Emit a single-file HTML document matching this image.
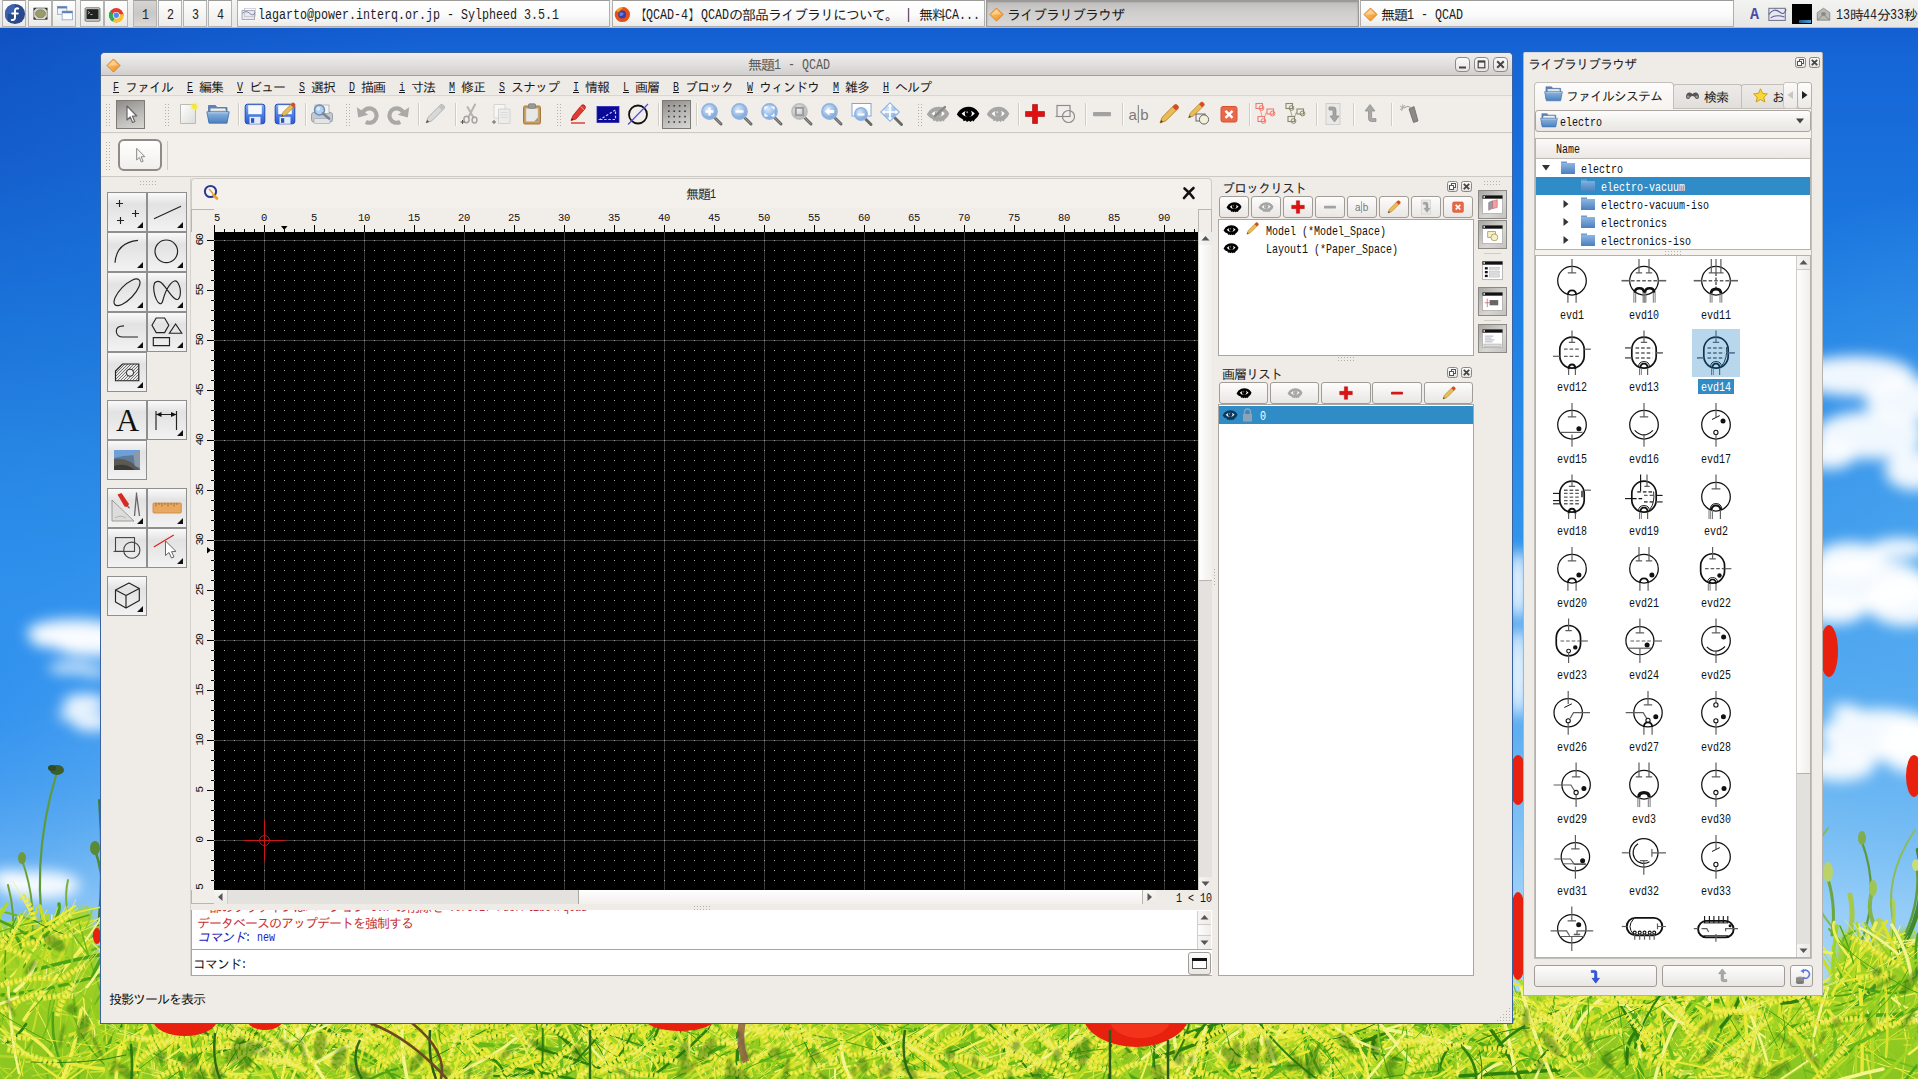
<!DOCTYPE html>
<html lang="ja"><head><meta charset="utf-8"><title>QCAD</title><style>
html,body{margin:0;padding:0}
body{width:1918px;height:1079px;overflow:hidden;position:relative;background:#2a86e4;font-family:"Liberation Mono","IPAGothic","Noto Sans CJK JP",monospace;font-size:12px;color:#1a1a1a}
div{position:absolute;box-sizing:border-box}
svg{position:absolute;overflow:visible}
.t{white-space:pre;overflow:visible}
.L{letter-spacing:0;font-style:normal;position:relative;top:-1px;display:inline-block;transform-origin:0 50%;white-space:pre;font-family:"Liberation Mono",monospace}
u{text-decoration:underline}
.btn{border:1px solid #a09c98;border-radius:3px;background:linear-gradient(#fdfdfc,#e9e6e3)}
.pbtn{border:1px solid #7d7a77;background:linear-gradient(160deg,#8e8c8a,#bcbab7 55%,#d9d7d4)}
.tb{border:1px solid #8f8f8f;background:linear-gradient(#fafafa 0%,#e2e2e2 30%,#f2f2f2 100%)}
</style></head><body>
<svg width="1918" height="1079" viewBox="0 0 1918 1079" style="left:0;top:0"><defs>
<linearGradient id="sky" x1="0" y1="0" x2="0" y2="1">
<stop offset="0" stop-color="#1157cc"/><stop offset=".05" stop-color="#1565d6"/><stop offset=".30" stop-color="#1f80e3"/><stop offset=".50" stop-color="#3294ea"/><stop offset=".62" stop-color="#4aa4ef"/><stop offset=".74" stop-color="#74bbf3"/><stop offset=".84" stop-color="#9fd2f8"/><stop offset="1" stop-color="#b9ddf9"/>
</linearGradient>
<radialGradient id="skl" cx="0" cy="0" r="1" gradientUnits="userSpaceOnUse" gradientTransform="translate(-60 0) scale(500 620)">
<stop offset="0" stop-color="#0a3cae" stop-opacity=".5"/><stop offset=".5" stop-color="#0a3cae" stop-opacity=".18"/><stop offset="1" stop-color="#0a3cae" stop-opacity="0"/>
</radialGradient>
<radialGradient id="skl2" cx="0" cy="0" r="1" gradientUnits="userSpaceOnUse" gradientTransform="translate(-40 700) scale(330 300)">
<stop offset="0" stop-color="#2488ee" stop-opacity=".75"/><stop offset=".55" stop-color="#2488ee" stop-opacity=".4"/><stop offset="1" stop-color="#2488ee" stop-opacity="0"/>
</radialGradient>
<radialGradient id="skr" cx="0" cy="0" r="1" gradientUnits="userSpaceOnUse" gradientTransform="translate(1990 600) scale(380 420)">
<stop offset="0" stop-color="#5aaef2" stop-opacity=".7"/><stop offset=".55" stop-color="#5aaef2" stop-opacity=".35"/><stop offset="1" stop-color="#5aaef2" stop-opacity="0"/>
</radialGradient>
<linearGradient id="fld" x1="0" y1="0" x2="0" y2="1">
<stop offset="0" stop-color="#acd42c"/><stop offset=".5" stop-color="#98cc24"/><stop offset="1" stop-color="#84c21e"/>
</linearGradient>
<filter id="b8" x="-30%" y="-30%" width="160%" height="160%"><feGaussianBlur stdDeviation="7"/></filter>
<filter id="b3" x="-30%" y="-30%" width="160%" height="160%"><feGaussianBlur stdDeviation="3"/></filter>
<filter id="b05" x="-5%" y="-5%" width="110%" height="110%"><feGaussianBlur stdDeviation=".6"/></filter>
<filter id="b1" x="-30%" y="-30%" width="160%" height="160%"><feGaussianBlur stdDeviation="1"/></filter>
</defs><rect width="1918" height="1079" fill="url(#sky)"/><rect width="1918" height="1079" fill="url(#skl)"/><rect width="400" height="1079" fill="url(#skl2)"/><rect x="1500" width="418" height="1079" fill="url(#skr)"/><g filter="url(#b8)" fill="#fff"><ellipse cx="75" cy="632" rx="48" ry="13" opacity=".93"/><ellipse cx="95" cy="645" rx="40" ry="12" opacity=".93"/><ellipse cx="60" cy="640" rx="30" ry="8" opacity=".93"/><ellipse cx="70" cy="668" rx="22" ry="5" opacity=".93"/><ellipse cx="95" cy="672" rx="14" ry="4" opacity=".93"/><ellipse cx="85" cy="703" rx="22" ry="9" opacity=".93"/><ellipse cx="92" cy="722" rx="20" ry="9" opacity=".93"/><ellipse cx="70" cy="715" rx="12" ry="5" opacity=".93"/><ellipse cx="40" cy="885" rx="40" ry="14" opacity=".93"/><ellipse cx="10" cy="880" rx="20" ry="10" opacity=".93"/><ellipse cx="1855" cy="376" rx="60" ry="20" opacity=".93"/><ellipse cx="1905" cy="400" rx="40" ry="22" opacity=".93"/><ellipse cx="1870" cy="435" rx="55" ry="24" opacity=".93"/><ellipse cx="1830" cy="455" rx="25" ry="14" opacity=".93"/><ellipse cx="1915" cy="470" rx="30" ry="20" opacity=".93"/><ellipse cx="1850" cy="560" rx="35" ry="18" opacity=".93"/><ellipse cx="1900" cy="548" rx="30" ry="10" opacity=".93"/><ellipse cx="1860" cy="585" rx="70" ry="28" opacity=".93"/><ellipse cx="1905" cy="600" rx="40" ry="26" opacity=".93"/><ellipse cx="1835" cy="610" rx="30" ry="14" opacity=".93"/><ellipse cx="1880" cy="735" rx="60" ry="26" opacity=".93"/><ellipse cx="1910" cy="745" rx="30" ry="28" opacity=".93"/><ellipse cx="1840" cy="765" rx="35" ry="16" opacity=".93"/><ellipse cx="1845" cy="710" rx="15" ry="6" opacity=".93"/><ellipse cx="1518" cy="585" rx="10" ry="35" opacity=".93"/><ellipse cx="1518" cy="672" rx="10" ry="45" opacity=".93"/></g><path filter="url(#b3)" fill="url(#fld)" d="M-30 925 L11 926 L27 912 L40 927 L55 928 L72 910 L89 908 L111 1023 L123 1025 L134 1014 L153 1023 L169 1025 L184 1020 L202 1012 L213 1028 L223 1024 L237 1008 L255 1010 L265 1026 L273 1017 L293 1008 L314 1016 L329 1027 L348 1020 L367 1021 L381 1026 L396 1012 L418 1019 L427 1009 L437 1023 L448 1016 L466 1021 L486 1028 L507 1017 L521 1024 L542 1020 L559 1019 L575 1026 L589 1026 L600 1018 L618 1008 L639 1016 L656 1029 L675 1013 L694 1018 L710 1026 L727 1011 L746 1028 L757 1028 L778 1026 L790 1017 L799 1010 L814 1028 L829 1010 L842 1010 L856 1012 L864 1017 L878 1021 L899 1011 L907 1027 L924 1009 L938 1030 L955 1018 L971 1016 L987 1015 L995 1017 L1003 1010 L1012 1027 L1028 1009 L1039 1021 L1051 1027 L1063 1012 L1082 1009 L1103 1018 L1116 1019 L1126 1020 L1140 1022 L1161 1024 L1175 1028 L1196 1027 L1214 1025 L1223 1027 L1243 1024 L1255 1021 L1273 1030 L1284 1017 L1298 1016 L1314 1017 L1330 1018 L1338 1021 L1355 1018 L1363 1020 L1380 1026 L1398 1012 L1406 1028 L1424 1018 L1439 1019 L1457 1019 L1474 1030 L1486 1023 L1494 1026 L1502 1001 L1510 991 L1522 1000 L1537 989 L1554 999 L1567 985 L1580 985 L1593 991 L1614 999 L1626 989 L1646 992 L1655 980 L1672 1001 L1691 984 L1703 996 L1714 1000 L1734 988 L1745 990 L1755 1001 L1769 1000 L1788 983 L1797 999 L1810 990 L1828 987 L1843 930 L1852 935 L1871 945 L1882 943 L1897 933 L1908 928 L1916 941 L1927 935 L1950 940 L1950 1110 L-30 1110Z"/><path d="M48 960 Q28 866 57 772" stroke="#5d9a3a" stroke-width="2.2" fill="none" stroke-linecap="round"/><path d="M30 950 Q38 905 22 860" stroke="#6aa23a" stroke-width="2" fill="none" stroke-linecap="round"/><path d="M92 940 Q111 895 95 850" stroke="#4f8c30" stroke-width="2.5" fill="none" stroke-linecap="round"/><path d="M75 935 Q62 907 68 880" stroke="#7cae3c" stroke-width="2" fill="none" stroke-linecap="round"/><path d="M12 945 Q16 915 8 885" stroke="#6da23a" stroke-width="2" fill="none" stroke-linecap="round"/><path d="M98 930 Q104 865 99 800" stroke="#3f7d2a" stroke-width="2" fill="none" stroke-linecap="round"/><path d="M1835 930 Q1789 879 1828 828" stroke="#86b85a" stroke-width="2" fill="none" stroke-linecap="round"/><path d="M1862 940 Q1880 891 1862 842" stroke="#5c9a40" stroke-width="2.2" fill="none" stroke-linecap="round"/><path d="M1880 935 Q1864 912 1873 890" stroke="#83b54a" stroke-width="4" fill="none" stroke-linecap="round"/><path d="M1850 1010 Q1938 930 1918 850" stroke="#3f8a2a" stroke-width="4.5" fill="none" stroke-linecap="round"/><path d="M1895 930 Q1881 880 1915 830" stroke="#8cbc5a" stroke-width="2" fill="none" stroke-linecap="round"/><path d="M1905 935 Q1922 897 1916 860" stroke="#5f9c3a" stroke-width="2.5" fill="none" stroke-linecap="round"/><path d="M1832 935 Q1837 902 1825 870" stroke="#6da63c" stroke-width="3" fill="none" stroke-linecap="round"/><path d="M1845 950 Q1856 922 1850 895" stroke="#a6c94a" stroke-width="5" fill="none" stroke-linecap="round"/><path d="M1875 960 Q1899 930 1893 900" stroke="#b2d04a" stroke-width="3" fill="none" stroke-linecap="round"/><ellipse cx="57" cy="770" rx="7" ry="5" fill="#3d5e2c"/><ellipse cx="52" cy="768" rx="4" ry="3" fill="#2f4a24"/><ellipse cx="22" cy="858" rx="4" ry="6" fill="#6e9a3c"/><ellipse cx="95" cy="848" rx="5" ry="7" fill="#5a8a34"/><ellipse cx="1862" cy="838" rx="4" ry="7" fill="#7fae4a"/><ellipse cx="1828" cy="872" rx="5" ry="10" fill="#b9d36a"/><ellipse cx="1879" cy="935" rx="8" ry="17" fill="#b5d25a"/><ellipse cx="1916" cy="865" rx="4" ry="6" fill="#c9dc7a"/><ellipse cx="1873" cy="888" rx="4" ry="8" fill="#9fc652"/><g fill="none" stroke-linecap="round" filter="url(#b05)"><path d="M864 1063q26 -26 47 -43M902 1089q-53 -12 -97 -36M145 1082q21 -9 34 -22M1159 1057q-7 -26 -15 -38M586 1074q41 -24 72 -44M1460 1093q11 -29 5 -66M1423 1045q-18 -11 -47 -28M1214 1029q-7 -13 -16 -18M1246 1075q8 -21 14 -48M768 1086q-12 -5 -16 -22M92 950q30 -11 65 -32M256 1089q10 -21 23 -38M1710 998q4 -3 5 -16M1789 1029q51 -23 104 -36M1322 1058q15 -29 44 -50M1916 1038q12 -55 40 -109M684 1073q10 -16 22 -46M1160 1086q32 1 73 -5M429 1085q-3 -14 3 -42M809 1053q-14 -25 -30 -46M1469 1089q24 -16 35 -34M-11 1073q10 -47 22 -82M281 1049q45 -20 72 -38M229 1070q-2 -7 3 -26M1833 1034q-10 -40 -25 -97M629 1053q17 -11 21 -34M1526 1069q4 -18 3 -40M400 1039q28 -12 58 -19M928 1037q19 -15 35 -15M1013 1048q-15 -9 -8 -25M371 1054q20 -21 19 -50M1040 1042q8 -21 18 -37M5 936q14 -6 17 -21M1555 1007q-1 -22 9 -31M779 1036q-15 -14 -30 -21M752 1091q20 -6 18 -26M1745 1044q-34 -18 -47 -28M695 1032q-24 -4 -50 -18M1813 1049q-7 -10 -16 -19M1630 1092q0 -19 20 -35M266 1064q-31 -22 -40 -49M1734 1068q13 -18 16 -44M78 1083q2 -52 -7 -101M914 1051q-28 -17 -54 -39M1023 1046q-35 -22 -59 -35M445 1067q29 -20 64 -50M1702 1080q8 -40 17 -81M166 1062q-12 -24 -19 -43M68 1046q28 -47 55 -82M1500 1049q18 -29 43 -56" stroke="#6cb81a" stroke-width="2.6"/><path d="M853 1034q10 -6 -1 -17M128 1069q-4 -19 -5 -50M1690 1060q0 -27 -7 -45M615 1064q26 -9 32 -20M168 1092q56 -27 91 -68M1153 1088q-4 -10 8 -28M1063 1059q20 -11 19 -37M1525 1084q9 -18 37 -33M214 1055q-8 -23 -18 -45M440 1048q28 -18 59 -40M498 1065q-25 -21 -33 -34M1441 1029q-6 -6 3 -23M1295 1038q51 -5 95 -26M1576 1014q5 6 32 0M1605 1038q0 -8 -15 -29M-18 929q37 -10 62 -10M1066 1079q3 -32 -16 -69M1273 1034q35 -12 70 -28M1622 1026q41 -18 58 -22M1691 1050q10 -14 32 -13M250 1087q9 -16 2 -46M1317 1052q25 -14 48 -38M775 1051q-61 -12 -100 -39M964 1087q33 -16 79 -41M539 1064q38 -30 62 -57M1417 1046q5 -8 17 -29M1032 1066q0 -24 -5 -35M371 1089q-33 -16 -83 -32M601 1094q-9 -15 -12 -25M797 1045q-22 -21 -62 -31M1703 1081q29 -5 44 -19M1358 1037q44 -13 108 -25M202 1044q12 -25 19 -38M1277 1025q1 -5 25 -14M1593 1090q-12 -16 -9 -28M1204 1090q0 -39 22 -82M1695 1066q5 -25 -5 -57M1507 1078q9 -48 18 -96M952 1073q-13 -18 -48 -23M5 1087q38 -29 77 -53M1015 1082q-36 -37 -50 -62M1945 987q-6 -23 -14 -61M1193 1072q52 -22 111 -35M368 1024q34 6 47 0M912 1031q48 -4 82 -18M285 1041q18 -11 33 -34M927 1046q-8 -19 -3 -38M630 1061q0 -18 -22 -46M1847 955q22 -4 22 -13M1410 1072q-22 -10 -37 -29M878 1081q7 -31 -6 -76M732 1024q11 -4 45 -2M1235 1073q31 -30 44 -48M1015 1029q24 -2 64 -12M1557 1002q-28 -19 -74 -24M546 1092q-13 -24 -45 -60" stroke="#a0d424" stroke-width="1.4"/><path d="M1187 1035q18 -8 23 -11M463 1037q11 -14 26 -15M59 1083q-19 -9 -35 -18M869 1046q-17 -20 -17 -39M1897 1060q-20 -17 -20 -27M927 1040q23 -12 70 -28M1258 1050q-22 -11 -43 -37M121 1045q-14 -12 -19 -35M1325 1034q11 -14 14 -26M693 1028q19 2 41 -7M496 1061q-1 -7 -21 -22M530 1025q-8 -1 -21 -1M174 1089q0 -25 5 -45M322 1062q36 -29 71 -46M91 955q-1 -21 -4 -49M1091 1051q9 -27 9 -46M504 1027q-53 -11 -85 -15M-16 1032q0 -6 5 -28M770 1032q-12 -9 -5 -13M448 1046q22 -14 50 -22M1856 988q-9 -21 -22 -54M1202 1062q21 -21 40 -43M1404 1089q-53 -18 -100 -48M571 1083q15 -15 35 -17M72 1033q30 -10 38 -12M227 1026q-4 0 -18 -11M1833 1033q22 -5 60 -23M1904 989q31 -31 82 -61M250 1065q-29 -32 -55 -52M1816 1026q19 -22 33 -39M948 1079q41 -19 80 -43M370 1031q-8 -11 -38 -16M355 1083q11 -4 25 -12M1357 1075q24 -32 65 -55M883 1070q16 -16 30 -30M1622 1009q5 -10 22 -31M1292 1084q9 -36 -2 -79M712 1031q-39 -5 -65 -7M1356 1076q-15 -25 -42 -51M954 1057q3 -23 26 -50M1315 1029q0 -9 18 -11M1472 1075q-31 1 -45 -3M1025 1078q21 -3 49 -14M970 1048q-32 -10 -77 -27M1912 1035q22 -21 34 -31M1048 1042q9 1 33 -10M1234 1031q36 -3 60 -7M129 1029q-17 1 -24 -7M1848 1082q27 -17 42 -25M1049 1040q17 -11 42 -26M562 1073q-8 -36 -1 -65M4 1018q-27 -25 -35 -62M977 1034q10 -11 18 -27M1242 1088q12 -14 28 -24M1695 1034q9 -23 3 -46M1750 1043q-1 -25 20 -55M1407 1082q8 -9 18 -26M189 1056q-9 -20 3 -30M250 1029q-24 -6 -38 -15M1384 1047q-1 -22 -16 -31M46 1044q13 -46 5 -83M1193 1028q26 6 50 2M1620 1051q4 -26 -7 -64M588 1077q0 -23 21 -61M1067 1026q-18 -11 -22 -14M686 1059q1 -19 11 -43M1184 1070q-12 -6 -31 -28M724 1074q0 -30 0 -65M1339 1078q-7 -18 -34 -46M445 1027q28 -1 54 -12M299 1059q19 -15 19 -34" stroke="#a0d424" stroke-width="1"/><path d="M1138 1037q23 -14 39 -26M1711 1034q44 -21 73 -31M165 1085q10 -32 18 -73M928 1052q-3 -18 -25 -33M1504 1007q32 -3 68 -9M911 1082q18 -15 16 -20M-27 924q-11 -8 -33 -7M1778 1039q26 -25 30 -36M1862 946q10 -10 0 -23M680 1054q-5 -21 -14 -42M559 1024q46 -3 93 -11M18 1080q10 -21 7 -56M1078 1039q39 2 91 5M501 1051q-28 -18 -36 -40M1027 1049q10 -21 26 -27M1031 1081q-19 -30 -15 -68M689 1034q-40 -16 -84 -22M976 1031q39 -10 57 -22M760 1048q10 6 36 2M1577 1067q-35 -12 -66 -23M1520 1023q14 -14 21 -44M290 1059q-25 -22 -33 -42M118 1073q-6 -2 -28 -1M-12 1088q18 -6 33 -26M1780 1010q-3 -9 8 -26M432 1040q34 -13 57 -20M1151 1070q0 -31 8 -57M-2 947q29 -11 35 -26M1513 998q-5 -9 -20 -10M1051 1034q0 -12 12 -18M1906 945q25 -2 47 -9M981 1030q32 -9 45 -12M1871 1049q10 -35 8 -73M822 1050q36 -16 53 -41M319 1055q10 -19 23 -37M670 1060q-23 -17 -40 -34M590 1087q-1 -37 15 -81M1936 1022q-1 -25 -7 -65M1012 1025q27 0 66 -9M1323 1035q16 -10 28 -15M476 1041q22 -18 46 -31M1210 1074q18 -37 41 -63M33 969q-21 -18 -44 -50M68 928q40 -14 74 -15M1265 1064q-4 -31 -18 -60M1923 1004q33 -27 80 -68M1773 1067q19 -25 34 -56M744 1038q36 -7 58 -17M8 1033q-25 -33 -61 -63M336 1073q17 -27 17 -57M1838 1029q-36 -21 -57 -34M58 1003q20 -40 53 -95M836 1036q-11 -5 -14 -15M1036 1082q16 -8 32 -22M638 1083q-5 -37 -15 -60M514 1073q-37 -6 -71 -13M1176 1041q17 -7 17 -23M268 1063q19 -23 35 -55M438 1088q-38 0 -87 -4M1687 1054q55 -30 104 -50M294 1026q-57 -17 -91 -20M721 1055q43 -22 65 -34M1658 1055q40 0 75 3M1323 1088q38 -38 61 -82M297 1038q6 -9 14 -26M1188 1041q-8 -12 -37 -23M1474 1037q-5 -13 0 -33M1070 1036q16 -10 31 -27M539 1091q-37 -22 -56 -42M560 1075q38 -28 71 -44M1516 998q3 -9 23 -5M1871 1049q-15 -33 -24 -64M1845 971q25 -14 56 -37M1278 1090q-13 -39 -20 -66M935 1069q-4 -8 0 -30" stroke="#dae42e" stroke-width="1.4"/><path d="M1060 1090q19 -11 26 -19M1882 1028q9 -41 13 -91M1284 1080q17 -17 34 -49M1830 1042q10 -20 0 -31M582 1085q5 -44 -12 -73M1873 1087q-10 -39 -7 -66M1140 1069q7 -23 27 -54M1322 1032q0 -14 21 -25M186 1073q2 -37 4 -61M988 1025q33 0 49 -14M19 944q13 -13 42 -24M153 1086q0 -24 -4 -34M1200 1078q-32 -17 -44 -26M1510 1001q-31 -11 -72 -19M1469 1042q14 -11 44 -18M1243 1093q9 -34 36 -77M1051 1059q3 -21 -11 -32M12 1012q-41 -6 -94 -27M1584 1053q-7 -37 -3 -67M1269 1076q-2 -29 -6 -58M410 1084q7 -33 23 -79M134 1028q32 -1 56 -13M933 1090q15 -39 12 -70M899 1059q-14 -19 -12 -49M1262 1079q28 -37 60 -64M1257 1039q15 -16 45 -30M1675 1032q-7 -15 -23 -46M608 1085q-8 -18 -10 -26M1356 1073q-35 -21 -92 -30M87 978q37 -10 57 -19M731 1067q4 -11 16 -37M816 1093q28 -16 75 -47M1097 1036q-1 -11 15 -15M1104 1069q35 -19 50 -43M766 1089q11 -38 15 -83M1765 1044q9 -31 36 -54M503 1066q-32 -34 -58 -62M1829 1076q-44 -49 -69 -96" stroke="#dae42e" stroke-width="2"/><path d="M1644 1034q-24 -21 -47 -58M578 1059q18 -16 46 -45M1814 1032q-15 -26 -14 -55M583 1091q-28 -27 -53 -57M865 1050q-9 -25 -41 -39M1904 944q31 -9 86 -15M710 1070q-18 -22 -22 -32M942 1050q25 -15 36 -34M1277 1041q-19 -12 -29 -30M1195 1092q7 -35 -7 -77M27 951q32 -7 55 -17M427 1083q6 -40 19 -71M809 1050q49 -22 94 -39M420 1080q-38 -27 -91 -51M655 1052q58 -24 97 -38M1374 1076q5 -34 10 -56M204 1075q28 -16 68 -24M1227 1047q12 -19 20 -28M1251 1053q55 -28 94 -47M1404 1062q22 -21 65 -41M688 1088q-1 -31 -2 -67M1946 1040q-6 -13 -8 -23M1521 1001q-26 -2 -37 -18M1742 1060q6 -24 -3 -41M1910 954q-12 -11 -45 -28M237 1056q-23 -17 -60 -21M1423 1054q-16 -15 -11 -46M431 1029q-19 -4 -20 -20M1731 1046q50 -36 100 -61M1415 1094q-22 -9 -29 -17M1744 1003q-13 -5 -30 -21M425 1061q26 -33 59 -52M484 1092q18 -43 17 -73M353 1065q-20 -27 -58 -51M1151 1090q19 -10 38 -36M429 1054q-16 -20 -16 -32M604 1080q-4 -20 4 -40M1637 1053q22 -10 28 -8M388 1037q-6 -18 -3 -27M828 1026q-2 0 -4 -11M63 1074q-13 -49 -44 -94M136 1045q-17 -15 -30 -26M398 1064q30 -11 45 -17M1148 1026q1 -2 19 -9M1100 1031q-15 -10 -49 -13M1069 1038q7 -16 3 -29M565 1094q46 3 102 4M1326 1066q-17 -32 -26 -58M416 1093q-27 -13 -50 -17M1482 1077q-18 -39 -55 -71M1433 1075q-11 -27 -27 -69M52 942q40 -13 63 -38M1307 1085q-14 -38 -9 -64M666 1048q11 -12 39 -15M447 1053q16 -25 22 -41M1784 1006q-12 -8 -12 -29M-29 1040q18 -2 49 8M1928 1075q-44 -7 -77 -21M702 1055q0 -17 10 -43M1297 1035q20 -2 57 -18M453 1090q39 -26 78 -53M296 1067q38 -38 92 -61M1686 1054q-29 0 -74 -5M739 1093q23 -19 37 -30M180 1057q30 -23 45 -33M349 1082q0 -25 2 -59M1088 1071q-7 -10 -36 -17" stroke="#f2f058" stroke-width="1"/><path d="M756 1029q9 -15 -1 -18M1275 1055q-36 -16 -87 -46M1121 1084q-8 -45 -18 -80M783 1068q-1 -21 0 -44M974 1051q25 -16 46 -28M491 1045q19 -9 21 -28M261 1072q-23 -34 -47 -54M1786 1068q-10 -49 -34 -87M524 1064q-15 -30 -37 -52M610 1065q-13 -15 -45 -47M232 1034q27 -16 60 -23M106 1079q28 -3 66 0M906 1077q0 -37 0 -66M1455 1059q-10 -26 -3 -39M267 1088q0 -15 8 -43M1846 977q-1 -13 0 -37M1939 1080q-26 -49 -44 -94M88 973q-11 -6 -34 -27M633 1079q0 -7 -20 -18M1217 1075q10 -17 31 -34M1697 1083q0 -55 16 -96M1391 1044q34 -6 67 -20M-29 967q-22 -9 -20 -29M994 1059q48 -25 110 -43M1369 1039q-20 -7 -30 -21M1761 1071q26 -18 47 -24M66 1037q21 -16 35 -17M1368 1093q-22 -11 -36 -16M1427 1090q38 -42 52 -73M617 1065q16 -22 47 -33M1728 1046q21 -29 42 -64M1732 1054q13 -30 7 -50M936 1048q8 -6 35 -27M252 1029q-39 1 -67 -6M54 945q45 -20 95 -31M868 1086q20 -25 22 -65M1754 1072q0 -37 19 -84M543 1077q18 -13 34 -18M1621 1009q-27 -22 -36 -31M1352 1041q-20 -21 -57 -35M1168 1094q12 -39 18 -85M1708 1079q25 -49 67 -91M1085 1073q17 -22 28 -31M778 1056q-18 -12 -58 -37M132 1056q1 -10 -8 -34M182 1058q37 -10 77 -29M1186 1024q-18 -7 -44 -6M644 1035q14 -11 52 -30M259 1085q-8 -22 -18 -32M1636 1082q3 -49 15 -91M119 1052q-40 -18 -63 -30M1481 1086q-19 -33 -33 -68M1367 1077q19 -21 27 -58M29 1007q-25 -24 -59 -46M540 1037q-13 -17 -21 -25M1733 1058q26 -7 43 -18M25 972q-24 -30 -28 -59M761 1080q-16 -30 -28 -68M277 1029q32 -2 56 -10M975 1030q26 -4 55 -12M794 1063q-10 -23 -17 -45M575 1084q-9 -32 -22 -60M1431 1051q-46 -9 -102 -23M1930 997q-25 -25 -66 -43M1634 1064q14 -17 6 -32M878 1032q20 -16 57 -18" stroke="#90cc20" stroke-width="3.4"/><path d="M1368 1024q-37 -1 -59 -9M1741 1013q4 -11 30 -35M841 1078q-12 -33 -11 -70M673 1031q0 -1 25 -12M219 1028q-1 -9 -16 -18M1678 1025q12 -25 47 -40M1871 973q-28 -28 -42 -44M1645 1049q20 -20 32 -47M1764 1078q22 -12 35 -30M207 1029q18 -1 28 -13M1322 1054q11 -27 34 -48M572 1039q23 -8 22 -32M52 928q-20 -9 -55 -18M684 1093q36 -20 61 -26M1563 1011q-7 -15 -16 -22M51 1093q-9 -31 1 -48M1286 1025q-20 -5 -42 -12M1177 1025q-17 -10 -53 -19M1833 1087q-5 -10 -29 -17M1196 1027q39 -3 98 -19M1074 1038q23 0 27 -14M359 1025q-39 -5 -72 -12M15 1062q8 -7 19 -23M99 1052q18 -38 17 -93M483 1034q15 -15 51 -19M183 1093q-11 -38 -16 -86M357 1028q-12 -14 -42 -16M939 1042q48 -24 86 -35M203 1089q4 -41 0 -82M1440 1094q-17 -37 -55 -76M115 1030q19 -15 38 -24M1101 1072q-6 -21 -2 -31M398 1039q3 -8 9 -28M1671 1084q21 -23 21 -61M1095 1027q-15 -2 -40 -14M1843 941q-1 -5 12 -10M172 1027q-1 -17 4 -23" stroke="#6cb81a" stroke-width="2"/><path d="M229 1069q-21 -11 -29 -20M613 1062q-13 -29 -28 -57M1121 1045q20 -11 63 -26M1760 1048q12 -31 35 -65M997 1033q1 -17 -8 -20M270 1086q-11 -30 -2 -50M1210 1055q21 -26 32 -44M1690 1092q11 -8 2 -31M771 1059q37 -23 88 -47M981 1058q-8 -14 5 -38M1527 1075q0 -34 13 -81M376 1086q-32 -45 -49 -79M510 1090q13 -14 23 -21M686 1046q0 -7 3 -25M1219 1025q11 -2 1 -6M62 1068q0 -46 13 -81M423 1026q-16 -1 -26 -8M1609 1078q22 -44 51 -90M285 1054q-4 -29 -18 -44M1288 1041q-12 -20 -14 -27M1198 1037q-26 -10 -47 -26M1574 1087q-38 -14 -61 -29M1120 1042q6 -21 20 -33M633 1045q15 -10 8 -34M926 1068q-23 -14 -46 -41M1597 1065q5 -7 -11 -29M1749 1051q-12 -40 -22 -66M587 1025q3 1 26 -8M300 1048q-22 -3 -31 -12M448 1089q-9 -37 -19 -67M954 1068q1 -17 0 -32M1541 1053q-13 -10 -12 -32M-11 948q-14 -16 -51 -37M11 1004q-23 0 -39 4M936 1032q15 -4 39 -23M1545 1030q12 -1 29 -16M372 1051q5 -19 -6 -42M1824 1001q18 -20 48 -25M1049 1036q22 -15 44 -15M530 1085q-35 -26 -78 -64M1861 1000q-37 -40 -54 -75M1732 1091q17 -5 23 -20M763 1073q-14 -33 -7 -63M194 1079q-13 -33 -8 -58M978 1057q17 -18 43 -41M1800 1007q-18 -13 -27 -18M1493 1038q43 -11 63 -16M1687 1038q3 -10 18 -34M1826 1040q22 -34 29 -58M947 1028q-4 -3 -14 -15M266 1043q15 -13 37 -35M780 1024q13 0 27 -10M1823 1058q-10 -32 0 -62M1581 1046q-22 -27 -25 -61M34 973q16 -35 55 -65M1849 1029q3 -26 7 -66M26 1004q20 -2 36 -10M236 1026q-31 -3 -55 -19M894 1076q25 -16 35 -35M474 1093q14 -5 18 -18M1163 1044q-22 -11 -68 -23M535 1053q-30 -24 -68 -38M773 1028q-35 -17 -64 -21M1480 1035q-27 -11 -35 -22M559 1081q-1 -34 10 -64M1913 959q31 -12 48 -26M380 1041q-11 -7 -14 -26M1602 1018q1 -15 11 -39M1486 1029q-17 -10 -14 -19M1469 1074q-4 -32 13 -54M1403 1085q-15 -11 -32 -33M8 1084q-20 -27 -24 -67M339 1080q5 -28 -11 -59M321 1072q-5 -16 3 -27M784 1057q-27 -30 -38 -49M469 1065q-14 -29 -12 -47M606 1070q-1 -31 -5 -63M288 1044q36 -9 50 -32M1399 1079q40 -31 66 -55M804 1064q43 -22 96 -54M942 1051q15 -5 27 -11M423 1058q12 -20 3 -53M576 1042q14 -18 26 -22M1649 1027q-25 -27 -34 -46M880 1044q-1 -13 4 -29M1373 1066q33 -36 83 -60M588 1033q-19 -6 -24 -21M494 1059q8 -16 35 -19M584 1084q31 -27 40 -47M1338 1059q5 -20 13 -41M1436 1033q-2 -16 13 -26M1411 1038q-1 -13 5 -26M53 937q14 -6 9 -24M56 936q7 -12 30 -29M1597 1094q20 -49 44 -105M816 1069q10 -17 43 -19M1665 1002q32 3 42 -9M1601 1061q-13 -11 -4 -24M743 1090q-3 -31 -17 -69M204 1073q24 -15 69 -17M523 1061q-19 -21 -61 -30M208 1075q-1 -34 2 -55M1790 1081q-17 -24 -28 -33M1826 1094q-18 -44 -29 -91M-8 1072q-10 -19 -6 -39M426 1086q-18 -14 -43 -43M420 1086q2 -7 -15 -20M1392 1069q22 -12 49 -41M397 1072q0 -36 22 -59" stroke="#b0d826" stroke-width="1"/><path d="M1659 1059q-1 -12 9 -33M1164 1073q-8 -36 -24 -67M642 1092q17 -20 14 -51M758 1029q-40 -16 -59 -18M101 951q-24 -22 -35 -29M1010 1043q-6 -13 -2 -34M922 1060q2 -20 0 -38M1411 1064q-50 -6 -81 -24M996 1036q-16 -19 -33 -25M1337 1070q-7 -14 -36 -35M1362 1057q-2 -9 7 -34M443 1071q-39 -29 -58 -64M1688 1077q40 1 58 -7M228 1065q6 -5 25 -26M1218 1046q-23 -25 -33 -37M356 1035q-32 -5 -85 -16M804 1032q43 -12 95 -22M1473 1067q22 -17 25 -25M400 1062q5 -19 15 -46M1635 1071q-14 -38 -33 -82M1803 1059q9 -32 32 -62M1829 1054q7 -7 32 -13M1689 1062q29 -42 45 -74M1558 1009q-48 -11 -89 -24M1179 1089q15 -13 23 -21M1809 1042q-7 -21 -8 -58M209 1087q-23 -8 -37 -13M1350 1088q-10 -34 -9 -79M1947 1038q26 -16 77 -43M672 1043q21 -11 34 -31M1588 1067q5 -35 31 -86M505 1033q34 1 82 7M467 1029q-45 -18 -74 -24M715 1085q1 -17 -4 -32M1318 1084q3 -29 -6 -68M1495 1059q24 -24 27 -52M1778 1061q-35 -6 -52 -15M263 1028q15 3 10 -4M329 1026q8 -4 2 -18M361 1045q15 -18 19 -35M85 1029q0 -23 -2 -35M897 1070q23 -11 38 -22M228 1074q42 -25 62 -54M542 1073q29 -8 56 -32M1906 1040q-4 -36 -20 -65M1652 1027q-27 -17 -74 -48M1236 1085q20 -9 56 -9M1498 1043q18 -14 19 -35M1235 1054q-3 -14 15 -40M224 1085q12 -19 32 -53M463 1092q38 -29 66 -65M1000 1075q20 -23 34 -56M1894 998q53 -10 97 -35M29 973q-6 -33 -11 -57M1218 1043q36 -8 83 -16M1898 962q20 -13 57 -40M1629 1036q-24 -18 -27 -40M1549 996q13 -8 11 -13M1703 996q-9 -4 -9 -7M597 1079q-21 -34 -24 -70M667 1041q6 -9 -3 -18M351 1029q-39 -12 -67 -19M293 1044q9 -16 8 -34M1234 1071q28 -12 51 -26M1636 1001q-11 -14 -8 -23M1042 1048q14 -6 19 -26M703 1031q-17 -5 -14 -23M1676 1055q-16 -17 -38 -40M1778 1014q1 -19 1 -23" stroke="#f2f058" stroke-width="1.4"/><path d="M620 1045q-7 -18 -19 -24M1533 1081q-25 -27 -54 -58M871 1038q4 -8 26 -13M75 1058q16 -45 27 -89M1733 1001q-5 -8 -18 -25M1502 1033q35 -24 81 -55M291 1085q-36 -37 -83 -67M579 1061q13 -22 8 -48M1440 1062q14 -35 44 -55M1492 1038q12 -7 28 -14M914 1038q-27 -17 -44 -32M970 1058q24 -14 32 -34M15 951q-27 -19 -53 -44M138 1065q-33 -29 -46 -54M1201 1070q42 -16 84 -32M366 1069q-24 -10 -33 -24M1111 1087q-26 -46 -57 -80M224 1073q-3 -18 4 -52M1342 1050q31 -21 40 -31M47 1013q28 -46 45 -103M1195 1063q44 -3 74 -14M1379 1055q37 -27 79 -42M1337 1071q5 -13 23 -23M605 1067q-2 -8 16 -20M1895 1058q-10 -47 -43 -98M45 938q13 -7 27 -24M327 1059q-12 -10 -25 -13M1926 979q49 0 111 -8M1253 1093q29 -11 64 -32M1293 1064q-6 -16 -2 -48M428 1069q33 -6 47 -22M258 1089q12 -14 23 -27M122 1051q38 -11 69 -34M375 1071q22 -23 21 -60M1208 1082q-7 -42 -14 -72M1108 1064q3 -17 0 -42M1844 1093q4 -39 2 -92M506 1064q-9 -21 -1 -53M64 1008q-1 -47 8 -101M1773 1053q-25 -37 -68 -69M814 1042q32 -7 65 -30M399 1087q-21 -8 -29 -22M1582 1019q13 -10 14 -35M1247 1067q-12 -24 -18 -53M1799 1020q12 -14 41 -36M22 1008q-21 -37 -32 -69M1424 1074q-26 -30 -62 -50M1840 1051q-34 -16 -46 -28M1312 1034q37 -18 61 -29M1549 1001q-48 -14 -89 -23M679 1061q4 -9 11 -25M1158 1050q-5 -13 -5 -26M214 1055q26 -26 58 -41M1906 1077q19 -19 17 -32M147 1062q2 -19 18 -52M1086 1033q22 -8 36 -26M1444 1081q-40 -11 -104 -20M1355 1080q-1 -13 18 -24M90 968q9 -18 28 -25M1072 1056q6 -10 5 -32M1580 1053q8 -38 15 -63M324 1031q32 -3 41 -21M1814 1086q52 -38 81 -69M522 1031q15 -11 19 -16M897 1069q-12 -32 -5 -59M1904 991q25 -26 66 -52M404 1092q-11 -18 -26 -22M1523 1042q6 -17 22 -41M893 1060q14 -9 25 -21M430 1047q-39 -15 -64 -39M834 1026q26 -14 60 -13M1913 1064q-14 -48 -46 -94M911 1057q37 -29 51 -51M1136 1093q27 1 33 -5M154 1063q33 -22 45 -31M757 1047q2 -15 7 -31M1870 1072q35 -46 61 -83M102 1023q42 -31 79 -47M1371 1051q33 -20 73 -36M719 1036q1 -19 0 -22M501 1090q-25 -7 -54 -20M1156 1044q5 -15 4 -25M1367 1050q9 -6 34 -28M682 1069q26 -33 29 -56M169 1086q-14 -43 -35 -80M371 1075q-28 -29 -53 -68M1052 1060q-5 -18 -19 -28M1855 1084q-39 -32 -63 -72M1884 1062q2 -47 -1 -96M595 1086q2 -46 -9 -77M1054 1083q6 -38 12 -63M294 1050q21 -21 49 -31M1935 1085q-27 -22 -78 -34M65 961q-40 -19 -66 -42M586 1035q1 -18 3 -25M387 1083q21 -5 54 -10M1432 1073q6 -2 32 -13M1555 1090q25 -45 51 -83M156 1037q4 -18 8 -31M939 1062q28 -15 63 -45M1487 1046q45 -25 82 -39M320 1054q5 -16 -5 -30M1097 1037q0 -11 -14 -17M1892 1015q15 -15 52 -33M462 1041q-17 -18 -15 -23M795 1042q-4 -17 -5 -35M398 1027q22 -3 22 -13M1118 1066q25 12 58 27M291 1061q14 -22 11 -44M548 1050q-16 -28 -11 -42" stroke="#90cc20" stroke-width="1.4"/><path d="M1131 1083q-3 -8 -26 -27M2 958q12 -16 36 -47M632 1091q39 -20 93 -32M1937 1054q30 -25 44 -65M207 1047q0 -9 21 -17M760 1027q-5 -10 10 -23M710 1075q34 -4 88 1M1776 1077q-13 -2 -40 -9M1324 1059q-28 -12 -65 -11M1038 1056q-5 -16 -12 -48M1065 1041q25 -10 45 -30M849 1082q18 -36 53 -75M295 1040q-5 -16 8 -26M1241 1066q-38 -17 -76 -35M1154 1057q-3 -24 -18 -49M490 1086q-18 -8 -17 -21M1494 1092q33 -15 48 -38M324 1038q60 -15 98 -20M975 1056q6 -8 34 -21M1835 1002q-34 -16 -51 -48M1775 1029q26 -17 45 -34M608 1047q-21 -1 -23 -10M162 1030q-46 -6 -106 -17M17 925q17 -2 20 -18M68 1070q54 -14 98 -15M654 1050q10 -29 -1 -43M1142 1061q17 -23 33 -51M74 1007q13 -10 12 -22M422 1030q-10 -19 -43 -23M579 1031q-12 -5 -14 -22M1365 1025q22 -8 59 -15M1429 1036q17 -5 31 -12M199 1049q18 -10 12 -37M190 1082q5 -17 -11 -47M847 1080q-13 -36 -8 -70M207 1029q0 2 3 -7M1563 1057q-6 -11 -11 -24M1341 1093q35 -43 68 -88M899 1077q25 -41 72 -70M1018 1043q29 -3 61 -10M855 1072q-30 -33 -70 -51M814 1044q11 -14 3 -36M284 1086q-19 0 -25 -4M1701 1030q30 -18 43 -47M824 1035q22 -7 32 -17M208 1046q42 -17 61 -35M1453 1036q12 -4 28 -8M1614 1012q14 -10 13 -18M-11 1036q-4 -24 2 -35M1483 1026q-29 -13 -41 -11M264 1031q2 -7 9 -8M1510 1065q-10 -2 -34 0M1780 1033q10 -23 31 -34M1102 1031q-1 -16 7 -25M1115 1042q10 -17 5 -35M1065 1046q3 -19 -4 -37M248 1084q-7 -35 -9 -65M292 1082q0 -15 10 -22M467 1065q-6 -15 -20 -27M301 1046q4 -19 -3 -41M524 1040q6 -20 28 -31M670 1026q43 -4 91 -8M1367 1033q-10 -7 -15 -12M551 1032q-34 -8 -80 -6M1182 1054q18 -22 26 -42M1331 1082q0 -11 20 -34M1797 1045q67 -4 116 -7M922 1075q24 -36 57 -65M1091 1083q21 -16 41 -17M157 1055q43 -20 79 -49M508 1046q-28 -17 -57 -39M971 1055q17 -29 26 -42M873 1030q-3 -16 1 -16M1318 1081q-11 -33 -18 -69M1494 1082q38 -36 67 -67M442 1089q-8 -26 -13 -67M970 1094q23 -9 49 -16M1902 1080q4 -38 16 -92M898 1086q5 -27 -8 -65M82 1094q15 -45 9 -95M859 1069q66 6 110 24M1918 970q22 -24 36 -35M728 1048q13 -9 6 -32M1073 1088q30 -21 76 -27M615 1053q31 -28 45 -47M516 1075q-24 -13 -48 -37M1922 995q21 -24 51 -57M1757 1088q11 -13 18 -42M1351 1030q-3 -18 5 -25M201 1069q6 -18 14 -26M1351 1043q12 -8 21 -22M1429 1042q7 -13 8 -37M-3 935q-4 -19 8 -24M1039 1040q7 -17 30 -20M297 1052q-5 -19 -21 -41M1730 1077q16 -10 12 -36M93 1090q0 -6 14 -21" stroke="#c6de2a" stroke-width="1.4"/><path d="M46 1088q25 -14 34 -32M477 1052q11 -10 21 -21M1762 1027q20 -9 39 -33M1128 1090q-63 -9 -114 -23M1858 986q-1 -33 1 -62M1671 1035q8 -22 39 -33M1900 1087q25 -7 41 -13M416 1086q29 -23 48 -32M775 1072q26 -11 66 -32M319 1089q31 -9 41 -16M349 1092q42 -8 83 -24M1901 955q-6 -12 5 -15M519 1038q-16 -6 -24 -14M1 946q5 -13 -1 -22M46 974q4 -28 6 -59M887 1094q17 -26 11 -68M1944 1074q-1 -9 10 -24M475 1025q-14 -5 -13 -7M1456 1075q8 -29 9 -68M473 1049q2 -15 5 -27M370 1050q-13 -16 -46 -32M612 1055q63 -2 104 -13M1446 1057q-17 -28 -23 -53M1857 977q41 -17 60 -39M1173 1036q-20 -14 -37 -26M1423 1029q0 2 0 -7M1416 1056q8 -25 36 -52M1884 943q20 -1 39 -5M714 1093q19 -11 24 -11M1452 1077q9 -9 31 -20M1309 1090q22 -7 22 -26M154 1069q2 -18 -17 -39M1448 1037q37 -4 77 -19M1923 1087q28 -21 35 -51M647 1025q-13 -4 -6 -16M497 1044q-16 -13 -14 -28M275 1052q12 -9 27 -30M333 1068q-19 -10 -25 -31M658 1028q8 -13 6 -17M935 1038q3 -19 15 -31M94 1037q4 -8 -12 -30M535 1080q35 -27 56 -61M182 1052q-3 -23 -8 -32M1151 1065q18 -3 25 -2M1354 1074q7 -17 31 -21M1908 1091q11 -16 35 -32M1874 1023q-13 -26 -38 -46M1175 1088q23 -29 52 -75M290 1056q4 -22 15 -32M426 1050q10 -11 39 -31M324 1030q20 -12 29 -19M1459 1045q11 -15 46 -36M1189 1076q-24 -25 -47 -48M1560 1069q-1 -22 -7 -46M1536 1034q-36 -16 -58 -47" stroke="#f4f48c" stroke-width="1.4"/><path d="M550 1036q-28 -14 -76 -20M1002 1081q-6 -37 6 -66M1599 1020q3 -23 -1 -33M808 1039q-22 -18 -46 -31M1767 1071q-17 -42 -20 -92M754 1024q-17 -12 -44 -12M448 1031q45 -1 97 -16M827 1081q44 -29 93 -66M1336 1052q7 -24 -7 -45M1692 1070q-17 -37 -54 -64M23 957q-33 -29 -56 -50M162 1052q1 -22 10 -31M1878 1036q0 -47 22 -110M1900 944q37 -6 76 -9M1604 1088q38 -32 57 -62M1758 999q3 0 -10 -7M1063 1076q6 -22 17 -35M1478 1071q-13 -8 -46 -27M1032 1068q-6 -26 -22 -40M1052 1053q-2 -13 15 -33M1561 1081q45 -40 93 -70M329 1024q9 0 35 0M1363 1088q-23 -37 -37 -68M1608 1004q8 -9 26 -24M1625 1005q-18 -9 -21 -19M793 1028q-22 -11 -56 -14M715 1085q-10 -5 -14 -25M297 1027q25 -1 72 -13M1566 1053q-19 -19 -48 -33M291 1067q7 -19 -1 -42M88 959q-13 -13 -19 -37M628 1086q1 -18 -6 -51M68 979q-13 -16 -32 -36M602 1078q-7 -19 -2 -42M1211 1039q19 -21 30 -29M805 1069q-3 -11 -3 -32" stroke="#f4f48c" stroke-width="1"/><path d="M2 970q33 0 65 -15M1725 996q-7 2 -6 -10M1604 1016q19 -17 47 -21M1774 1022q8 -27 38 -40M609 1050q-1 -16 19 -38M1051 1084q-49 -10 -91 -33M734 1072q24 8 38 1M1143 1066q58 -23 106 -40M397 1052q0 -16 21 -41M202 1057q-36 -14 -87 -32M10 966q-5 -13 12 -22M704 1054q31 -21 65 -36M1820 1029q0 -12 2 -38M1480 1082q55 -36 91 -63M373 1087q57 -19 95 -48M1019 1040q-12 -4 -24 -9M219 1060q9 -23 38 -42M597 1038q16 -1 36 -14M204 1025q-17 2 -43 -9M1097 1080q23 -20 49 -37M1207 1028q-4 0 -29 -8M1937 995q43 -12 74 -32M462 1027q6 4 18 -6M769 1028q-1 -4 12 -16M659 1025q6 -8 2 -2M1158 1056q11 -4 28 -2M1071 1055q34 -24 47 -38M84 956q-9 -11 -36 -38M187 1046q-10 -19 -25 -32M294 1084q9 -34 36 -79M305 1058q7 -18 15 -37M774 1064q22 -33 26 -58M1827 1055q37 -21 81 -48M1866 1052q46 -23 73 -41M1515 1064q17 -16 37 -41M43 985q16 -11 13 -25M1578 1061q43 23 105 34M1529 1013q-9 -15 -17 -21M441 1076q-41 -26 -84 -38M640 1080q41 -32 68 -73M1371 1059q-10 -23 -14 -51M984 1054q-9 0 -31 -11M710 1074q-2 -39 11 -70M1145 1091q-15 -11 -46 -33M777 1065q8 -20 6 -26M1555 1005q5 -20 16 -27M1112 1050q11 -10 30 -16M590 1039q0 -10 -16 -25M840 1072q14 -35 8 -60M1850 1041q15 -12 14 -27M295 1039q-9 -22 -2 -32M1594 1016q2 -12 -14 -33M1205 1091q19 -36 41 -59M784 1070q-17 -33 -15 -61M1921 964q1 -17 -7 -33M161 1074q-5 -38 -5 -62M842 1049q30 -20 47 -42M947 1081q-23 -31 -68 -75M837 1024q-28 -1 -36 -11M1941 1059q10 -11 37 -9M36 970q1 -19 -5 -27M1274 1088q-34 -18 -64 -25M433 1034q24 -12 36 -22M816 1084q-22 -32 -46 -63M207 1053q3 -20 0 -37M308 1065q6 -18 12 -46M777 1092q0 -13 12 -36M745 1089q-3 -38 14 -79M1378 1083q4 -25 28 -44M502 1075q14 -27 34 -58M1657 1027q3 -20 -7 -41M1522 1031q-21 -18 -39 -38M916 1068q1 -21 11 -51M1885 1023q27 -12 50 -13M1093 1055q-3 -18 11 -38M300 1066q1 -23 -2 -42M870 1024q-7 2 2 -1M243 1044q3 -16 -10 -37M1881 1056q-3 -11 -19 -36M850 1093q1 -42 -11 -85M595 1090q12 -40 33 -76M1191 1028q-39 1 -95 -6M392 1093q-3 -42 -6 -86M1640 1036q6 -29 -6 -50M1066 1059q60 -19 113 -31M1778 1082q55 -35 95 -61M1427 1054q39 -8 90 -23M720 1058q8 -12 22 -15M1381 1034q11 -6 37 -16M420 1038q-17 -15 -14 -15M1466 1087q44 -18 104 -29M1787 1024q9 -22 1 -34M1559 1072q50 -32 87 -73M453 1090q1 -15 0 -25M1583 1032q32 -16 40 -19M287 1056q10 -15 25 -42M32 1076q35 -5 72 -20M1740 1070q6 -47 22 -90M957 1044q-16 -13 -17 -34M783 1045q23 -12 44 -30M280 1034q6 -9 11 -19M728 1031q12 -5 48 -23M1499 1051q-11 -28 -33 -40M1686 1042q-12 -18 -34 -49" stroke="#b0d826" stroke-width="1.4"/><path d="M152 1033q35 -5 51 -18M603 1088q43 -26 93 -49M1449 1025q-5 -11 -23 -8M876 1039q-4 -8 -17 -19M310 1055q20 -4 64 -22M859 1084q-23 -26 -42 -43M1439 1088q29 -26 77 -65M1870 997q-35 -36 -55 -59M741 1042q7 -8 -3 -25M23 969q20 -22 38 -47M379 1071q30 -3 43 -10M164 1027q-14 -3 -21 -14M171 1025q-26 -8 -67 -7M279 1094q12 -36 42 -67M1213 1067q13 -19 23 -25M1587 1089q14 -22 29 -32M785 1062q10 -29 11 -52M1421 1026q2 0 23 -9M937 1076q8 -18 30 -44M1166 1033q31 -11 82 -13M375 1089q9 -8 34 -2M1299 1049q-11 -13 -22 -34M1090 1036q-5 -21 -22 -31M40 925q29 -13 74 -20M1317 1046q28 -19 52 -31M1244 1080q26 -35 58 -76M529 1058q37 -10 73 -24M1283 1030q40 -9 82 -20M1441 1040q20 -4 27 -19M273 1080q22 -21 30 -48M1852 954q2 -16 10 -19M924 1063q-21 -28 -25 -54M1025 1060q27 -2 52 -8M1677 1047q3 -1 25 -10M1720 1087q-11 -19 -38 -44M798 1033q-17 -15 -28 -25M568 1037q14 -12 26 -14M273 1085q0 -42 9 -81M834 1039q9 -10 29 -34M1301 1076q9 -14 14 -28M1200 1053q5 -17 -1 -37M979 1058q54 -23 84 -49M1843 1007q13 -26 42 -56M797 1025q38 -13 92 -20M751 1094q9 -20 40 -39M768 1040q-12 -18 -31 -29M698 1032q-12 -8 -43 -27M250 1064q-7 -4 -30 -22M1802 1032q-18 -22 -55 -45M1195 1053q-25 -16 -41 -36M8 927q12 -1 33 -4M1287 1031q43 1 72 -10M1357 1088q-27 -14 -62 -13M683 1029q7 -12 -1 -13M120 1036q25 -9 51 -21M1441 1087q35 -38 65 -72M1835 968q31 -19 70 -35M1554 1023q16 -6 43 -21M1124 1058q-37 -23 -95 -45M1605 1065q48 -15 97 -19M1713 1034q50 -29 97 -55M1233 1068q13 -15 38 -42M443 1043q34 -21 50 -28M1279 1089q-19 -46 -29 -83M977 1024q-11 -10 -43 -15M1050 1076q29 -3 53 -6M722 1077q-12 -30 -14 -66M1598 1033q-14 -21 -37 -44M1331 1059q42 -20 88 -46M385 1048q22 -18 68 -41M1679 1007q34 -19 69 -31M1413 1077q28 -39 44 -71M1107 1085q8 -11 -3 -32M1149 1065q-38 -33 -57 -57M1146 1028q-31 -1 -45 -12M1308 1085q56 -15 105 -34M409 1046q-9 -25 1 -37M388 1024q16 1 13 -2M650 1087q11 -22 6 -47M1180 1090q-13 -21 -3 -33M1674 1063q-28 -38 -75 -78M636 1033q-13 0 -26 -11M595 1067q-6 -28 -3 -52M891 1081q13 -27 8 -59M1149 1064q42 -25 98 -56M1472 1046q-15 -21 -48 -37M850 1042q13 -10 7 -26M1246 1085q42 -9 101 -32M240 1078q-29 2 -54 -6M1700 1050q8 -36 4 -72" stroke="#e8ea34" stroke-width="1.4"/><path d="M1874 944q-29 -7 -39 -17M374 1068q0 -24 -18 -52M144 1051q15 -15 35 -36M1459 1025q0 -6 7 -14M1370 1036q-5 -9 -8 -28M1780 1012q12 -22 3 -29M992 1059q-37 -30 -79 -52M589 1074q-31 -22 -55 -51M1215 1043q24 -18 38 -36M939 1058q5 -19 -12 -49M1772 1088q-9 -46 -7 -85M1255 1046q-8 -25 0 -38M802 1084q37 -23 51 -49M844 1082q57 10 92 10M988 1041q-21 -8 -33 -16M1649 1083q4 -23 -1 -62M1442 1051q-35 -23 -74 -38M1877 997q0 -13 -3 -25M1441 1074q26 -10 42 -10M1537 1031q6 -22 -7 -49M342 1077q-2 -41 -2 -70M154 1075q42 -12 90 -18M387 1085q-7 -31 -12 -52M907 1043q-2 -17 -9 -19M1389 1073q-2 -40 -21 -66M547 1056q-43 -19 -93 -47M730 1061q-7 -17 4 -48M1920 950q5 -15 30 -15M789 1047q-29 -17 -58 -38M1118 1080q21 -30 62 -71M361 1032q-3 0 -7 -13M1273 1063q25 -2 56 -10M1425 1089q-3 -23 1 -47M832 1032q-12 -7 -44 -12M557 1054q-28 -25 -52 -45M1468 1080q46 -31 78 -59M1922 1000q-2 -16 -8 -24M1638 999q42 -8 102 -21M391 1092q45 -30 86 -54M868 1050q14 -21 37 -30M1325 1028q28 -13 73 -15M425 1074q51 -27 89 -69M159 1076q-9 -36 1 -66M1660 1018q-5 -7 -14 -29M406 1049q-11 -14 -39 -35M1033 1048q20 7 56 2M1195 1081q45 -26 67 -64M1298 1090q-5 -40 2 -75M1237 1078q-35 -24 -53 -60M1600 1055q60 -14 96 -17M1591 1092q29 -13 71 -30M1048 1061q-25 -30 -43 -50M436 1069q14 -14 15 -38M681 1040q28 -13 63 -29M1658 1025q21 -21 22 -33M153 1075q2 -32 8 -67M218 1031q-24 -6 -56 -11M1140 1073q19 -28 22 -43M1586 999q-21 -12 -66 -17M477 1047q7 -10 24 -16M1708 1003q40 -9 98 -21M270 1082q29 -16 57 -29M309 1063q47 -16 75 -45M1066 1082q-25 -24 -65 -40M676 1053q9 -11 4 -35M621 1093q-10 -36 1 -80M1621 1031q-16 -25 -28 -47M17 1038q-24 -14 -33 -18M1490 1082q-17 -10 -25 -17M60 1030q4 -46 4 -105M1783 1033q0 -22 3 -41M857 1084q27 -37 48 -74M172 1040q28 -20 44 -29M1942 967q20 -21 63 -35M1750 1055q-37 -14 -58 -38M1717 1040q-10 -32 -11 -60M881 1051q19 -10 26 -31M911 1065q-7 -21 -1 -28M310 1057q-14 -14 -12 -36M206 1024q51 -6 81 -16M1727 1050q8 -27 12 -50M1573 1021q-19 -12 -15 -27M901 1048q21 -16 31 -37M673 1059q3 -19 16 -37M298 1049q-14 -18 -44 -38M1733 1072q-5 -42 -34 -84M1387 1036q21 0 23 -11M1639 1071q23 -5 31 -18M145 1036q-7 -5 -7 -25M449 1082q23 -29 31 -67M1745 1015q19 -19 40 -23M988 1074q15 -25 47 -37M11 1069q-36 -3 -73 -12M869 1042q-24 -8 -64 -27M53 1079q36 -32 83 -71M1716 1028q-2 -16 4 -36M1706 1058q-11 -47 -6 -81M282 1088q55 -11 107 -35M855 1073q10 -16 16 -44M1609 1019q17 -20 21 -30M653 1029q-28 -3 -35 -5M669 1041q28 -10 78 -32M734 1061q-31 -21 -71 -50M663 1027q13 -8 44 -11M1642 1069q-2 -50 8 -89M230 1092q51 -24 103 -45M1826 1052q-21 -11 -39 -14M517 1059q36 -7 73 -20" stroke="#c6de2a" stroke-width="1"/><path d="M1427 1087q18 -39 19 -76M135 1077q-11 -9 -9 -26M197 1036q19 -18 25 -30M1325 1049q41 -15 88 -40M826 1050q14 -22 28 -41M372 1039q6 -17 10 -31M1427 1094q15 -17 42 -46M1592 1080q28 -14 77 -24M1893 1011q-7 -34 0 -82M1523 1082q17 -36 41 -67M1704 1068q32 -32 60 -50M308 1094q12 -18 9 -43M918 1048q-1 -20 -18 -29M1118 1053q-6 -18 -6 -40M547 1070q30 -20 54 -40M1345 1050q20 -11 39 -27M1127 1059q-54 -19 -93 -32M1212 1030q46 -8 70 -7M121 1033q47 -9 95 -15M924 1090q29 -31 61 -74M941 1057q53 -22 91 -50M1314 1054q7 -22 13 -34M1334 1028q6 -18 36 -21M389 1031q20 -11 62 -13M1291 1061q11 -30 15 -48M22 953q-42 -7 -72 -18M857 1091q-52 -18 -103 -29M558 1085q-3 -31 3 -68M1489 1069q-3 -22 -24 -29M1776 1031q-5 -17 0 -48M1808 1087q-6 -27 -9 -40M745 1059q18 -4 14 -23M1742 1087q5 -14 -11 -29M1933 973q-31 -17 -40 -43M891 1054q0 -17 12 -26M384 1083q25 -26 59 -64M493 1060q8 -7 32 -17M294 1045q-12 -18 -43 -25M1898 1034q13 -45 4 -91M974 1070q43 -29 76 -51M1493 1087q-60 -18 -106 -47M782 1083q17 -24 58 -50M1286 1059q-22 -15 -60 -44M711 1028q-10 -9 -8 -7M1628 1069q6 -27 27 -38M874 1083q21 -7 57 -28M1481 1091q0 -17 -10 -31M225 1030q37 -4 88 -14M1780 1089q-45 -32 -96 -60M809 1036q-44 -21 -66 -27M1033 1056q12 -18 26 -49M1252 1087q19 -13 42 -32M1767 1093q-22 -54 -32 -101M1361 1064q19 -24 33 -35M1855 1036q-56 0 -97 10M1738 1032q-25 10 -36 19M1535 1033q-16 -28 -21 -47M1344 1051q-3 -25 -28 -43M859 1039q-24 -8 -34 -19M1551 1043q41 -11 89 -17M359 1027q20 -2 43 -19M243 1030q55 0 113 5M1617 1037q4 -8 -11 -29M1779 1040q3 -27 4 -54M727 1085q-6 -35 -9 -66M940 1045q-35 -20 -80 -25M1410 1074q46 -23 86 -44M1048 1052q39 -16 74 -38M989 1083q34 -27 85 -41M6 1018q11 -20 33 -47M912 1045q19 -23 37 -36M1118 1074q-4 -29 -12 -68M706 1089q-23 -5 -35 -22M1642 1013q44 -12 94 -32M1453 1030q-16 -6 -21 -10M1818 1091q40 -38 88 -77M797 1042q-27 -3 -32 -20M1043 1061q4 -15 5 -32M778 1085q36 -34 52 -64M75 1083q10 -18 28 -29M1887 1061q-10 -9 -17 -22M464 1083q-11 -14 -44 -28M836 1039q9 -15 37 -27M610 1056q29 -27 41 -39M1411 1046q2 -25 -2 -41M989 1074q0 -16 13 -29M1067 1053q7 -19 15 -45M1090 1044q-11 -12 -6 -30M567 1054q8 -16 0 -36M1136 1093q27 -25 77 -48M1040 1032q-5 -7 -3 -23M1371 1068q37 -30 69 -54" stroke="#6cb81a" stroke-width="1"/><path d="M953 1067q-60 -14 -104 -41M1755 1000q-12 -8 -3 -16M1202 1031q13 3 39 -9M511 1057q22 -22 64 -51M1381 1042q-18 -14 -61 -35M1743 1015q-30 -14 -66 -19M956 1026q-35 -9 -48 -18M1385 1047q23 -10 22 -26M176 1033q25 -11 49 -19M485 1067q20 -24 37 -46M26 1062q45 -3 105 -22M861 1025q-1 -9 -4 -10M1264 1034q-29 -4 -78 -17M800 1090q-12 -33 -15 -69M1811 1034q30 -9 55 -11M158 1060q1 -28 12 -49M1820 1083q26 -26 70 -60M1105 1059q29 -23 39 -40M851 1045q-19 -17 -28 -23M1669 1069q14 -5 50 -16M1245 1060q-16 -19 -13 -27M1500 1055q-23 -28 -27 -60M1329 1050q5 -23 18 -36M1593 1094q26 -33 54 -65M1337 1050q33 -20 86 -30M121 1034q12 0 42 -9M1478 1040q51 -20 83 -27M33 1031q11 -47 15 -92M1659 1023q-12 -12 -1 -32M1702 1012q-1 -12 -2 -36M951 1033q26 -7 69 -25M473 1048q7 -25 28 -36M1740 1061q49 -17 95 -44M133 1041q67 8 115 20M615 1030q-36 -5 -54 -13M172 1092q16 -11 36 -8M16 1037q-26 -48 -42 -97M732 1091q12 -38 6 -76M1390 1082q-26 -29 -53 -62M547 1080q-23 -39 -50 -76M1523 1084q-4 -19 -12 -26M1309 1094q-3 -12 -23 -23M1733 1094q4 -39 0 -87M1624 1071q13 -19 10 -28M63 1079q28 -18 39 -42M1806 1060q4 -12 28 -22M561 1038q19 -15 21 -28M528 1072q30 -9 44 -9M609 1072q0 -12 13 -31M1046 1053q-10 -15 -2 -43M174 1091q8 -27 1 -61M1447 1093q-14 -4 -27 -17M1229 1025q23 -2 47 -6M897 1034q-3 -14 3 -15M1742 1022q8 -12 22 -30" stroke="#c6de2a" stroke-width="2"/><path d="M1912 1010q-16 -6 -26 -18M532 1052q36 -5 52 -16M374 1089q6 -25 2 -39M63 971q17 -21 40 -56M862 1039q-29 -15 -59 -22M1219 1056q5 -22 13 -30M231 1060q31 -22 62 -39M205 1039q3 -15 -8 -30M837 1091q-6 -22 5 -51M513 1036q-18 -8 -31 -15M646 1082q11 -16 1 -29M1494 1048q46 -21 80 -39M1761 1092q36 -23 82 -56M319 1051q-17 -19 -42 -43M1602 1004q-6 -13 -16 -11M1377 1052q50 -16 78 -43M218 1040q-34 -8 -53 -17M1916 1016q29 -22 71 -54M371 1028q36 -4 49 -20M1453 1045q30 -11 71 -34M1100 1039q60 -10 112 -14M1775 1045q-37 -30 -98 -55M294 1058q45 -14 93 -16" stroke="#f4f48c" stroke-width="2"/><path d="M1085 1069q14 -28 46 -42M1723 1002q12 -10 4 -21M170 1069q-4 -27 6 -49M832 1067q-9 -31 -17 -61M953 1094q37 -24 74 -33M24 1020q30 -47 76 -87M507 1058q23 -13 24 -20M787 1074q37 -8 73 -9M76 1037q47 -29 87 -52M261 1055q2 -22 10 -47M139 1062q21 -23 27 -53M1743 1092q16 -49 10 -89M1384 1041q-29 -11 -68 -29M138 1038q11 -12 12 -21M59 1067q-12 -24 -45 -40M259 1063q48 0 88 -2M1685 1014q27 -17 63 -24M751 1076q3 -17 19 -28M591 1075q27 -29 33 -54M1029 1083q21 -31 26 -70M1005 1024q18 -16 39 -19M1629 1092q37 -18 55 -38M1833 978q33 -29 43 -55M279 1049q8 -19 8 -42M1292 1063q-24 -33 -53 -54M639 1041q20 -21 26 -31M1700 1006q1 -17 -20 -28M372 1033q17 -6 46 -21M56 1092q18 -34 25 -82M1458 1075q-1 -14 -4 -28M731 1070q-3 -13 -17 -20M116 1086q0 -33 9 -54" stroke="#f2f058" stroke-width="3.4"/><path d="M1214 1055q12 -24 26 -38M374 1054q17 -17 14 -47M645 1082q45 -38 82 -77M391 1050q6 -19 10 -27M1114 1046q-22 -13 -33 -32M1403 1029q43 0 92 -13M79 946q29 -9 56 -22M-5 978q2 -33 -12 -52M1947 968q-4 -10 8 -32M1851 1009q-20 -40 -50 -81M1814 1079q34 -35 45 -66M678 1085q45 -28 101 -42M519 1033q-49 -11 -80 -22M102 1013q17 -3 19 -21M297 1060q-19 -30 -54 -56M1716 1053q26 -35 64 -57M449 1068q27 -14 75 -14M1791 1034q8 -20 0 -45M1458 1039q33 -11 52 -31M393 1038q12 -17 8 -32M55 967q11 -17 19 -47M1260 1065q-10 -30 0 -61M919 1075q12 -10 37 -34M1562 1068q13 -36 13 -62M1075 1040q3 -7 0 -18M948 1085q13 -9 38 -17M1594 1026q-2 -14 -14 -43M276 1090q-18 -18 -26 -22M242 1050q45 -17 95 -36M541 1061q-25 -30 -28 -56M1618 1008q13 -12 30 -29M1289 1077q-25 -8 -65 -25M615 1067q1 -13 -8 -40M1482 1085q0 -46 -13 -78M748 1078q24 -29 58 -72M1333 1072q23 -15 56 -27M684 1090q19 -17 53 -19M412 1052q30 -11 44 -25M542 1089q0 -45 -7 -77M1746 1082q10 -25 42 -40M944 1094q-10 -52 -7 -89M1739 1004q35 -11 74 -13M116 1089q10 -23 40 -52M584 1070q16 -33 29 -62M1177 1035q-40 -19 -62 -30M272 1077q-25 -39 -43 -67M1672 1068q-8 -43 2 -78M1497 1061q19 -27 25 -55M1102 1033q-41 -4 -72 -20M1352 1069q30 -12 67 -27M1816 1047q6 -31 3 -64M920 1027q11 -13 1 -15M1194 1030q27 -3 66 -13M533 1025q51 -14 79 -19M51 982q0 -38 -11 -76M335 1067q27 -14 42 -34M1821 1051q-30 -18 -69 -42M161 1045q2 -22 19 -32M1090 1040q-11 -24 -14 -32M111 1066q40 -16 63 -27M538 1087q-42 -13 -62 -21M1461 1091q41 -32 91 -73M676 1090q31 -38 64 -83M1710 1026q14 -16 32 -37M620 1048q-3 -17 -18 -24M116 1065q35 -17 93 -29M410 1047q-2 -13 4 -30M658 1078q15 -35 50 -67M259 1033q13 0 16 -9M624 1047q-5 -21 -26 -29M1434 1033q40 1 68 8M1290 1078q-28 8 -49 0" stroke="#c6de2a" stroke-width="3.4"/><path d="M-8 1004q8 -45 6 -92M5 958q19 -16 15 -44M114 1083q44 -31 84 -71M119 1045q8 -25 14 -35M793 1036q29 0 40 -9M1772 1073q15 -11 15 -33M574 1052q1 -20 -19 -31M11 1076q-37 -28 -72 -67M1762 1001q3 -14 -5 -16M373 1062q-48 -20 -79 -43M1609 1009q31 -18 51 -29M1152 1032q27 -5 55 -24M563 1072q51 -12 86 -12M1935 1000q14 -19 25 -47M106 932q3 -10 25 -25M1408 1031q33 -7 85 -18M410 1091q40 -20 99 -39M551 1090q0 -12 14 -21M180 1036q19 -4 53 -4M1707 1022q-19 -19 -24 -31M-8 1033q-12 -8 -34 -19M1006 1065q6 -5 30 -25M290 1075q3 -17 0 -50M186 1090q31 -32 65 -79M1332 1090q22 -31 30 -58M292 1034q12 -7 2 -19M1002 1077q-7 -35 -34 -58M617 1039q34 -8 67 -30M55 1005q2 -19 9 -48M1709 1073q-14 -13 -5 -27M793 1034q-10 -12 -16 -22M1608 1057q25 -25 68 -47M537 1035q45 -7 86 -26M1311 1055q-37 -8 -57 -18M1636 1018q-9 -6 -35 -13M1607 1045q25 -36 47 -62M11 1035q3 -45 14 -92M594 1087q-18 -25 -19 -42M1808 1094q39 -34 70 -84M937 1073q-63 -35 -104 -57M552 1026q35 -11 79 -17M1405 1036q-19 -19 -21 -30M607 1053q3 -18 -5 -42M1552 1016q61 -15 100 -22M-4 1002q9 -51 4 -90M1602 1033q-44 -21 -87 -55M185 1086q12 -20 13 -37M1744 1056q-41 -28 -90 -73M443 1086q-14 -31 -24 -74M336 1042q18 -13 16 -21M1538 1071q-27 -40 -39 -94M394 1031q30 -14 66 -22M1699 1080q7 -9 23 -13" stroke="#b0d826" stroke-width="2"/><path d="M1185 1077q2 -35 7 -61M1490 1055q51 0 94 -13M919 1057q20 -25 21 -37M72 1042q24 -26 30 -68M398 1029q-13 -7 -16 -24M1691 1066q-10 -14 -19 -44M1180 1085q47 -24 103 -52M488 1065q17 -32 49 -56M905 1076q-24 7 -45 18M1514 1002q1 0 13 -7M1640 1049q3 -26 -13 -41M1233 1080q15 -6 51 -21M1711 1031q7 -13 9 -31M382 1024q27 -16 32 -18M615 1052q0 -22 -12 -28M1142 1028q22 -6 45 -23M194 1034q-9 -14 -9 -13M786 1093q32 -23 54 -52M961 1091q29 -14 48 -42M231 1024q19 -7 36 -3M1075 1035q-21 -4 -23 -13M1692 1039q1 -32 4 -57M640 1062q32 -14 51 -40M1525 1045q16 -16 45 -35M452 1032q0 -3 -8 -19M1093 1043q0 -18 -4 -37M1508 1006q46 -4 96 -25M1560 1026q1 -14 -13 -32M1866 976q30 -17 42 -40M1149 1093q-31 -25 -69 -57M406 1049q-7 -4 -21 -24M437 1086q-2 -36 1 -80M3 1085q-5 -49 1 -89M589 1035q29 -16 72 -29M1387 1068q8 -35 16 -56M1073 1085q15 -19 28 -50M296 1035q21 -15 36 -27M426 1055q18 -16 49 -32M1247 1055q-41 -16 -72 -30M1524 1070q25 -1 26 -6M1417 1048q-23 -9 -34 -32M1094 1072q-20 -11 -28 -11M1656 1004q-10 -7 -2 -28M1581 1047q16 -42 48 -69M1775 1048q20 -24 26 -64M1835 1043q18 -48 51 -104M566 1037q28 -4 68 -21M1593 1071q-15 -45 -48 -89M710 1091q20 -21 40 -55M197 1051q50 -19 79 -44M1430 1068q4 -26 -14 -51M1265 1054q43 -18 90 -47M-20 1022q-15 -13 -45 -10M1733 996q7 -12 0 -11M1156 1052q-22 -9 -28 -35M762 1066q0 -28 9 -49M1826 1038q-15 -33 -18 -59M1663 1091q14 -34 10 -81M201 1047q-3 -15 -17 -18M1606 1009q-22 -18 -29 -22M533 1049q22 -12 67 -30M374 1083q9 -20 3 -49M967 1029q21 -6 55 -16M1282 1090q-24 -32 -32 -59M1249 1051q44 -18 99 -33M1651 1028q29 -14 47 -42M531 1048q6 -12 34 -27M1515 1081q10 -40 5 -88M222 1066q28 -30 73 -57M875 1079q-48 -38 -95 -67M-24 1000q41 -8 66 -30M1842 1050q65 -25 109 -34M1884 1052q-7 -18 -26 -40M1417 1049q-9 -12 -7 -40M-1 930q-23 -7 -36 -6M487 1083q-30 -29 -66 -43M927 1084q16 -44 34 -80M1376 1089q-4 -9 0 -25M429 1068q-27 -20 -43 -27M1388 1075q-17 -8 -33 -32M1742 1047q14 -8 13 -24M-5 1028q6 -8 34 -18M334 1081q5 -28 -1 -61M642 1044q14 -12 14 -32M1624 1090q17 -12 51 -32M1525 1050q-6 -32 -4 -59M131 1059q-1 -13 -2 -31M306 1030q22 -6 24 -13M243 1044q-2 -12 -14 -39M485 1032q13 -8 38 -11M711 1047q44 -10 71 -15M240 1074q35 -31 58 -66M123 1062q33 -25 59 -41M1667 1007q6 -20 0 -26M333 1034q-8 0 -25 -15" stroke="#90cc20" stroke-width="1"/><path d="M514 1089q2 -16 -3 -45M1254 1090q47 -44 71 -75M961 1040q7 -16 12 -33M1050 1091q-25 -39 -68 -82M944 1087q35 -17 70 -30M138 1076q0 -29 -23 -57M1824 1062q40 -41 76 -81M1486 1058q-1 -14 16 -37M1038 1070q15 -25 49 -56M309 1073q31 -35 53 -55M1256 1025q17 -6 11 -15M271 1042q-31 -5 -65 -21M2 938q48 -11 87 -23M1016 1041q-1 -15 -4 -23M1263 1035q4 -7 26 -15M1652 1016q-7 -18 -23 -28M1107 1070q-38 -27 -99 -51M387 1037q9 -10 12 -15M1055 1057q21 -24 59 -36M320 1033q14 -13 28 -17M1945 1083q-11 -21 -10 -49M1713 997q-12 -9 -18 -20M1198 1046q-14 -13 -26 -37M527 1082q35 -28 67 -73M1321 1027q18 -6 47 -21M1103 1079q10 -39 26 -68M455 1030q0 -18 0 -22M126 1037q24 -12 32 -20M1579 1043q-34 -8 -67 -32M1059 1091q23 -17 22 -26M1491 1037q-25 -9 -33 -32M1624 1063q46 -42 84 -74M1728 1014q-7 -16 -14 -31M1299 1088q-32 -30 -60 -52M105 1065q-23 -22 -33 -51M1833 1007q53 -15 100 -38M1417 1029q36 -4 94 -2M853 1032q18 2 60 -1M1064 1028q23 -1 39 -10M1335 1087q45 -11 105 -16M695 1056q-9 -31 -13 -47M1856 981q0 -19 -16 -55M411 1083q-37 -20 -97 -45M1206 1075q-54 -23 -106 -42M418 1031q-10 -3 -35 -17M585 1038q18 -10 20 -33M1339 1062q-20 -26 -57 -41M1891 951q41 -7 71 -20M658 1086q55 -28 96 -45M156 1074q-21 -23 -43 -34M1123 1056q-36 -17 -50 -50M577 1032q41 -11 101 -25M1124 1051q16 -12 33 -30M306 1072q-1 -22 -23 -56M6 983q-5 -37 10 -65M143 1054q-14 -14 -21 -41M1588 1043q66 -21 111 -32M157 1056q-31 -27 -60 -45M0 1042q-47 -43 -89 -75M1040 1050q2 -20 -17 -32M1605 1056q16 -11 49 -26M1663 1023q10 -2 29 -8M1822 996q27 2 53 -10M281 1055q18 -17 12 -50M898 1078q0 -27 12 -58M713 1063q-32 -7 -73 -28" stroke="#4ca414" stroke-width="1.4"/><path d="M900 1094q-42 -29 -89 -65M154 1035q34 -14 87 -26M863 1050q9 -17 36 -36M1710 1033q50 -29 102 -43M404 1044q-16 -12 -13 -39M1207 1042q28 -16 63 -30M642 1074q0 -25 8 -54M1630 1008q49 -9 102 -28M1311 1086q26 -42 58 -73M1076 1059q34 -19 80 -41M1602 1008q13 -5 50 -18M266 1029q-30 -13 -61 -24M856 1058q17 -24 14 -44M1764 1078q6 -24 11 -40M990 1043q7 -10 0 -21M159 1092q11 -16 26 -41M1518 1000q0 -8 15 -23M164 1062q58 -28 93 -46M1557 997q-4 -12 3 -16M442 1071q-7 -21 -15 -53M353 1050q13 -27 30 -41M588 1073q-3 -31 -12 -58M642 1073q-50 -25 -95 -45M1815 1006q18 -15 37 -16M1628 1007q-25 -1 -53 5M288 1060q-43 -27 -84 -55M48 1025q-1 -26 16 -58M670 1069q6 -23 0 -31M1554 1088q61 -1 105 -13M359 1066q-7 -11 -34 -18M1653 1050q-4 -6 -20 -16M1934 1074q-49 -17 -104 -32M651 1083q4 -11 9 -28M586 1044q0 -7 -18 -26M597 1027q-15 -11 -53 -19M1148 1047q-24 -28 -44 -40M930 1083q39 -26 62 -64M763 1026q-5 -9 -26 -21M177 1071q-4 -16 -5 -39M1145 1052q3 -8 24 -10M42 1040q11 -28 14 -48M730 1076q-2 -17 -5 -25M993 1029q-1 0 -9 -11M536 1084q-53 -34 -86 -60M1823 1000q15 -12 39 -20M1641 1007q49 -3 88 -21M1833 997q12 -27 19 -62M724 1094q24 -9 59 -29M1698 1065q58 -13 101 -19M102 995q-15 -41 -23 -73M699 1067q-2 -29 0 -49M379 1088q37 -4 66 -23M644 1039q-6 -8 -2 -17M1370 1044q32 -9 82 -28M1777 1018q-24 -13 -28 -29M873 1037q-64 -12 -113 -32M1768 1076q-11 7 -26 1M1250 1053q-16 -17 -14 -48M1358 1054q27 -21 52 -42M983 1024q6 0 10 -13M1143 1059q25 -17 44 -46M430 1031q27 -9 53 -13M733 1029q44 -8 99 -12M1873 946q0 -14 -11 -16M1700 1011q-22 -15 -49 -29M1588 1027q27 -21 57 -32M127 1049q6 -8 12 -30M186 1078q6 -32 30 -53M721 1051q-15 -12 -14 -34M654 1089q11 -27 34 -56M1230 1091q23 -11 35 -11M1364 1070q-15 -27 -33 -54M1510 1033q5 -24 -4 -50M-4 933q38 -13 52 -12M1395 1068q41 -16 71 -37M1733 1087q0 -32 21 -50M1588 1052q0 -17 5 -40M258 1058q7 -20 24 -27M1593 1074q-28 -34 -72 -57M181 1058q7 -2 18 -20M1070 1052q-29 -13 -48 -22M1117 1063q-23 -7 -47 -25M842 1072q-8 -34 -26 -54M1547 1074q12 -25 28 -48M91 959q-17 -25 -33 -41M564 1076q17 -9 42 -19M1607 1064q-22 -36 -33 -58M663 1053q20 -24 26 -48M258 1086q-52 -15 -84 -20M1033 1043q23 -9 22 -24" stroke="#6cb81a" stroke-width="1.4"/><path d="M1469 1055q-12 -22 -15 -40M529 1085q12 -34 7 -66M1665 1089q-10 -38 0 -76M1578 1081q-19 -1 -28 -16M620 1030q15 -13 42 -25M1466 1037q-4 -9 -16 -25M1232 1063q0 -19 -16 -50M377 1046q21 -14 45 -38M1108 1092q0 -47 12 -86M930 1059q45 -14 85 -35M1377 1060q-11 -16 -29 -40M652 1072q12 -17 31 -44M1738 1019q5 -11 13 -34M1771 1006q22 -4 49 -12M174 1038q11 -11 38 -30M1283 1033q31 -13 41 -28M1156 1047q21 -22 24 -43M1314 1032q-6 -5 -32 -22M454 1079q26 -27 66 -67" stroke="#2f8010" stroke-width="1.4"/><path d="M1641 1085q-7 -22 -3 -44M1558 1043q0 -18 0 -27M1356 1094q0 -15 14 -27M263 1051q-4 -14 11 -35M351 1054q21 -13 22 -43M1333 1080q0 -32 0 -74M1889 1017q40 -15 84 -18M874 1074q14 -27 29 -57M1197 1076q45 -8 108 -11M916 1073q-8 -24 4 -64M1667 1093q39 -28 56 -67M806 1075q-20 -7 -41 -18M629 1048q-15 -12 -9 -33M790 1076q-20 -20 -28 -30M1557 1072q-31 -17 -51 -26M1428 1084q34 -36 74 -78M595 1064q21 0 45 -8M184 1036q40 -13 98 -24M665 1068q-6 -35 -31 -54M900 1082q-4 -30 3 -68M1478 1055q28 -23 38 -39M1194 1074q8 -26 21 -47M1722 1046q12 -5 20 -17M1164 1088q0 -29 6 -43M925 1073q-2 -37 -11 -65M1244 1047q9 -11 30 -15M901 1076q14 -26 15 -50M1620 1030q22 -15 26 -34M1660 1004q0 -2 15 -11M961 1077q-26 -25 -52 -42M1208 1026q-33 -10 -46 -14M1850 990q-14 -19 -17 -43" stroke="#4ca414" stroke-width="2"/><path d="M783 1032q20 -14 18 -17M1044 1080q12 -14 36 -31M1698 1011q-13 -3 -35 -21M105 1051q9 -18 26 -40M609 1091q-35 -8 -75 -30M1357 1051q50 -24 92 -35M656 1031q40 -18 76 -27M1376 1090q-16 -34 -10 -77M2 995q50 -4 115 -25M697 1070q6 -18 31 -25M91 980q15 -40 49 -68M43 939q18 -23 16 -35M1200 1084q9 -33 14 -58M389 1036q-44 -4 -85 -12M1156 1093q-4 -6 -30 -19M1653 1061q23 -32 49 -73M24 967q2 -15 -7 -29M1524 1060q-41 -12 -78 -35M1177 1064q33 -21 64 -33M255 1045q-18 -10 -57 -28M1640 1029q-6 -19 -34 -49M1643 1076q-12 -36 -9 -87M1682 1029q20 -22 36 -29M346 1032q36 -8 81 -12M1784 1028q64 -13 118 -14M671 1047q30 -13 38 -42M1123 1038q-2 -19 16 -25M398 1084q-13 -20 -39 -33M34 970q45 -12 87 -19M1003 1038q14 -6 37 -23M1325 1051q35 -17 54 -42M187 1094q-9 -20 -8 -49" stroke="#4ca414" stroke-width="3.4"/><path d="M1583 1085q37 -24 61 -33M-9 942q2 -22 11 -33M1840 1016q25 -9 63 -30M1070 1059q-21 -16 -33 -46M1138 1033q-7 -12 -6 -15M-22 1018q-9 -29 -19 -73M1658 1041q27 -24 56 -35M1845 1014q22 -27 66 -67M1326 1028q25 -1 38 -18M1110 1026q31 -18 42 -21M1459 1089q-19 -42 -45 -80M1554 1079q51 -2 80 5M21 988q23 -39 52 -78M1082 1050q-9 -25 0 -35M831 1051q0 -23 19 -42M1466 1047q-21 -7 -48 -10M765 1068q1 -21 -14 -57M1006 1085q3 -33 9 -69M1588 1007q-2 -10 4 -25M1192 1055q2 -14 22 -41M767 1030q-2 -2 -10 -16M1500 1058q22 -18 35 -31M403 1032q-17 -10 -16 -11M415 1060q1 -26 23 -51M601 1057q20 -29 22 -52M1574 1050q17 -23 19 -38M184 1055q-1 -23 -6 -50M1557 1019q16 -5 32 -22M662 1061q-4 -24 -17 -43M1809 1004q14 -6 31 -1M421 1074q18 -10 15 -28M241 1039q22 -5 21 -23M1437 1090q58 1 116 2M391 1060q-12 -19 -11 -33M754 1089q33 -13 47 -39M423 1063q8 -29 29 -45M1309 1026q23 -6 23 -4M1231 1046q22 -16 65 -33M153 1091q4 -36 30 -82M906 1024q-32 4 -58 -2M759 1072q-1 -23 12 -55M1132 1039q-8 -13 -33 -18M-11 983q31 -37 81 -68M1460 1037q-42 -14 -84 -14M1719 1032q-19 -11 -15 -26M365 1093q17 -16 25 -47M832 1026q29 -7 45 -13M794 1078q-2 -32 15 -55M296 1049q-48 -26 -77 -42M585 1044q43 -24 63 -32M419 1088q41 -28 61 -65" stroke="#c6de2a" stroke-width="2.6"/><path d="M353 1040q44 -9 88 -19M1377 1057q9 -17 35 -38M1942 972q21 -14 37 -39M160 1061q10 -3 25 -16M743 1057q8 -26 36 -39M1141 1079q14 -33 11 -71M598 1063q43 -14 80 -20M1378 1075q-22 -34 -46 -55M1691 1074q-15 -4 -24 -14M1812 1067q3 -32 1 -57M1048 1032q-1 -15 1 -23M463 1051q-8 -18 6 -37M181 1051q30 -5 47 -9M1563 1008q-42 -7 -84 -21M242 1034q-7 -19 -5 -25M1335 1041q4 -12 10 -28M930 1074q3 -23 9 -56M320 1054q12 -15 13 -28M587 1072q-12 -25 -25 -55M5 982q27 -24 36 -46M861 1065q-29 -28 -74 -59M1185 1043q10 -23 25 -35M1231 1027q14 -7 21 -22" stroke="#f2f058" stroke-width="2"/><path d="M657 1036q17 -20 16 -28M329 1038q14 -6 9 -28M1821 1052q0 -10 12 -24M-16 1024q-25 -28 -40 -64M829 1055q2 -22 -15 -47M1384 1043q39 -5 55 -21M1060 1063q11 -6 37 -12M305 1078q-13 -21 -17 -35M1922 1004q-10 -10 -13 -36M1307 1042q27 -14 47 -13M1870 1046q9 -55 9 -112M951 1031q16 -15 42 -16M322 1080q13 -16 25 -21M429 1028q25 0 73 -14M1338 1089q-29 -18 -36 -33M1828 1031q-8 -28 -18 -45M612 1058q1 -26 -2 -53M141 1027q23 -3 31 -21M849 1044q-41 -24 -76 -38M80 934q2 -9 8 -13M1372 1083q0 -45 0 -76M1000 1055q-3 -19 6 -51M281 1086q61 -6 100 -23M1824 1044q-16 -26 -15 -64M264 1031q2 -6 23 -23M164 1067q25 -24 64 -60M1282 1082q0 -23 -1 -60M39 973q4 -21 23 -29M484 1038q-31 -15 -81 -28M1163 1084q7 -14 24 -27M197 1069q31 -35 81 -61M1425 1071q-14 -26 -16 -66M830 1084q-1 -26 -2 -53M1377 1043q19 -3 43 4M92 1078q-12 -20 -30 -45M425 1069q0 -7 -3 -28M79 981q16 -33 52 -58M569 1053q-19 -15 -56 -37M227 1037q36 -2 66 -15M1507 1056q-8 -30 -29 -75M921 1062q13 -2 24 -5M523 1024q-2 -12 2 -13M46 1082q-18 -12 -14 -36M1791 1072q-27 -50 -50 -95M321 1063q-47 -12 -76 -30M135 1047q-47 -23 -81 -41M1011 1036q-29 -8 -34 -21M530 1079q28 -17 40 -31M1891 1083q49 -21 101 -30M1572 1012q-24 -8 -70 -21M256 1042q6 -13 34 -29M578 1081q-6 -36 9 -60M593 1042q-9 -5 -18 -22M1823 1073q51 -38 87 -70M389 1091q40 -43 72 -85M1007 1094q-49 -20 -80 -38M15 1009q29 -45 53 -103M1087 1092q-29 -20 -74 -36M1703 1010q6 -13 29 -16M0 1041q-23 -36 -69 -83M1520 1086q47 -10 75 -24M506 1055q-16 -24 -33 -49M191 1047q12 -25 30 -41M1112 1028q-4 -2 -5 -8M1556 1082q-13 -50 -13 -92M901 1083q-9 -40 -39 -76M57 1067q14 -21 51 -38M244 1072q1 -25 20 -51M39 936q12 -6 19 -29M240 1036q60 -15 109 -18M112 1031q32 -20 71 -26M1947 982q6 -26 4 -53M1263 1038q-16 -4 -11 -18M869 1093q14 -13 21 -35M614 1055q33 -23 68 -31M390 1064q-19 -28 -32 -57M703 1059q-43 -16 -64 -42M643 1039q-1 -21 2 -28M260 1062q36 -36 81 -58M1520 1081q-17 -29 -32 -68M667 1045q18 -6 48 -22M1297 1074q57 -26 101 -59M1319 1075q-4 -18 -2 -51M765 1040q13 -18 8 -23M1410 1047q50 -10 110 -24M1130 1072q25 -20 52 -51M297 1075q14 -14 6 -36M1265 1090q38 -23 70 -40M1209 1040q2 -8 4 -29M315 1073q-2 -30 -6 -50M116 1028q9 -4 24 -8M-22 1058q-35 -27 -76 -41M1470 1064q-1 -19 -19 -50M686 1041q6 -7 9 -18M1727 1014q31 -7 84 -28M1748 1086q52 -28 93 -65M526 1078q48 -16 78 -44M1936 1014q15 -37 48 -61M1849 1050q-3 -11 -24 -32M520 1066q39 -9 57 -6M1932 1042q12 -15 39 -42M1473 1028q-48 -5 -74 -23M311 1026q-19 -4 -34 -4M1760 1092q-30 -48 -40 -93" stroke="#dae42e" stroke-width="1"/><path d="M893 1060q-20 -29 -26 -56M378 1068q5 -30 18 -56M1704 1014q-19 -25 -27 -38M407 1085q1 -38 22 -69M334 1069q-26 -32 -55 -62M1242 1029q-12 -11 -25 -10M1744 1078q5 -35 0 -74M1636 1065q0 -23 16 -41M1862 1072q1 -51 -4 -117M1237 1071q41 -29 77 -56M1938 1010q-11 -14 -6 -36M1366 1077q-8 -13 -34 -38M1217 1073q32 -35 52 -58M1633 1010q42 -13 95 -16M796 1040q18 -14 32 -20M881 1070q24 -29 64 -54M601 1064q38 -25 59 -45M329 1037q-19 -19 -25 -32M503 1065q-30 -24 -54 -57M1311 1039q53 -11 98 -25M397 1033q16 -11 37 -15M229 1082q-1 -35 11 -69M1917 973q15 -24 39 -43M1077 1040q11 -10 6 -18M1440 1047q-28 -18 -72 -40M840 1085q34 -27 47 -56M449 1071q28 -32 60 -61M1198 1046q10 -17 6 -31M70 1063q30 9 74 6M1548 1004q36 -6 57 -12M1681 999q40 -5 57 -16M448 1041q-46 -14 -94 -21M296 1092q24 -28 52 -51M633 1083q-17 -43 -53 -71M1003 1037q-7 -18 -20 -28M125 1048q-3 -15 10 -34M290 1046q9 -15 24 -30M1784 1025q-11 -21 -29 -34M1042 1038q35 -21 80 -30M1332 1032q-35 2 -78 9M453 1033q6 -17 34 -23M1287 1056q5 -25 0 -43M889 1093q-27 -44 -31 -74M345 1039q32 -24 41 -34M813 1074q-9 -21 4 -51M467 1081q42 -8 78 -25" stroke="#e8ea34" stroke-width="3.4"/><path d="M681 1050q35 -13 55 -39M651 1055q-30 -12 -71 -32M441 1031q4 -12 8 -10M600 1084q-4 -32 -26 -65M1307 1083q-7 -24 0 -61M1782 1056q1 -42 -8 -73M1734 1030q-12 -22 -2 -48M818 1043q-24 -14 -57 -38M1204 1024q23 -16 58 -17M482 1064q27 1 54 -11M361 1032q-11 0 -16 -14M661 1075q44 -5 83 -25M1915 989q-21 -38 -32 -66M432 1083q0 -18 -21 -44M1029 1032q-39 -17 -72 -22M785 1070q22 -10 65 -32M573 1094q8 -26 21 -64M1267 1071q-7 -26 -1 -55M1659 999q-55 -4 -98 -5M398 1087q44 -32 64 -77M1737 1091q20 -18 56 -35M671 1055q28 -19 56 -26M1512 1061q17 -33 58 -82M772 1049q49 -19 87 -34M1930 1044q-13 -35 -9 -66M1856 1045q-21 -24 -44 -57M826 1057q17 -20 41 -25M616 1045q-11 -11 -7 -24M1827 1090q-23 -45 -60 -92M1559 1010q-10 -8 -20 -26M-8 932q6 -4 -1 -12M661 1033q29 -16 42 -24M64 1037q49 -16 86 -39M1108 1060q-2 -19 -7 -41M718 1071q27 -17 37 -47M192 1068q-1 -11 -11 -23M426 1056q21 -30 49 -46M-24 1068q0 -18 16 -35M1350 1036q-12 -8 -5 -26M297 1069q-33 7 -70 5M1584 1022q43 -19 65 -44M1678 1053q11 -23 41 -47M820 1035q54 -9 89 -23M860 1057q-3 -25 16 -48M610 1038q26 -10 70 -15M1569 1049q-5 -9 -22 -18M651 1094q-6 -24 -9 -35" stroke="#dae42e" stroke-width="3.4"/><path d="M1767 1089q-31 -16 -75 -25M162 1081q-23 -25 -44 -47M646 1070q-22 -8 -34 -3M1290 1044q24 -17 60 -34M1014 1059q19 -15 16 -37M139 1080q12 -29 33 -63M1097 1067q47 -26 98 -50M1406 1074q-8 -23 -4 -57M1740 1062q12 -8 41 -20M732 1050q32 -16 50 -26M852 1069q1 -22 25 -47M1796 1010q5 -18 14 -33M1162 1038q-2 -23 4 -34M700 1065q-36 -33 -73 -56M855 1078q13 -17 42 -29M1197 1031q-8 -1 1 -16M851 1032q10 -4 40 -10M1013 1085q28 -13 40 -30M784 1082q46 -29 73 -54M881 1077q3 0 23 -13M263 1071q-27 -32 -58 -56M1873 1069q-3 -49 9 -96M742 1089q6 -37 -5 -84M487 1066q-26 -15 -45 -43M1696 1042q9 -11 42 -25M859 1054q-40 -31 -84 -47M1139 1083q44 -23 79 -34M1339 1085q11 -13 11 -31M1398 1035q20 -18 17 -27M252 1043q2 -4 -10 -21M1765 1058q3 -33 15 -72M1070 1082q26 -26 67 -38M366 1032q16 -14 45 -17M1765 1018q-5 -7 1 -23M1558 1023q-17 -16 -13 -31M404 1052q-23 -22 -23 -45M406 1064q14 -10 23 -32M1205 1042q36 -11 91 -31M339 1032q7 -15 -6 -20M1190 1094q34 -29 54 -48M-13 951q0 -17 20 -47M1363 1072q24 -13 55 -23M1586 1001q33 -1 49 -7M363 1037q14 -8 19 -30M1041 1052q20 -19 29 -45M1138 1049q-44 -18 -72 -23M905 1049q-8 -4 -5 -24M3 1003q23 -51 45 -88M208 1038q23 -14 55 -23M772 1067q9 -21 31 -46M1294 1041q-23 0 -29 -5M-8 1031q-28 -11 -61 -38" stroke="#b0d826" stroke-width="3.4"/><path d="M199 1076q1 -20 8 -39M1467 1093q9 -22 41 -40M50 949q-26 -18 -56 -31M-11 948q-25 -11 -40 -38M1897 1091q30 -41 75 -83M1718 1002q-17 -9 -21 -18M1226 1090q1 -24 10 -40M1155 1091q33 -11 85 -26M1314 1060q10 -35 33 -54M577 1052q6 -25 27 -35M1402 1060q-35 -10 -91 -20M1583 1062q-20 -4 -50 -20M1076 1069q0 -9 -3 -31M555 1089q13 -17 43 -48M1023 1028q13 3 45 -7M374 1032q-34 -17 -50 -18M260 1069q-22 -19 -40 -44M530 1027q-9 -8 -42 -3M646 1082q12 -20 9 -32M364 1084q13 -11 39 -17M1130 1052q-14 -10 -6 -32M694 1028q5 -2 3 -12M299 1077q-29 -26 -57 -47M1170 1024q-6 -14 -19 -16M494 1074q6 -20 -6 -42M62 1066q-11 -24 -9 -53M1845 1055q30 -24 76 -54M1310 1079q-7 -40 -8 -73M1905 992q-23 4 -47 -6M1696 1087q-19 -6 -33 -20M648 1044q4 -15 13 -26M981 1084q42 -10 73 -9M1045 1026q4 -4 -7 -19M1448 1074q-12 -13 -21 -26M1917 976q-3 -26 1 -42M1578 1019q15 -26 22 -39M657 1066q-14 -30 -45 -48M1411 1025q33 -2 58 -1M1320 1073q-13 -25 -23 -58M527 1041q-9 -20 -35 -30" stroke="#4ca414" stroke-width="2.6"/><path d="M954 1039q-13 -3 -32 -15M1460 1037q8 -17 28 -32M1093 1081q0 -27 10 -68M606 1042q11 -19 19 -28M1280 1060q23 -21 42 -33M1871 1035q8 -16 25 -17M569 1056q22 -6 27 -13M1181 1068q52 -36 88 -62M458 1069q-13 -31 -20 -61M74 1063q18 -9 45 -23M1851 1058q-21 -29 -25 -71M998 1026q0 -10 22 -11M1421 1083q8 -24 23 -37M92 985q41 -28 88 -53M1290 1054q3 -3 18 -22M297 1027q24 -12 33 -9M1922 1049q18 -5 21 -16M742 1051q0 -25 -12 -39M507 1040q-7 -21 2 -27M840 1067q7 -33 -3 -54M644 1074q-7 -29 -33 -57M126 1049q-67 -6 -112 -15M992 1063q21 -5 66 -11M1633 1008q10 -11 1 -32M343 1068q-8 -8 -33 -27M1809 1054q28 -20 42 -50M1483 1068q-1 -6 16 -22M1199 1090q11 -38 16 -69M324 1073q-34 -14 -85 -41M1336 1049q5 -13 29 -25M1480 1067q13 -5 21 -18M435 1053q0 -27 19 -47M508 1045q-6 -25 2 -39M703 1057q0 -14 6 -39M23 1076q-8 -33 -14 -69M731 1039q-39 -20 -59 -30M1855 986q26 -7 33 -17M1526 1069q-24 -49 -65 -83M1842 986q2 -32 17 -52M671 1079q39 -24 94 -45M-7 952q21 -3 37 -16M1698 1061q15 -28 14 -55M1649 1085q-30 -40 -48 -87M1185 1045q-61 -9 -110 -11M1543 1001q16 -5 54 -17M1904 1045q9 0 37 0M1582 1019q0 -18 -9 -39M104 945q25 -7 43 -25M1200 1061q-8 -20 3 -29M1936 1089q-53 -25 -86 -54M1735 1069q25 -36 34 -73M-19 963q-21 -2 -20 -18M578 1072q0 -12 -22 -13M770 1027q20 -10 50 -9M772 1082q-15 -13 -45 -43M1116 1053q-17 -17 -35 -46M1688 1091q26 -22 39 -56M581 1084q2 -15 4 -25M1853 1073q0 -16 15 -33M1814 1002q15 -3 33 -15M1641 997q16 -1 38 -13M328 1079q-29 -22 -39 -43M212 1031q10 -16 34 -24M427 1037q-4 -13 -1 -25M1746 1080q10 -42 13 -98M1237 1075q11 -20 9 -55M1355 1085q45 -33 91 -72M1339 1031q21 -5 36 -21M1516 1074q-21 -22 -27 -36M375 1064q18 -17 44 -28M1217 1063q23 -24 61 -53M1475 1073q-37 -34 -52 -54M1231 1040q21 -13 24 -27M1443 1058q54 -24 94 -41M297 1045q-11 -7 -15 -30M328 1090q18 -16 44 -23M969 1051q40 -20 64 -42M507 1056q11 -19 9 -28M306 1060q-15 -18 -48 -44M1528 1023q-3 -17 -18 -38M423 1093q44 -8 82 -14M1687 1023q15 -20 34 -38M490 1085q-13 -38 -18 -78M1309 1085q28 -8 47 -16M1109 1067q12 -24 41 -52M614 1091q-9 -47 -6 -83M405 1068q-13 -32 -38 -56M1799 1032q-32 1 -41 -5M1583 1045q47 -30 79 -64M1028 1080q-8 -4 -38 -23M654 1093q-1 -19 -10 -51M1657 1013q0 -6 -7 -22M1611 1015q28 -6 35 -18M1330 1050q11 -5 18 -23M1731 1092q-1 -8 -14 -25M782 1048q19 -21 60 -33M545 1060q0 -8 1 -26M667 1070q48 -10 77 -31M1234 1029q4 -12 -8 -25M988 1042q-14 -15 -24 -19M434 1072q14 4 31 -6M766 1088q19 -7 27 -19M311 1089q3 -25 26 -49M509 1029q53 13 113 18M281 1037q26 -15 29 -23M50 925q-11 -6 -3 -15M1861 1047q-3 -53 13 -96M628 1043q-1 -12 -7 -25M1873 1052q19 -18 33 -25M822 1045q-9 -24 -24 -36M1173 1046q54 -19 97 -25M1633 1056q31 -30 41 -49M107 1044q-7 -47 7 -84M51 1087q21 -33 38 -54M1046 1063q-4 -9 14 -25M1908 960q21 -17 26 -29" stroke="#e8ea34" stroke-width="1"/><path d="M1925 1086q-4 -7 -8 -30M1824 1070q-17 -48 -16 -90M1844 990q-29 -7 -37 -19M1428 1048q14 -14 36 -17M1503 1021q2 -18 -8 -29M141 1064q-7 -29 -13 -46M146 1076q-22 -35 -23 -62M534 1037q14 -16 7 -19M338 1040q-3 -19 1 -22M1041 1090q-22 -11 -25 -27M280 1055q14 -5 28 -22M247 1073q-1 -23 3 -60M777 1054q-41 -13 -80 -29M1829 1089q33 -46 53 -98M1922 1025q16 -23 18 -32M362 1087q-14 -36 -33 -63M105 1020q-30 -39 -83 -74M1398 1043q-19 -17 -14 -24M948 1047q-34 -2 -52 -6M867 1074q24 -20 42 -40M1666 1082q3 -39 23 -71M326 1085q-28 -27 -48 -46M384 1071q5 -28 15 -61M509 1078q-7 -19 -16 -30M915 1061q-32 -22 -76 -32M186 1076q17 -35 33 -66M1096 1029q-2 -1 -1 -13M273 1072q37 -26 84 -54M1142 1080q24 8 39 4M1880 1009q31 -39 55 -65M897 1030q21 -15 18 -18M146 1084q37 -16 57 -46M789 1046q23 -20 40 -31M1789 1009q40 -2 93 -2M595 1081q51 0 83 -7M575 1042q7 -19 9 -34M1678 1069q19 -16 18 -44M1338 1037q10 -6 0 -28M93 1084q38 -29 83 -70M59 1050q11 -9 8 -28M591 1057q1 -22 -16 -41M1944 1083q13 -52 42 -98M1069 1046q-3 -15 5 -25M762 1094q-11 -33 -27 -62M1672 1013q-50 -16 -78 -18M378 1029q23 0 26 -9M1636 1053q23 -4 50 -6M-24 990q-36 -4 -59 -14M1201 1056q30 -22 62 -46M1603 1049q8 -14 27 -33M148 1038q-29 -7 -38 -21" stroke="#90cc20" stroke-width="2.6"/><path d="M452 1061q-55 -18 -92 -40M964 1045q-19 -16 -43 -36M1607 1086q40 -4 87 -16M1141 1088q12 -14 37 -18M192 1093q26 -34 31 -82M1708 1072q18 -26 35 -37M198 1026q-26 0 -31 -6M115 1089q18 -31 53 -73M1220 1034q-34 -17 -67 -27M683 1061q-38 -25 -94 -39M368 1059q6 -18 0 -31M230 1067q14 -32 10 -63M1240 1085q-43 -27 -69 -69M911 1040q-12 -23 -5 -35M1703 1004q-16 -16 -32 -19M1616 1071q9 -19 31 -27M1029 1087q-45 -30 -68 -75M455 1060q51 -26 88 -41M581 1030q29 -3 65 -10M415 1058q39 -19 80 -38M1854 974q31 -1 74 -18M1662 1081q38 -35 83 -78M-11 1046q-32 -26 -41 -47M1664 1041q30 -38 49 -60M307 1028q-22 -4 -50 -21M1526 1052q-10 -17 -31 -44M214 1085q8 -42 16 -81M666 1086q9 0 25 -10M794 1025q0 3 13 -2M192 1033q44 -3 70 -19M465 1094q16 -16 45 -27M442 1057q5 -21 18 -39M738 1045q13 -15 25 -22M1349 1061q-13 -21 -34 -47M1155 1041q6 0 28 0M712 1038q0 -16 -4 -32M782 1040q-17 -16 -52 -34M46 1010q-26 -28 -70 -52M233 1060q-4 -9 4 -25M1568 996q-16 0 -27 -3M124 1042q-1 -19 13 -26" stroke="#a0d424" stroke-width="2.6"/><path d="M1158 1069q25 -29 68 -57M408 1089q1 -21 -7 -43M1562 1025q-28 -21 -41 -44M1856 1072q-2 -38 13 -69M922 1075q-8 -32 -28 -63M583 1091q16 -26 22 -53M442 1044q-5 -13 -19 -39M1006 1026q-8 4 -25 -7M955 1077q-10 -20 -17 -56M1068 1074q11 -33 16 -55M1182 1045q7 -16 13 -40M337 1057q21 -22 29 -45M1473 1068q-3 -3 -26 -11M281 1076q-19 -28 -32 -65M728 1092q-3 -11 -16 -20M1763 1090q-10 -43 -39 -86M1585 1027q18 -1 53 5M520 1051q28 -4 55 -2M-21 1001q-5 -36 -14 -77M1706 1090q48 -23 88 -57M67 978q-37 12 -53 27M85 1058q-44 1 -88 -2M1461 1085q-19 -19 -23 -25M768 1028q1 -14 3 -24M1848 980q-15 -16 -15 -34M73 1092q-25 0 -32 -11M376 1051q16 -14 55 -24M329 1050q9 -20 10 -37M1729 1011q-33 -16 -52 -29M824 1075q-14 -14 -38 -19M795 1044q28 -9 50 -34M1849 988q13 -32 8 -65M852 1063q11 -21 1 -40M213 1084q41 -14 107 -17M1905 1013q30 -28 66 -48M517 1045q12 -13 6 -30M34 988q8 -39 29 -75M17 996q5 -36 14 -69M1042 1054q2 -25 -4 -41M1173 1094q-8 -31 -27 -75M1143 1053q37 -19 54 -44M1505 1022q-10 -21 -22 -42M915 1049q-29 -11 -73 -30M830 1049q0 -21 0 -42M1176 1054q51 -19 79 -35M584 1069q1 -13 23 -22M1113 1061q4 -17 -10 -49M272 1052q33 -18 89 -37M1135 1037q10 -18 -1 -22M554 1086q-50 -19 -78 -54" stroke="#b0d826" stroke-width="2.6"/><path d="M927 1049q35 0 56 -11M456 1043q40 -1 76 12M1629 1033q24 -15 35 -21M1623 1078q-6 -6 -21 -19M760 1061q46 -6 81 -23M1010 1027q12 -6 19 -20M247 1083q14 -37 12 -79M1689 1002q16 0 15 -9M1849 1047q49 -21 89 -55M276 1079q-15 -40 -17 -72M162 1065q-3 -17 -15 -46M1430 1039q-6 -16 -23 -19M723 1037q-9 -22 -32 -29M1240 1092q26 -12 46 -26M982 1062q-14 -20 -9 -54M1153 1046q28 -20 43 -33M1141 1060q-3 -24 -14 -45M442 1075q-8 -29 -8 -60M948 1067q-45 -29 -85 -48M174 1057q14 -7 37 -2M201 1091q-2 -40 -19 -70M584 1049q-11 -12 -18 -30M564 1079q-6 -32 -4 -72M1673 1058q-10 -25 -17 -67M583 1059q-21 -21 -31 -45M1833 1057q6 -14 -3 -38M99 969q36 -11 57 -36M275 1043q7 -14 1 -37M472 1046q49 -3 101 6M661 1072q-11 -19 -34 -32M1812 1010q-9 -10 0 -32M893 1062q-19 -13 -26 -18M1005 1066q24 -8 43 -20M1569 1065q5 -46 0 -84M253 1071q-23 -32 -22 -64M1527 1065q14 -33 35 -80M657 1061q-28 -18 -74 -20" stroke="#6cb81a" stroke-width="3.4"/><path d="M1544 1069q15 -25 46 -37M1792 1057q-23 -41 -23 -76M1348 1047q-36 -27 -75 -40M1269 1053q63 -18 107 -24M1040 1085q-7 -13 -34 -20M1123 1030q20 -15 23 -17M692 1030q3 -16 10 -25M206 1060q0 -16 -17 -41M478 1071q11 -14 20 -28M1492 1044q43 -15 79 -27M415 1047q18 -10 32 -28M171 1029q13 0 8 -9M440 1033q-5 -6 -1 -10M981 1053q9 -23 -3 -42M363 1066q45 -33 69 -51M1477 1082q13 -4 25 -6M1399 1044q11 -15 13 -37M1274 1034q1 -16 12 -26M1047 1075q-26 -22 -53 -43M272 1034q0 -14 17 -28M417 1093q-26 -40 -70 -88M512 1055q-41 -25 -58 -50M1820 1063q14 -40 38 -78M1207 1090q28 -40 67 -70M711 1073q4 -19 29 -37M1314 1035q9 -9 30 -17M1297 1073q5 -14 13 -38M897 1035q-10 -5 0 -20M448 1036q9 -7 19 -18M1852 1089q-28 -32 -36 -61M1293 1094q39 -4 68 -13M1597 1009q-17 -11 -12 -14M1776 1038q35 -16 59 -46M684 1035q28 -7 43 -23M1372 1039q15 -10 47 -31M1680 1028q-3 -32 -12 -50M842 1026q-30 -13 -64 -21" stroke="#a0d424" stroke-width="2"/><path d="M868 1084q53 -24 90 -47M400 1033q18 0 16 -13M427 1077q9 -17 25 -23M509 1075q-46 -37 -71 -61M1016 1061q7 -23 1 -51M552 1070q7 -16 28 -24M134 1069q6 -28 14 -56M915 1080q12 0 26 -11M1237 1077q28 -10 72 -26M875 1073q-4 -37 5 -64M1697 1080q16 -56 17 -98M1496 1035q-28 -12 -62 -20M1700 1069q43 -28 72 -51M1000 1039q-3 -14 2 -17M1094 1059q45 -18 97 -40M1528 1058q-29 3 -47 0M8 951q3 -11 14 -35M436 1044q-12 -13 -1 -34M1394 1044q28 -4 42 -8M25 937q24 -13 50 -31M68 1084q-42 -27 -67 -55M809 1043q3 -11 -1 -26M1663 1088q6 -41 -7 -86M895 1052q-11 -23 0 -41M115 1091q19 -12 22 -16M592 1080q52 -24 82 -50M602 1087q11 -31 20 -77M343 1088q10 -25 1 -49M1251 1037q-4 -13 13 -15M1266 1037q0 -24 17 -33M893 1061q-2 -24 17 -56M1199 1076q4 -26 12 -63M-4 1016q-1 -28 -3 -54M663 1078q-21 -40 -30 -72M200 1027q11 3 5 -7M1193 1040q37 -16 96 -30M611 1028q6 -4 9 -6M1790 1000q14 -5 39 -21M515 1028q0 -8 3 -14M348 1053q20 -11 22 -34" stroke="#e8ea34" stroke-width="2.6"/><path d="M1566 1028q-12 -18 -30 -22M574 1057q33 -14 68 -39M1832 994q31 -40 55 -73M861 1027q20 -6 46 -7M670 1059q-7 -19 -15 -41M540 1036q35 -15 61 -26M1886 1057q5 -53 -7 -108M1782 1000q-12 0 -41 -6M1459 1056q7 -10 16 -33M454 1040q48 -6 84 -23M359 1064q11 -30 0 -51M1489 1026q9 -15 -3 -15M183 1088q24 -25 25 -64M1380 1038q0 -17 -4 -23M745 1043q2 -12 -12 -19M1276 1044q40 -11 66 -23M496 1059q19 -27 58 -47M666 1047q11 -20 5 -28M-11 1020q-15 -43 -36 -78M1231 1074q-21 -22 -24 -42M1587 1081q-21 -20 -64 -49M1024 1032q-1 -10 -20 -23M1648 1066q11 -43 13 -77M1444 1077q20 -16 58 -17M1518 1093q-3 -45 -23 -84M168 1055q10 -18 2 -41M385 1068q9 -37 16 -60M1259 1088q4 -29 26 -46M1365 1072q11 -36 0 -63M1689 1035q19 -17 28 -28M201 1074q-15 -14 -24 -38M800 1047q0 -28 -18 -41M1634 1067q17 -37 41 -85M1792 1032q-7 -12 0 -27M517 1031q2 -4 0 -22M1010 1093q-50 -33 -98 -58" stroke="#dae42e" stroke-width="2.6"/><path d="M1156 1057q35 -8 67 -27M121 1026q-7 -9 -3 -17M1782 1003q20 0 35 -12M1644 1050q-16 -36 -35 -65M1721 1027q21 -23 23 -49M1207 1053q-4 -19 14 -40M1523 1086q-15 -39 -51 -79M586 1060q-24 -24 -49 -43M1627 1064q-2 -25 13 -36M737 1082q0 -25 1 -49M1460 1076q52 -3 99 -6M906 1062q-24 -16 -45 -48M1373 1049q-2 -11 14 -33M1359 1043q21 -6 46 -21M356 1046q-34 -20 -50 -28M1174 1037q38 -11 56 -18" stroke="#2f8010" stroke-width="3.4"/><path d="M1698 1085q2 -37 21 -64M469 1037q35 -16 49 -17M1877 1083q41 -43 76 -72M1761 1079q17 -41 16 -92M324 1067q-15 -30 -30 -55M678 1073q9 -25 -2 -40M1461 1041q18 -9 49 -21M1428 1063q-17 -24 -22 -56M864 1034q47 -10 91 -10M1460 1051q8 -5 24 -13M111 1062q0 -26 12 -45M1109 1054q-7 -15 -24 -34M24 971q18 -31 40 -49M278 1032q-35 -19 -57 -23M83 1043q-12 -28 -27 -57M893 1040q-40 -24 -59 -33M630 1066q0 -13 -21 -30M1834 986q-3 -23 3 -60M107 1081q1 -27 -14 -66M1076 1040q-5 -16 -13 -24M475 1094q-32 -39 -48 -68M1349 1038q39 -5 69 -21M1930 980q40 -6 77 -22M806 1089q0 -27 -5 -63M1134 1087q-16 -30 -32 -46M579 1087q43 -22 89 -39" stroke="#a0d424" stroke-width="3.4"/><path d="M1809 1094q9 -12 15 -35M1415 1085q-28 -29 -39 -45M1443 1026q-22 -11 -35 -19M278 1044q2 -21 25 -30M618 1073q-31 -5 -40 -24M1557 1021q19 -13 40 -25M696 1049q-10 -12 -3 -38M781 1065q-20 -13 -33 -15M1447 1041q3 -9 -14 -17M1709 1091q-23 -34 -58 -70M1042 1075q26 -29 30 -58M646 1084q32 -2 44 -7M432 1081q-20 -8 -41 -9M906 1039q-7 -20 -17 -35M535 1050q14 -20 23 -43M535 1094q-3 -14 14 -27M1458 1055q-33 -19 -69 -47M1456 1069q-1 -38 -12 -64M1302 1077q14 -23 23 -40M73 998q-2 -32 0 -59M609 1025q38 -9 61 -12M1199 1061q11 -4 25 -16M336 1081q-6 -16 -30 -18M179 1029q26 -8 60 -10M1889 956q-15 -21 -24 -33M1805 1061q-13 -29 -48 -67M767 1085q12 -40 29 -74M1401 1056q-13 -13 -7 -39M1646 1076q-3 -10 -12 -23M1441 1028q21 5 52 -4M1167 1081q21 -11 36 -34M1910 991q17 -30 25 -58M1828 1048q25 -33 57 -56M724 1035q-5 -9 -9 -30M1914 1057q-2 -27 -18 -69M19 931q-6 -2 -2 -9M1385 1087q-6 -25 -7 -64M788 1070q64 -2 104 -17M1659 1028q-27 -25 -34 -48M1638 1056q-25 -24 -50 -58M775 1043q4 -13 3 -21M1724 1018q-34 -18 -69 -33M404 1032q-14 -3 -12 -9M1511 1093q7 -10 38 -20M990 1091q25 -17 27 -25M846 1056q63 -7 114 0M169 1079q-29 -33 -35 -60M627 1093q5 -45 14 -82M1674 1037q19 -28 35 -56M954 1077q-10 -28 -13 -68M1595 1013q15 -7 34 -22" stroke="#90cc20" stroke-width="2"/><path d="M1710 1000q-1 -3 1 -18M1470 1048q-44 -12 -103 -22M1559 1092q-23 -46 -38 -105M173 1026q19 -10 26 -19M1227 1040q4 -5 24 -15M1275 1064q-11 -31 -12 -49M1412 1063q-27 -33 -44 -54M1178 1059q-7 -33 -6 -51M1178 1090q17 -30 28 -63M327 1084q-30 -46 -42 -79M920 1032q10 -6 5 -16M1946 1036q-20 -12 -34 -18M1472 1084q12 -15 29 -21M1811 1090q29 -12 72 -21M1653 1087q10 -46 41 -97M317 1062q39 -23 96 -40M1262 1044q-1 -25 -15 -38M410 1089q-11 -38 -7 -69M579 1076q22 -15 34 -24M854 1085q-15 -24 -12 -45M1275 1044q3 -14 19 -35M1573 1036q10 -29 45 -48M1911 977q-2 -23 -19 -52M1515 1071q-8 -41 -18 -84M1703 1032q-34 -12 -45 -31M15 991q14 -10 21 -29M1946 950q38 -15 86 -24M1923 1000q29 -12 65 -18" stroke="#f4f48c" stroke-width="3.4"/><path d="M1439 1070q4 -19 15 -27M1554 1040q14 -34 47 -56M6 1043q12 -6 20 -19M1004 1052q0 -18 2 -39M1476 1085q2 -24 -16 -40M653 1044q4 -15 10 -24M1256 1080q-7 -18 -25 -31M514 1068q55 8 97 23M1495 1050q20 -24 64 -39M652 1076q46 -31 74 -69M1195 1038q12 -21 31 -27M131 1083q2 -15 0 -38M219 1052q37 -11 51 -35M212 1037q-14 -8 -21 -18M611 1072q-42 -15 -75 -24M507 1084q-3 -21 -19 -27" stroke="#2f8010" stroke-width="2.6"/><path d="M1167 1043q-11 -16 -46 -17M832 1057q32 -22 58 -42M1755 1020q-16 -13 -16 -29M217 1084q-16 -14 -14 -43M1401 1028q-2 -5 9 -6M1259 1071q-6 -25 -10 -38M1546 1010q-18 -5 -23 -21M1265 1054q19 -30 51 -45M539 1081q-15 -41 -40 -76M776 1030q12 -8 3 -15M757 1092q40 -34 75 -71M1408 1081q30 0 44 -15M-21 1005q14 -30 24 -50M1382 1029q-58 -11 -98 -13M318 1043q13 -21 30 -39M191 1053q-1 -13 -7 -42M1144 1036q27 -18 56 -22M1728 1074q-40 -11 -70 -15M530 1044q26 -22 38 -32M53 1090q12 -5 19 -26M1200 1055q29 -19 52 -50M707 1086q-28 -42 -35 -77M1606 1008q-57 -11 -105 -29M1036 1035q-8 -16 0 -22M634 1047q-11 -8 -28 -23M736 1090q13 -26 44 -47M1930 1000q-7 -22 -2 -47M115 1069q14 -30 10 -61M452 1084q8 -41 24 -77M1722 1046q-28 -14 -47 -34M442 1065q-4 -31 -10 -48M1327 1044q12 -6 39 -27M1919 1067q24 -9 31 -31M1076 1064q16 -2 32 -20M911 1065q49 -21 85 -54M1833 996q0 -15 23 -17M374 1046q5 -24 21 -39M1075 1036q25 -7 37 -24M886 1065q-6 -25 -27 -56M1099 1055q5 -22 9 -32M66 1082q41 -30 81 -55M1091 1070q23 -27 52 -47M606 1050q-18 -7 -17 -28M1175 1055q5 -18 20 -23M478 1043q-14 -11 -22 -16M432 1032q-27 -12 -56 -20" stroke="#e8ea34" stroke-width="2"/><path d="M218 1076q14 -20 43 -25M225 1032q-3 1 -16 -8M1893 1027q11 -14 33 -17M222 1054q-1 -22 -19 -42M422 1066q-22 -25 -35 -53M663 1028q6 -10 18 -6M867 1054q53 -23 87 -39M1599 1004q45 2 80 1M282 1079q4 -21 14 -57M688 1058q2 -16 2 -41M1478 1025q-13 2 -11 -1M478 1057q-15 -14 -7 -30M277 1031q-11 -14 -24 -19M1849 957q-19 -24 -15 -35M999 1062q25 -22 71 -53M1006 1068q5 -18 -6 -35M301 1035q-5 -17 9 -29M1099 1045q26 -3 33 -16M893 1068q25 -27 60 -47M1909 1054q46 -34 77 -77M1288 1037q-6 -2 -33 -15M290 1085q13 -39 37 -72M1552 1052q20 -28 32 -68M1832 953q-22 -2 -60 -16M956 1053q54 -27 99 -38M1551 1017q24 -15 37 -22M1370 1085q-6 -39 -28 -69M1125 1040q5 -9 13 -22" stroke="#f2f058" stroke-width="2.6"/><path d="M252 1052q51 -13 88 -34M1260 1028q-6 -9 -20 -15M1015 1075q40 -20 63 -45M-24 1013q11 -4 42 -16M1531 1088q20 -46 45 -84M1142 1059q18 -12 36 -26M285 1040q1 -15 -4 -32M1014 1040q-18 -18 -14 -20M87 987q19 -24 19 -36M1898 954q-25 -21 -38 -26M1768 1065q-7 -30 -29 -75M603 1055q6 -16 0 -31M736 1043q28 -27 52 -38M296 1031q16 -11 11 -20M315 1025q-27 -12 -46 -13M1367 1080q28 -35 47 -57M1379 1049q-32 -9 -54 -31M1384 1030q39 -12 60 -21M608 1064q-20 -13 -26 -41M434 1024q25 -10 32 -9M1641 1057q-6 -19 5 -39M1633 1012q-18 -16 -22 -32M1814 1036q7 -32 14 -48M443 1080q39 -16 78 -45M19 1073q-9 -39 -11 -91" stroke="#f4f48c" stroke-width="2.6"/><path d="M1552 1019q1 -18 5 -38M280 1025q8 -1 26 -5M489 1041q3 -22 20 -35M1781 1048q7 -14 2 -33M1769 1046q33 -36 43 -58M1749 1047q-21 -25 -31 -59M963 1082q-10 -26 -34 -45M870 1056q20 -26 57 -41M778 1034q34 -19 72 -27M1402 1034q2 -12 9 -25M1859 1028q35 -29 49 -58M1400 1087q13 -33 3 -81M203 1063q35 -24 78 -58M206 1088q-7 -28 -15 -45M1258 1069q-4 -28 9 -56M1579 1044q12 -16 9 -46M1803 1036q-18 -16 -54 -38M870 1054q43 -16 71 -39M442 1047q-7 -19 1 -37M724 1079q50 -24 91 -40M1005 1028q26 -11 39 -15M218 1077q29 -19 60 -46M809 1057q28 -10 76 -36M1152 1069q5 -16 -12 -46M1243 1047q0 -15 0 -27M30 1012q17 -18 22 -25M770 1094q-50 -36 -86 -65M627 1068q-9 -27 0 -61M639 1088q-19 -4 -45 -11M816 1024q46 -4 95 5M387 1033q-3 -4 4 -9M920 1068q-47 -23 -107 -33M139 1069q29 -22 46 -36M1057 1057q19 -6 49 -8M1061 1055q11 -9 7 -35M948 1079q-33 -19 -57 -48M1620 1018q3 -18 23 -29M1736 1078q17 -3 29 1M702 1036q-42 -11 -80 -23M-15 1082q-11 -35 -2 -54M214 1047q4 -21 8 -42M1935 1001q-57 -24 -96 -58M620 1059q-30 -18 -53 -42M1498 1083q-32 -31 -58 -65M1241 1080q-10 -25 -18 -62M1074 1036q29 -4 46 -22M1000 1041q4 -17 3 -34M1392 1060q24 -21 47 -47M1392 1084q-14 -35 -15 -80M1335 1066q-17 -32 -28 -51M52 1043q-46 -23 -82 -52M1506 1075q11 -16 23 -17M1902 1024q37 -38 68 -79M1099 1091q7 -5 29 -1M1440 1071q-4 -30 -14 -55M1777 1046q-13 -28 -16 -45M470 1060q-27 -29 -52 -44M1508 1026q-7 -18 4 -31M304 1044q-12 -10 -19 -15M1345 1079q-18 -26 -51 -60M462 1046q-6 -16 9 -39M1626 1070q-3 -46 -13 -92M238 1059q-6 -29 -33 -48M1652 1011q27 -18 70 -25M236 1068q20 -29 57 -55M534 1074q-37 -8 -58 -21M1138 1044q16 -20 22 -36M1135 1054q-17 -9 -15 -31" stroke="#4ca414" stroke-width="1"/><path d="M1675 998q7 -17 22 -19M1635 1048q9 -35 30 -58M566 1073q26 -31 52 -56M1317 1079q-44 -32 -69 -73M1155 1079q-3 -32 3 -61M1033 1076q-33 -42 -60 -70M614 1063q21 -28 20 -42M1534 1066q10 -13 23 -25M494 1076q33 0 44 -6M541 1090q3 -39 1 -80M1174 1060q16 -26 18 -55" stroke="#2f8010" stroke-width="2"/><path d="M293 1049q17 -16 21 -35M427 1061q22 -12 66 -35M608 1065q-13 -31 -47 -60M227 1066q14 -25 40 -53M819 1069q-22 -33 -21 -57M1479 1092q6 -20 0 -42M126 1055q-40 10 -95 7M646 1047q-50 -16 -103 -34M1058 1091q12 -28 13 -43M1606 1022q49 -18 84 -45M1476 1042q24 -13 53 -14M188 1033q-13 -2 -21 -12M67 935q-18 -5 -35 -16M1323 1040q20 0 52 -16M163 1083q44 -30 81 -73" stroke="#2f8010" stroke-width="1"/></g><path d="M1811 1020q-4 -15 -13 -24M1437 1042q-23 -3 -38 0M1556 1068q15 -11 40 -13M1548 1055q7 -15 9 -26M1079 1068q-18 -17 -34 -26M382 1038q-25 4 -42 22M30 1039q-9 -4 -28 1M929 1050q-23 -14 -53 -17M218 1072q-25 -5 -52 -11M996 1076q16 -28 26 -41M1828 1003q-14 -7 -30 -9M985 1081q29 -10 53 -12M1563 1030q-18 -15 -42 -19M49 930q10 -9 24 -16M1880 1029q21 -10 50 -7M812 1043q-14 -17 -24 -33M539 1058q-6 -15 -22 -24M1 1012q20 -15 43 -20M-4 987q29 -10 54 -9M931 1058q28 -4 58 2M1638 1044q8 -12 24 -14M1280 1027q16 -1 28 2M34 920q-3 -16 -12 -24M1164 1069q29 -18 54 -25M1578 1038q-22 -18 -41 -26M1244 1041q21 -16 45 -23M938 1066q-12 -14 -30 -19M171 1031q-6 -18 -20 -26M440 1083q12 -25 15 -47M1581 1035q22 -3 42 -4M136 1064q13 -16 32 -20M704 1072q-21 -13 -53 -13M757 1034q17 -20 43 -35M889 1029q19 -10 34 -18M417 1050q10 -17 24 -32M357 1043q-28 -6 -51 1M1484 1049q10 -2 28 3M505 1035q-18 2 -44 8M1045 1066q-21 -19 -44 -25M1185 1078q-13 -16 -25 -23M1446 1038q22 -17 41 -20M1424 1062q15 -15 39 -18M1893 1083q28 0 48 5M371 1031q-14 -24 -32 -34M204 1038q15 -2 29 -3M1342 1020q-13 -9 -29 -12M241 1082q14 -23 37 -40M1650 1009q-25 -11 -57 -14M278 1026q-17 -2 -44 -2M304 1070q-19 -11 -42 -10M1089 1047q22 -23 40 -40M795 1074q16 -10 32 -8M498 1026q-13 0 -36 3M1526 1022q-26 -18 -49 -21M889 1074q28 -4 56 4M309 1055q15 -10 25 -18M1269 1036q-11 -10 -31 -6M148 1047q21 -7 42 -11M646 1052q-21 -8 -40 -4M1770 1004q24 -10 57 -15M1408 1072q16 -9 32 -13M391 1035q-23 -22 -41 -29M1899 966q-27 -17 -49 -30M1192 1079q-19 -5 -29 2M762 1020q17 -25 28 -44M499 1082q12 -18 31 -26M1132 1040q12 -15 33 -24M318 1079q-19 -16 -38 -18M580 1034q17 -9 33 -9M1715 1011q26 1 48 2M269 1048q-17 -15 -35 -17M30 958q-25 -12 -43 -17M1256 1037q-20 -25 -36 -38M434 1047q26 -15 49 -28M1437 1055q-19 -19 -40 -39M1814 1081q19 -20 32 -34M854 1055q16 -4 37 0M947 1074q-18 -18 -43 -31M461 1059q32 -3 56 -5M1335 1052q18 -24 36 -46M56 1065q-28 -11 -50 -16M1789 1034q22 -12 52 -16M703 1046q11 -6 32 -2M1527 1046q17 -8 28 -6M733 1066q21 -7 36 -14M302 1069q-22 -13 -35 -15M43 998q17 -3 30 -2M188 1052q30 -7 58 -5M541 1082q16 -9 34 -15M304 1028q6 -23 19 -38M-9 952q12 -12 26 -23M616 1051q-12 -13 -20 -25M980 1036q-3 -15 -15 -25M1245 1021q-8 -15 -22 -19M479 1084q30 -3 50 -4M647 1051q13 -16 28 -27M1411 1022q-24 -7 -52 -13M1411 1052q12 -2 32 -5M986 1066q-24 -5 -43 -8M1399 1048q19 -10 38 -8M394 1058q15 -13 31 -18M1699 1077q13 -8 34 -13M187 1067q-10 0 -30 11M851 1056q-9 -17 -17 -24M1936 943q13 -1 31 7M1335 1056q-13 -20 -33 -27M283 1025q-17 -6 -27 -7M159 1031q12 -9 29 -10M1298 1027q15 -6 26 -12M824 1084q-17 -23 -37 -41M1642 1054q16 9 39 22M440 1084q13 -11 25 -14M839 1083q32 1 58 4M422 1078q32 -4 59 1M1196 1071q27 8 49 18M144 1039q31 -6 54 -12M1601 1009q21 -9 43 -17M905 1073q-11 -14 -14 -24M1005 1043q26 -18 45 -26M1591 1055q-15 -17 -22 -25M991 1037q16 -12 27 -14M881 1074q19 -21 43 -30M57 1016q6 -20 18 -34M1303 1047q-16 -21 -35 -31M1357 1057q-23 5 -37 23M1771 1066q-23 -11 -41 -13M1732 1077q16 -11 29 -21M1430 1051q24 -18 48 -26M1152 1071q25 -11 47 -6M1119 1075q-12 -7 -32 -8M199 1062q27 9 52 22M1704 1041q-16 -26 -34 -39M600 1072q17 -7 38 -6M536 1073q23 -21 43 -27M1402 1083q15 -26 24 -45M1064 1050q15 -11 25 -18M736 1026q19 0 48 9M1676 1018q11 -24 32 -39M985 1051q22 -20 47 -36M1183 1033q-17 -9 -45 -9M374 1071q-13 -3 -34 -3M392 1048q-18 -16 -41 -23M845 1076q-13 -18 -29 -31M313 1037q23 -4 44 2M450 1021q12 -27 35 -46M771 1030q24 4 41 12M722 1023q-22 -19 -35 -36M943 1076q-29 -4 -52 0M1202 1039q21 -9 34 -16M1856 978q14 -2 32 -3M1235 1076q13 -17 31 -25M384 1067q9 -14 28 -15M1112 1062q-18 -2 -35 0M743 1076q-13 -7 -32 -1M611 1035q10 -11 29 -16M1709 1065q-13 -27 -27 -39M1164 1023q-14 -11 -25 -18M939 1050q9 -16 23 -18M1393 1082q14 3 27 13M-2 1019q-9 -17 -22 -23M867 1074q12 -9 29 -8M1262 1066q-15 -7 -27 -5M1226 1047q15 -9 28 -3M1713 1011q23 -3 45 0M1680 997q-9 -21 -23 -42M476 1020q16 -4 29 5M1761 1084q-27 -13 -47 -27M1715 1018q25 -10 50 -16M315 1063q-13 -6 -33 -2M1867 1020q-18 -3 -44 3M1213 1020q-10 -19 -22 -33M1136 1053q-10 -12 -15 -25M284 1048q-18 -15 -40 -28M602 1071q17 -15 38 -20M743 1071q-24 -13 -49 -18M571 1039q-20 -12 -40 -19M1571 1020q-34 -4 -58 6M892 1025q17 -21 36 -41M291 1031q16 -25 40 -39M778 1037q-25 -9 -54 -12M1528 1070q15 -11 32 -18M1204 1047q-14 -10 -33 -16M936 1030q-19 -17 -37 -19M1183 1028q-10 -17 -29 -28M1060 1066q-26 -7 -52 -12M792 1032q6 -27 10 -50M1485 1082q23 -1 47 5M1525 1025q27 -9 50 -16M1023 1075q-24 -12 -56 -19M667 1077q-26 -5 -58 0M1738 1062q12 -27 28 -41M1063 1058q7 -15 19 -20M414 1056q12 -27 33 -47M1071 1080q-12 -26 -24 -40M182 1043q-26 -3 -55 -5M580 1078q18 -19 33 -23M1570 1058q-25 -26 -42 -37M1613 1002q-12 -9 -34 -15M230 1049q10 -30 27 -46M1336 1046q-14 -13 -28 -21M636 1025q-28 -11 -48 -23M257 1043q-23 -11 -40 -13M1663 1061q-18 -28 -37 -46M1327 1031q16 -15 25 -26M531 1079q25 9 51 25M1153 1076q13 -8 25 -13M1537 1009q19 -11 40 -7M1050 1045q13 -5 29 0M1254 1077q0 -29 -5 -56M731 1044q-11 -15 -27 -20M238 1053q22 0 38 15M385 1061q-16 -13 -36 -18M1869 1034q12 -10 24 -18M1061 1076q-17 -10 -44 -20M583 1039q23 -7 52 -9M1705 1041q-23 -24 -37 -41M-12 1046q-17 -9 -43 -12M1250 1065q-14 -9 -31 -7M22 945q26 -6 51 -10M1717 1060q18 -15 34 -19M507 1080q21 6 49 14M364 1041q25 -12 52 -19M1217 1067q8 -11 25 -20M1468 1033q8 -9 25 -15M759 1058q-14 -9 -30 -15M1118 1073q13 -11 26 -9M1021 1058q-25 -19 -44 -26M1058 1051q-17 -10 -24 -19M776 1059q-16 -28 -24 -41M59 981q16 -12 26 -15" fill="none" stroke="#dfe22e" stroke-width="6" stroke-dasharray="3.2 1.6" stroke-linecap="butt"/><path d="M1811 1020q-4 -15 -13 -24M1437 1042q-23 -3 -38 0M1556 1068q15 -11 40 -13M1548 1055q7 -15 9 -26M1079 1068q-18 -17 -34 -26M382 1038q-25 4 -42 22M30 1039q-9 -4 -28 1M929 1050q-23 -14 -53 -17M218 1072q-25 -5 -52 -11M996 1076q16 -28 26 -41M1828 1003q-14 -7 -30 -9M985 1081q29 -10 53 -12M1563 1030q-18 -15 -42 -19M49 930q10 -9 24 -16M1880 1029q21 -10 50 -7M812 1043q-14 -17 -24 -33M539 1058q-6 -15 -22 -24M1 1012q20 -15 43 -20M-4 987q29 -10 54 -9M931 1058q28 -4 58 2M1638 1044q8 -12 24 -14M1280 1027q16 -1 28 2M34 920q-3 -16 -12 -24M1164 1069q29 -18 54 -25M1578 1038q-22 -18 -41 -26M1244 1041q21 -16 45 -23M938 1066q-12 -14 -30 -19M171 1031q-6 -18 -20 -26M440 1083q12 -25 15 -47M1581 1035q22 -3 42 -4M136 1064q13 -16 32 -20M704 1072q-21 -13 -53 -13M757 1034q17 -20 43 -35M889 1029q19 -10 34 -18M417 1050q10 -17 24 -32M357 1043q-28 -6 -51 1M1484 1049q10 -2 28 3M505 1035q-18 2 -44 8M1045 1066q-21 -19 -44 -25M1185 1078q-13 -16 -25 -23M1446 1038q22 -17 41 -20M1424 1062q15 -15 39 -18M1893 1083q28 0 48 5M371 1031q-14 -24 -32 -34M204 1038q15 -2 29 -3M1342 1020q-13 -9 -29 -12M241 1082q14 -23 37 -40M1650 1009q-25 -11 -57 -14M278 1026q-17 -2 -44 -2M304 1070q-19 -11 -42 -10M1089 1047q22 -23 40 -40M795 1074q16 -10 32 -8M498 1026q-13 0 -36 3M1526 1022q-26 -18 -49 -21M889 1074q28 -4 56 4M309 1055q15 -10 25 -18M1269 1036q-11 -10 -31 -6M148 1047q21 -7 42 -11M646 1052q-21 -8 -40 -4M1770 1004q24 -10 57 -15M1408 1072q16 -9 32 -13M391 1035q-23 -22 -41 -29M1899 966q-27 -17 -49 -30M1192 1079q-19 -5 -29 2M762 1020q17 -25 28 -44M499 1082q12 -18 31 -26M1132 1040q12 -15 33 -24M318 1079q-19 -16 -38 -18M580 1034q17 -9 33 -9M1715 1011q26 1 48 2M269 1048q-17 -15 -35 -17M30 958q-25 -12 -43 -17M1256 1037q-20 -25 -36 -38M434 1047q26 -15 49 -28M1437 1055q-19 -19 -40 -39M1814 1081q19 -20 32 -34M854 1055q16 -4 37 0M947 1074q-18 -18 -43 -31M461 1059q32 -3 56 -5M1335 1052q18 -24 36 -46M56 1065q-28 -11 -50 -16M1789 1034q22 -12 52 -16M703 1046q11 -6 32 -2M1527 1046q17 -8 28 -6M733 1066q21 -7 36 -14M302 1069q-22 -13 -35 -15M43 998q17 -3 30 -2M188 1052q30 -7 58 -5M541 1082q16 -9 34 -15M304 1028q6 -23 19 -38M-9 952q12 -12 26 -23M616 1051q-12 -13 -20 -25M980 1036q-3 -15 -15 -25M1245 1021q-8 -15 -22 -19M479 1084q30 -3 50 -4M647 1051q13 -16 28 -27M1411 1022q-24 -7 -52 -13M1411 1052q12 -2 32 -5M986 1066q-24 -5 -43 -8M1399 1048q19 -10 38 -8M394 1058q15 -13 31 -18M1699 1077q13 -8 34 -13M187 1067q-10 0 -30 11M851 1056q-9 -17 -17 -24M1936 943q13 -1 31 7M1335 1056q-13 -20 -33 -27M283 1025q-17 -6 -27 -7M159 1031q12 -9 29 -10M1298 1027q15 -6 26 -12M824 1084q-17 -23 -37 -41M1642 1054q16 9 39 22M440 1084q13 -11 25 -14M839 1083q32 1 58 4M422 1078q32 -4 59 1M1196 1071q27 8 49 18M144 1039q31 -6 54 -12M1601 1009q21 -9 43 -17M905 1073q-11 -14 -14 -24M1005 1043q26 -18 45 -26M1591 1055q-15 -17 -22 -25M991 1037q16 -12 27 -14M881 1074q19 -21 43 -30M57 1016q6 -20 18 -34M1303 1047q-16 -21 -35 -31M1357 1057q-23 5 -37 23M1771 1066q-23 -11 -41 -13M1732 1077q16 -11 29 -21M1430 1051q24 -18 48 -26M1152 1071q25 -11 47 -6M1119 1075q-12 -7 -32 -8M199 1062q27 9 52 22M1704 1041q-16 -26 -34 -39M600 1072q17 -7 38 -6M536 1073q23 -21 43 -27M1402 1083q15 -26 24 -45M1064 1050q15 -11 25 -18M736 1026q19 0 48 9M1676 1018q11 -24 32 -39M985 1051q22 -20 47 -36M1183 1033q-17 -9 -45 -9M374 1071q-13 -3 -34 -3M392 1048q-18 -16 -41 -23M845 1076q-13 -18 -29 -31M313 1037q23 -4 44 2M450 1021q12 -27 35 -46M771 1030q24 4 41 12M722 1023q-22 -19 -35 -36M943 1076q-29 -4 -52 0M1202 1039q21 -9 34 -16M1856 978q14 -2 32 -3M1235 1076q13 -17 31 -25M384 1067q9 -14 28 -15M1112 1062q-18 -2 -35 0M743 1076q-13 -7 -32 -1M611 1035q10 -11 29 -16M1709 1065q-13 -27 -27 -39M1164 1023q-14 -11 -25 -18M939 1050q9 -16 23 -18M1393 1082q14 3 27 13M-2 1019q-9 -17 -22 -23M867 1074q12 -9 29 -8M1262 1066q-15 -7 -27 -5M1226 1047q15 -9 28 -3M1713 1011q23 -3 45 0M1680 997q-9 -21 -23 -42M476 1020q16 -4 29 5M1761 1084q-27 -13 -47 -27M1715 1018q25 -10 50 -16M315 1063q-13 -6 -33 -2M1867 1020q-18 -3 -44 3M1213 1020q-10 -19 -22 -33M1136 1053q-10 -12 -15 -25M284 1048q-18 -15 -40 -28M602 1071q17 -15 38 -20M743 1071q-24 -13 -49 -18M571 1039q-20 -12 -40 -19M1571 1020q-34 -4 -58 6M892 1025q17 -21 36 -41M291 1031q16 -25 40 -39M778 1037q-25 -9 -54 -12M1528 1070q15 -11 32 -18M1204 1047q-14 -10 -33 -16M936 1030q-19 -17 -37 -19M1183 1028q-10 -17 -29 -28M1060 1066q-26 -7 -52 -12M792 1032q6 -27 10 -50M1485 1082q23 -1 47 5M1525 1025q27 -9 50 -16M1023 1075q-24 -12 -56 -19M667 1077q-26 -5 -58 0M1738 1062q12 -27 28 -41M1063 1058q7 -15 19 -20M414 1056q12 -27 33 -47M1071 1080q-12 -26 -24 -40M182 1043q-26 -3 -55 -5M580 1078q18 -19 33 -23M1570 1058q-25 -26 -42 -37M1613 1002q-12 -9 -34 -15M230 1049q10 -30 27 -46M1336 1046q-14 -13 -28 -21M636 1025q-28 -11 -48 -23M257 1043q-23 -11 -40 -13M1663 1061q-18 -28 -37 -46M1327 1031q16 -15 25 -26M531 1079q25 9 51 25M1153 1076q13 -8 25 -13M1537 1009q19 -11 40 -7M1050 1045q13 -5 29 0M1254 1077q0 -29 -5 -56M731 1044q-11 -15 -27 -20M238 1053q22 0 38 15M385 1061q-16 -13 -36 -18M1869 1034q12 -10 24 -18M1061 1076q-17 -10 -44 -20M583 1039q23 -7 52 -9M1705 1041q-23 -24 -37 -41M-12 1046q-17 -9 -43 -12M1250 1065q-14 -9 -31 -7M22 945q26 -6 51 -10M1717 1060q18 -15 34 -19M507 1080q21 6 49 14M364 1041q25 -12 52 -19M1217 1067q8 -11 25 -20M1468 1033q8 -9 25 -15M759 1058q-14 -9 -30 -15M1118 1073q13 -11 26 -9M1021 1058q-25 -19 -44 -26M1058 1051q-17 -10 -24 -19M776 1059q-16 -28 -24 -41M59 981q16 -12 26 -15" fill="none" stroke="#eeec52" stroke-width="3" stroke-dasharray="2.4 2.4" stroke-linecap="butt"/><path d="M1800 1001l0 -20M1801 1003l0 -26M1805 1010l-11 -18M1414 1042l-16 -6M1410 1042l-26 -3M1416 1042l-12 -10M1573 1062l22 -11M1588 1057l24 -17M1580 1060l20 -20M1555 1035l4 -22M1556 1032l-2 -19M1552 1043l9 -18M1047 1043l-19 -27M1045 1042l-12 -22M1060 1054l-23 -26M364 1047l-15 0M366 1046l-17 5M347 1056l-14 0M5 1041l-13 -8M21 1040l-21 -11M16 1040l-19 -6M879 1033l-24 -19M900 1041l-27 -13M892 1038l-23 -20M176 1063l-23 -14M184 1065l-25 -10M166 1061l-32 -15M1008 1057l17 -31M1014 1046l11 -32M1006 1060l5 -31M1816 999l-16 -14M1819 1000l-18 -17M1813 998l-10 -13M1036 1069l20 -20M1012 1075l27 -12M1004 1076l20 -15M1521 1011l-14 -17M1550 1023l-25 -16M1531 1015l-24 -21M67 918l9 -19M60 923l18 -15M57 925l9 -19M1906 1025l20 -13M1916 1023l21 -17M1920 1023l18 -12M803 1031l-11 -26M787 1010l-7 -26M802 1030l-8 -25M526 1044l-8 -23M529 1047l-11 -22M518 1035l-7 -18M24 1001l18 -14M37 995l19 -14M44 992l17 -20M43 979l20 -15M16 983l23 -11M40 979l27 -13M950 1059l35 -12M979 1060l35 -10M982 1060l36 -11M1653 1035l13 -12M1660 1031l5 -15M1651 1036l16 -14M1304 1029l9 -11M1290 1028l15 -5M1294 1028l12 -8M30 913l-9 -21M27 907l-14 -26M28 909l-1 -18M1216 1045l25 -21M1186 1058l25 -19M1181 1061l34 -20M1551 1020l-27 -19M1565 1030l-18 -26M1565 1029l-15 -24M1259 1034l19 -17M1285 1020l28 -22M1278 1023l17 -23M920 1054l-19 -17M914 1051l-10 -16M914 1051l-23 -16M156 1013l-2 -25M152 1007l-13 -20M160 1017l-8 -18M448 1061l11 -31M450 1054l9 -30M449 1056l13 -27M1617 1031l25 -16M1598 1033l22 -15M1601 1033l17 -15M148 1056l13 -15M165 1046l11 -20M164 1046l17 -16M677 1065l-30 -16M652 1059l-21 -14M653 1059l-32 -18M771 1023l20 -29M793 1005l18 -31M787 1009l19 -30M904 1021l11 -13M909 1018l22 -20M912 1016l9 -19M428 1035l7 -25M434 1026l15 -28M430 1032l7 -23M335 1044l-24 -4M312 1045l-23 -3M310 1045l-25 -10M1502 1051l15 -8M1499 1050l20 -11M1510 1052l20 -8M466 1042l-24 -1M467 1042l-17 -4M487 1038l-17 -4M1021 1052l-19 -19M1013 1047l-24 -21M1023 1053l-17 -23M1167 1061l-20 -20M1167 1061l-15 -22M1171 1065l-20 -17M1481 1021l17 -15M1462 1030l22 -22M1468 1027l24 -17M1459 1045l12 -15M1441 1053l12 -16M1458 1046l26 -19M1908 1085l22 -7M1940 1088l21 -1M1922 1086l28 -8M361 1020l-9 -27M351 1009l-16 -26M350 1008l-23 -24M230 1035l11 -14M214 1037l9 -10M215 1037l11 -13M1312 1008l-17 -11M1318 1010l-11 -13M1321 1011l-16 -20M266 1055l25 -29M276 1045l12 -32M265 1057l14 -27M1596 996l-28 -20M1610 999l-21 -12M1632 1005l-24 -14M242 1024l-22 -9M258 1025l-16 -12M252 1025l-16 -9M275 1063l-21 -17M272 1062l-23 -15M285 1065l-19 -11M1125 1011l23 -26M1122 1014l27 -33M1127 1009l18 -26M812 1070l11 -12M816 1069l24 -15M810 1070l21 -8M473 1028l-11 -5M472 1028l-10 -7M469 1029l-23 -7M1482 1003l-32 -22M1501 1011l-27 -17M1508 1014l-31 -21M914 1076l34 -4M930 1077l25 -8M931 1077l26 -7M320 1047l13 -16M325 1044l20 -20M324 1044l10 -17M1254 1033l-19 -8M1252 1033l-20 -13M1252 1032l-14 -9M185 1037l21 -13M163 1043l25 -18M169 1041l18 -10M627 1050l-13 -14M607 1048l-20 -16M611 1049l-12 -9M1810 993l34 -15M1809 993l24 -19M1813 992l32 -13M1436 1060l9 -14M1419 1067l13 -12M1422 1066l13 -11M375 1024l-17 -21M366 1017l-24 -28M363 1015l-22 -24M1877 952l-19 -24M1875 951l-22 -28M1862 943l-17 -23M1174 1080l-19 -9M1176 1080l-9 -4M1175 1080l-14 -5M775 1000l15 -28M783 987l9 -36M783 986l9 -33M522 1063l8 -21M520 1064l15 -26M516 1068l23 -23M1159 1020l13 -19M1159 1020l12 -21M1157 1021l17 -18M294 1068l-12 -18M290 1066l-13 -22M307 1074l-23 -18M606 1026l9 -10M599 1028l16 -10M597 1029l23 -12M1733 1012l21 -6M1750 1013l16 -10M1741 1013l23 -12M251 1039l-9 -14M249 1038l-23 -20M243 1034l-20 -17M-9 942l-14 -22M-8 943l-14 -18M14 952l-15 -18M1228 1008l-25 -26M1232 1012l-23 -27M1231 1011l-24 -26M460 1033l22 -23M465 1030l28 -18M482 1021l27 -24M1410 1030l-20 -27M1413 1033l-27 -28M1412 1031l-25 -32M1827 1067l15 -26M1840 1053l20 -22M1840 1053l15 -24M882 1055l20 -5M877 1055l24 -6M872 1055l24 -13M932 1063l-29 -26M923 1056l-22 -21M922 1055l-29 -20M484 1057l33 -9M512 1054l20 -8M509 1054l22 -15M1355 1026l16 -28M1352 1030l19 -27M1351 1031l26 -30M27 1055l-17 -15M19 1053l-25 -19M39 1059l-32 -14M1827 1022l31 -19M1833 1020l21 -18M1840 1018l19 -19M732 1044l8 -8M713 1045l23 -8M726 1045l20 -10M1555 1040l21 -12M1555 1040l21 -13M1542 1043l17 -7M751 1059l25 -13M758 1056l17 -17M759 1056l25 -16M278 1059l-10 -16M272 1056l-17 -17M290 1064l-11 -17M74 996l12 -9M66 996l16 -5M54 997l21 -11M244 1047l30 -8M225 1049l33 -9M223 1049l34 -6M557 1075l24 -14M560 1073l12 -21M565 1071l11 -17M317 1003l2 -23M318 1001l12 -23M311 1014l15 -31M15 930l15 -17M11 934l15 -24M9 936l14 -19M596 1025l-14 -17M604 1035l-10 -26M602 1033l-6 -18M971 1022l-4 -17M967 1015l-2 -19M965 1012l-11 -21M1237 1014l-12 -20M1237 1014l-3 -17M1230 1008l-5 -19M499 1082l19 -10M509 1081l20 -12M511 1081l18 -10M667 1032l13 -21M668 1030l13 -20M656 1042l16 -25M1368 1011l-29 -12M1383 1015l-33 -15M1390 1016l-31 -14M1431 1049l23 -16M1435 1048l11 -10M1430 1049l14 -9M961 1061l-13 -9M950 1059l-13 -16M948 1059l-27 -14M1437 1039l25 -15M1417 1044l17 -16M1420 1043l17 -10M415 1045l13 -21M421 1042l18 -14M411 1048l21 -22M1721 1068l23 -16M1724 1067l24 -13M1713 1072l25 -13M167 1074l-14 -2M167 1074l-20 -7M160 1077l-19 -5M834 1032l-1 -25M838 1038l-3 -20M845 1048l-14 -20M1954 947l8 -8M1960 949l20 -1M1953 947l23 -6M1319 1042l-19 -20M1309 1035l-12 -22M1312 1037l-21 -25M267 1021l-13 -12M258 1019l-9 -13M263 1020l-6 -17M186 1022l8 -11M187 1021l21 -13M187 1021l17 -9M1319 1017l9 -14M1310 1021l19 -13M1325 1014l20 -18M806 1065l-21 -33M787 1043l-12 -29M797 1054l-17 -34M1672 1071l21 0M1676 1073l18 0M1679 1075l15 -2M448 1079l16 -15M461 1071l20 -12M464 1070l19 -11M867 1085l36 -8M881 1086l24 -4M896 1087l33 -10M461 1078l33 -6M481 1079l26 -11M456 1078l24 -10M1236 1085l26 3M1244 1089l26 0M1236 1086l30 0M167 1034l32 -19M194 1028l26 -18M188 1029l20 -16M1621 1001l20 -21M1620 1002l17 -17M1632 997l26 -16M897 1059l-12 -25M893 1053l-3 -24M895 1055l-9 -21M1033 1026l20 -26M1021 1033l29 -26M1045 1019l23 -19M1570 1031l-6 -19M1571 1032l-9 -23M1576 1037l-18 -18M1013 1025l7 -11M1002 1031l8 -19M1006 1029l6 -16M920 1047l29 -27M924 1044l27 -22M899 1061l24 -28M72 989l7 -21M71 991l14 -30M67 998l16 -21M1268 1016l-24 -25M1273 1020l-21 -24M1292 1037l-22 -21M1344 1065l-24 0M1321 1079l-18 0M1340 1068l-14 6M1749 1059l-25 -18M1758 1061l-19 -16M1738 1055l-24 -19M1756 1059l11 -17M1759 1057l16 -14M1747 1066l20 -22M1448 1041l29 -19M1455 1037l19 -23M1472 1028l18 -22M1176 1067l20 -13M1173 1068l29 -8M1199 1064l19 -7M1093 1068l-9 -10M1105 1071l-13 -14M1093 1068l-11 -10M245 1082l33 4M228 1074l30 -1M224 1073l23 3M1672 1004l-23 -30M1685 1019l-21 -32M1672 1005l-15 -26M621 1069l23 -12M620 1069l26 -16M628 1067l20 -15M571 1050l14 -18M554 1061l19 -21M558 1059l29 -19M1425 1041l16 -31M1419 1052l19 -26M1418 1054l12 -34M1086 1034l17 -19M1073 1044l20 -15M1076 1041l10 -22M756 1030l28 -7M778 1035l18 -4M756 1030l16 -8M1690 1001l13 -26M1696 993l13 -24M1699 989l21 -31M1028 1018l24 -27M1021 1024l17 -25M1002 1038l25 -29M1158 1028l-18 -16M1169 1030l-28 -15M1150 1027l-27 -10M356 1070l-18 -10M342 1068l-18 -15M345 1069l-19 -11M379 1040l-27 -18M374 1038l-17 -22M374 1038l-21 -21M820 1050l-17 -25M823 1053l-9 -26M819 1049l-16 -21M353 1040l15 -12M328 1038l22 -6M340 1039l14 -4M475 988l14 -35M468 997l14 -34M475 988l17 -33M787 1035l22 -5M786 1034l21 -5M801 1039l27 0M706 1007l-11 -29M696 996l-15 -27M693 993l-21 -22M909 1076l-23 -10M902 1076l-30 -11M912 1076l-24 -12M1219 1032l11 -12M1223 1029l13 -17M1225 1028l23 -12M1865 977l13 -9M1882 975l23 -14M1874 976l8 -12M1258 1058l11 -19M1253 1061l18 -18M1263 1053l17 -25M406 1055l14 -19M394 1062l7 -18M397 1060l10 -13M1092 1062l-11 -9M1077 1062l-19 -4M1081 1062l-25 -9M731 1075l-13 -7M730 1075l-11 -12M722 1075l-15 -11M634 1022l15 -16M638 1020l10 -18M630 1025l6 -16M1692 1040l-20 -30M1689 1035l-17 -26M1688 1034l-21 -29M1143 1008l-16 -21M1148 1012l-5 -18M1142 1007l-10 -19M962 1032l9 -22M958 1035l14 -14M958 1035l8 -20M1421 1096l11 -6M1409 1090l9 -3M1416 1094l12 -6M-20 999l-6 -16M-13 1008l-16 -22M-12 1008l-14 -16M894 1065l9 -17M882 1069l12 -17M881 1069l10 -11M1239 1062l-19 -16M1253 1065l-16 -12M1251 1064l-12 -12M1251 1044l12 -14M1251 1044l6 -6M1251 1044l15 -8M1744 1011l20 -5M1742 1011l30 -12M1738 1011l27 -10M1657 957l-19 -26M1665 970l-12 -30M1665 972l-12 -31M493 1024l19 -5M495 1024l19 -11M490 1023l7 -4M1727 1064l-22 -22M1728 1064l-18 -23M1725 1063l-24 -20M1745 1008l28 -18M1739 1010l30 -21M1764 1002l30 -21M302 1062l-13 -6M285 1061l-19 -5M282 1060l-12 -11M1837 1022l-22 -2M1842 1022l-15 -12M1826 1023l-24 -11M1206 1009l-12 -20M1195 993l-15 -26M1200 1000l-4 -28M1120 1027l-10 -23M1125 1035l-12 -23M1121 1028l-9 -24M261 1032l-25 -24M272 1040l-23 -22M264 1034l-23 -28M633 1055l21 -17M636 1053l17 -19M632 1055l19 -15M694 1053l-19 -22M710 1059l-31 -14M698 1054l-27 -15M535 1021l-18 -22M554 1031l-23 -15M546 1026l-17 -20M1550 1022l-28 -5M1542 1023l-28 -7M1545 1022l-24 -6M903 1012l22 -24M905 1011l16 -27M908 1007l12 -31M311 1010l23 -26M318 1004l14 -31M311 1011l16 -31M751 1030l-28 -12M757 1032l-19 -17M726 1025l-33 -13M1554 1056l16 -21M1551 1057l21 -18M1558 1053l18 -21M1171 1031l-17 -20M1171 1030l-21 -15M1181 1035l-23 -18M924 1024l-18 -23M908 1016l-15 -21M906 1015l-20 -16M1170 1015l-14 -20M1156 1001l-9 -27M1157 1002l-15 -21M1041 1061l-22 -18M1032 1059l-20 -11M1029 1058l-22 -16M798 1002l0 -33M796 1012l3 -37M799 1000l7 -32M1514 1086l23 -8M1511 1085l27 -7M1532 1088l20 -2M1565 1012l20 -21M1562 1013l24 -13M1557 1014l18 -15M992 1064l-23 -18M976 1058l-25 -15M991 1063l-21 -21M645 1077l-34 -12M623 1077l-24 -11M641 1077l-33 -10M1748 1047l13 -31M1755 1038l11 -34M1764 1025l11 -32M1077 1044l14 -15M1081 1039l15 -23M1070 1051l16 -17M437 1023l16 -31M425 1039l17 -28M427 1037l10 -28M1058 1058l-15 -32M1058 1057l-19 -33M1061 1063l-7 -27M140 1039l-32 -14M144 1039l-28 -6M151 1040l-29 -10M613 1055l9 -21M597 1066l12 -22M604 1061l20 -22M1537 1028l-24 -29M1534 1025l-17 -25M1557 1046l-26 -27M1595 994l-11 -17M1597 995l-20 -12M1585 989l-14 -21M244 1026l15 -34M252 1012l9 -36M250 1016l14 -34M1313 1028l-21 -19M1326 1038l-18 -15M1326 1038l-16 -19M606 1010l-24 -20M591 1003l-24 -17M588 1002l-19 -23M244 1039l-12 -20M240 1038l-26 -13M244 1039l-19 -17M1640 1032l-23 -35M1643 1036l-19 -28M1651 1046l-14 -34M1341 1015l14 -25M1350 1006l12 -19M1348 1009l14 -19M571 1099l29 5M571 1099l18 1M575 1101l29 7M1176 1064l17 -13M1179 1063l20 -12M1170 1068l16 -18M1560 1005l21 -16M1554 1006l26 -14M1572 1003l13 -9M1066 1044l15 -9M1079 1044l17 -12M1080 1044l15 -10M1250 1036l-5 -34M1251 1048l-8 -33M1250 1033l-3 -41M715 1032l-18 -21M706 1026l-21 -19M706 1026l-13 -16M276 1068l24 -4M271 1066l13 -5M254 1059l27 2M349 1043l-24 -19M365 1051l-15 -19M361 1049l-24 -15M1884 1023l12 -14M1879 1026l8 -19M1882 1025l13 -20M1029 1061l-17 -23M1036 1064l-18 -22M1035 1064l-16 -23M630 1031l26 -14M620 1033l30 -11M634 1030l24 -16M1685 1019l-20 -32M1690 1025l-25 -28M1673 1006l-17 -24M-26 1042l-16 -20M-38 1038l-16 -14M-38 1038l-27 -19M1228 1060l-15 -9M1221 1058l-9 -8M1219 1058l-10 -15M72 935l31 -13M56 939l26 -18M41 941l26 -14M1729 1053l18 -23M1734 1051l17 -13M1743 1045l18 -23M535 1088l27 -2M533 1088l32 0M551 1093l25 -3M385 1034l25 -18M398 1029l25 -19M416 1022l31 -18M1228 1058l19 -21M1236 1052l16 -14M1239 1049l11 -22M1488 1021l13 -12M1485 1023l13 -12M1485 1023l14 -12M746 1051l-21 -21M749 1053l-12 -15M729 1043l-23 -14M1127 1070l12 -14M1133 1068l13 -11M1132 1068l8 -10M987 1038l-21 -22M1002 1047l-22 -26M999 1045l-16 -26M1049 1044l-14 -22M1038 1035l-15 -18M1035 1033l-18 -22M758 1029l-14 -24M752 1018l-16 -31M754 1022l-8 -28M78 970l17 -19M72 973l14 -19M79 969l15 -14" fill="none" stroke="#eef07a" stroke-width=".8" opacity=".9"/><g filter="url(#b1)" fill="#2a6a10" opacity=".45"><ellipse cx="1292" cy="1066" rx="6" ry="5" transform="rotate(5 1292 1066)"/><ellipse cx="1526" cy="1018" rx="3" ry="11" transform="rotate(-2 1526 1018)"/><ellipse cx="1057" cy="1055" rx="4" ry="6" transform="rotate(9 1057 1055)"/><ellipse cx="1869" cy="1021" rx="2" ry="9" transform="rotate(-33 1869 1021)"/><ellipse cx="1084" cy="1052" rx="6" ry="15" transform="rotate(12 1084 1052)"/><ellipse cx="1758" cy="1068" rx="2" ry="12" transform="rotate(15 1758 1068)"/><ellipse cx="743" cy="1077" rx="6" ry="9" transform="rotate(-27 743 1077)"/><ellipse cx="540" cy="1047" rx="4" ry="14" transform="rotate(-56 540 1047)"/><ellipse cx="1375" cy="1047" rx="4" ry="11" transform="rotate(-9 1375 1047)"/><ellipse cx="1127" cy="1053" rx="2" ry="5" transform="rotate(37 1127 1053)"/><ellipse cx="824" cy="1078" rx="3" ry="8" transform="rotate(-44 824 1078)"/><ellipse cx="55" cy="943" rx="6" ry="12" transform="rotate(-58 55 943)"/><ellipse cx="1271" cy="1050" rx="4" ry="13" transform="rotate(-25 1271 1050)"/><ellipse cx="1390" cy="1073" rx="3" ry="6" transform="rotate(-38 1390 1073)"/><ellipse cx="1628" cy="1055" rx="4" ry="5" transform="rotate(57 1628 1055)"/><ellipse cx="1319" cy="1065" rx="2" ry="12" transform="rotate(-11 1319 1065)"/><ellipse cx="1269" cy="1056" rx="5" ry="8" transform="rotate(21 1269 1056)"/><ellipse cx="1158" cy="1074" rx="6" ry="8" transform="rotate(-9 1158 1074)"/><ellipse cx="1392" cy="1063" rx="5" ry="9" transform="rotate(32 1392 1063)"/><ellipse cx="242" cy="1061" rx="4" ry="9" transform="rotate(-6 242 1061)"/><ellipse cx="1708" cy="1056" rx="3" ry="12" transform="rotate(49 1708 1056)"/><ellipse cx="1608" cy="1060" rx="6" ry="9" transform="rotate(-13 1608 1060)"/><ellipse cx="303" cy="1051" rx="2" ry="15" transform="rotate(-13 303 1051)"/><ellipse cx="1315" cy="1053" rx="2" ry="12" transform="rotate(31 1315 1053)"/><ellipse cx="1785" cy="1040" rx="2" ry="13" transform="rotate(-54 1785 1040)"/><ellipse cx="1076" cy="1049" rx="2" ry="7" transform="rotate(22 1076 1049)"/><ellipse cx="733" cy="1077" rx="4" ry="11" transform="rotate(10 733 1077)"/><ellipse cx="707" cy="1050" rx="6" ry="13" transform="rotate(38 707 1050)"/><ellipse cx="975" cy="1061" rx="3" ry="6" transform="rotate(-22 975 1061)"/><ellipse cx="265" cy="1052" rx="3" ry="7" transform="rotate(46 265 1052)"/><ellipse cx="1776" cy="1071" rx="5" ry="10" transform="rotate(49 1776 1071)"/><ellipse cx="72" cy="1009" rx="6" ry="5" transform="rotate(1 72 1009)"/><ellipse cx="1237" cy="1052" rx="4" ry="12" transform="rotate(-4 1237 1052)"/><ellipse cx="487" cy="1075" rx="2" ry="10" transform="rotate(40 487 1075)"/><ellipse cx="83" cy="1028" rx="6" ry="13" transform="rotate(13 83 1028)"/><ellipse cx="1812" cy="1057" rx="3" ry="13" transform="rotate(-36 1812 1057)"/><ellipse cx="1837" cy="1023" rx="5" ry="5" transform="rotate(-8 1837 1023)"/><ellipse cx="1037" cy="1075" rx="5" ry="9" transform="rotate(38 1037 1075)"/><ellipse cx="1346" cy="1043" rx="5" ry="12" transform="rotate(-38 1346 1043)"/><ellipse cx="417" cy="1061" rx="5" ry="13" transform="rotate(36 417 1061)"/><ellipse cx="1540" cy="1065" rx="4" ry="6" transform="rotate(-1 1540 1065)"/><ellipse cx="577" cy="1052" rx="5" ry="7" transform="rotate(-1 577 1052)"/><ellipse cx="1746" cy="1063" rx="2" ry="11" transform="rotate(9 1746 1063)"/><ellipse cx="863" cy="1065" rx="5" ry="8" transform="rotate(-16 863 1065)"/><ellipse cx="1310" cy="1067" rx="6" ry="12" transform="rotate(5 1310 1067)"/><ellipse cx="97" cy="1046" rx="2" ry="14" transform="rotate(-27 97 1046)"/><ellipse cx="249" cy="1046" rx="3" ry="7" transform="rotate(37 249 1046)"/><ellipse cx="786" cy="1072" rx="3" ry="15" transform="rotate(9 786 1072)"/><ellipse cx="1252" cy="1051" rx="2" ry="13" transform="rotate(26 1252 1051)"/><ellipse cx="10" cy="1006" rx="2" ry="12" transform="rotate(-25 10 1006)"/><ellipse cx="287" cy="1045" rx="3" ry="10" transform="rotate(-50 287 1045)"/><ellipse cx="1254" cy="1052" rx="6" ry="12" transform="rotate(-3 1254 1052)"/><ellipse cx="184" cy="1061" rx="4" ry="7" transform="rotate(-36 184 1061)"/><ellipse cx="253" cy="1050" rx="5" ry="12" transform="rotate(54 253 1050)"/><ellipse cx="192" cy="1062" rx="6" ry="8" transform="rotate(28 192 1062)"/><ellipse cx="881" cy="1074" rx="2" ry="5" transform="rotate(0 881 1074)"/><ellipse cx="1297" cy="1060" rx="2" ry="15" transform="rotate(-36 1297 1060)"/><ellipse cx="1178" cy="1057" rx="5" ry="8" transform="rotate(-15 1178 1057)"/><ellipse cx="506" cy="1054" rx="3" ry="7" transform="rotate(57 506 1054)"/><ellipse cx="1231" cy="1056" rx="6" ry="12" transform="rotate(-48 1231 1056)"/><ellipse cx="887" cy="1069" rx="5" ry="7" transform="rotate(13 887 1069)"/><ellipse cx="1157" cy="1071" rx="6" ry="8" transform="rotate(-24 1157 1071)"/><ellipse cx="106" cy="987" rx="6" ry="7" transform="rotate(43 106 987)"/><ellipse cx="161" cy="1057" rx="5" ry="6" transform="rotate(37 161 1057)"/><ellipse cx="1877" cy="972" rx="5" ry="5" transform="rotate(51 1877 972)"/><ellipse cx="1525" cy="1030" rx="2" ry="9" transform="rotate(-22 1525 1030)"/><ellipse cx="1787" cy="1066" rx="3" ry="6" transform="rotate(-16 1787 1066)"/><ellipse cx="126" cy="1072" rx="5" ry="12" transform="rotate(-52 126 1072)"/><ellipse cx="811" cy="1061" rx="2" ry="12" transform="rotate(9 811 1061)"/><ellipse cx="320" cy="1046" rx="6" ry="14" transform="rotate(9 320 1046)"/><ellipse cx="31" cy="967" rx="3" ry="9" transform="rotate(40 31 967)"/><ellipse cx="1910" cy="982" rx="5" ry="15" transform="rotate(36 1910 982)"/><ellipse cx="1737" cy="1019" rx="2" ry="5" transform="rotate(-37 1737 1019)"/><ellipse cx="233" cy="1056" rx="6" ry="9" transform="rotate(59 233 1056)"/><ellipse cx="684" cy="1055" rx="5" ry="14" transform="rotate(5 684 1055)"/><ellipse cx="246" cy="1062" rx="6" ry="7" transform="rotate(-45 246 1062)"/><ellipse cx="1016" cy="1046" rx="4" ry="5" transform="rotate(32 1016 1046)"/><ellipse cx="1588" cy="1039" rx="4" ry="8" transform="rotate(-3 1588 1039)"/><ellipse cx="775" cy="1053" rx="6" ry="6" transform="rotate(-9 775 1053)"/><ellipse cx="1299" cy="1064" rx="5" ry="7" transform="rotate(-18 1299 1064)"/><ellipse cx="241" cy="1051" rx="4" ry="10" transform="rotate(-21 241 1051)"/><ellipse cx="1551" cy="1044" rx="5" ry="15" transform="rotate(-37 1551 1044)"/><ellipse cx="1706" cy="1027" rx="3" ry="12" transform="rotate(50 1706 1027)"/><ellipse cx="468" cy="1077" rx="2" ry="11" transform="rotate(18 468 1077)"/><ellipse cx="133" cy="1051" rx="3" ry="6" transform="rotate(36 133 1051)"/><ellipse cx="446" cy="1072" rx="5" ry="6" transform="rotate(45 446 1072)"/><ellipse cx="817" cy="1055" rx="3" ry="5" transform="rotate(-31 817 1055)"/><ellipse cx="1908" cy="1019" rx="3" ry="12" transform="rotate(35 1908 1019)"/><ellipse cx="62" cy="1036" rx="2" ry="13" transform="rotate(12 62 1036)"/><ellipse cx="1191" cy="1060" rx="2" ry="5" transform="rotate(21 1191 1060)"/><ellipse cx="1589" cy="1046" rx="2" ry="13" transform="rotate(-22 1589 1046)"/><ellipse cx="1822" cy="1039" rx="2" ry="8" transform="rotate(26 1822 1039)"/><ellipse cx="909" cy="1071" rx="4" ry="11" transform="rotate(-48 909 1071)"/><ellipse cx="1884" cy="983" rx="2" ry="14" transform="rotate(58 1884 983)"/><ellipse cx="1313" cy="1053" rx="3" ry="5" transform="rotate(49 1313 1053)"/><ellipse cx="1010" cy="1076" rx="2" ry="7" transform="rotate(-7 1010 1076)"/><ellipse cx="114" cy="1067" rx="3" ry="9" transform="rotate(20 114 1067)"/><ellipse cx="854" cy="1071" rx="3" ry="5" transform="rotate(17 854 1071)"/><ellipse cx="195" cy="1076" rx="5" ry="5" transform="rotate(-42 195 1076)"/><ellipse cx="743" cy="1044" rx="3" ry="14" transform="rotate(-16 743 1044)"/><ellipse cx="218" cy="1078" rx="6" ry="13" transform="rotate(-18 218 1078)"/><ellipse cx="625" cy="1074" rx="2" ry="12" transform="rotate(-56 625 1074)"/><ellipse cx="950" cy="1054" rx="5" ry="6" transform="rotate(-3 950 1054)"/><ellipse cx="238" cy="1045" rx="5" ry="10" transform="rotate(33 238 1045)"/><ellipse cx="687" cy="1069" rx="4" ry="13" transform="rotate(57 687 1069)"/><ellipse cx="359" cy="1073" rx="5" ry="14" transform="rotate(-56 359 1073)"/><ellipse cx="202" cy="1076" rx="5" ry="8" transform="rotate(-10 202 1076)"/><ellipse cx="730" cy="1073" rx="4" ry="15" transform="rotate(-1 730 1073)"/><ellipse cx="748" cy="1056" rx="2" ry="11" transform="rotate(58 748 1056)"/><ellipse cx="339" cy="1058" rx="6" ry="13" transform="rotate(28 339 1058)"/></g><ellipse cx="185" cy="1020" rx="32" ry="16" fill="#e8200e"/><ellipse cx="265" cy="1016" rx="20" ry="14" fill="#e8200e"/><ellipse cx="680" cy="1018" rx="36" ry="13" fill="#e8200e"/><ellipse cx="1136" cy="1012" rx="54" ry="35" fill="#e8200e"/><ellipse cx="1518" cy="780" rx="9" ry="25" fill="#e8200e"/><ellipse cx="1518" cy="936" rx="10" ry="44" fill="#e8200e"/><ellipse cx="1829" cy="651" rx="9" ry="26" fill="#e8200e"/><ellipse cx="1914" cy="776" rx="8" ry="21" fill="#e8200e"/><ellipse cx="97" cy="936" rx="4" ry="8" fill="#e8200e"/><ellipse cx="1140" cy="1020" rx="30" ry="18" fill="#f53a1e" opacity=".8"/><path d="M1110 1030 V1079 M1168 1040 V1079 M430 1030 Q428 1060 436 1079" stroke="#2c5a1a" stroke-width="2.5" fill="none"/><path d="M370 1023 Q410 1038 447 1079 M412 1023 Q448 1052 441 1079" stroke="#6a4a22" stroke-width="2.6" fill="none"/><path d="M742 1023 Q738 1045 746 1062" stroke="#8a5a4a" stroke-width="7" fill="none" opacity=".8"/><path d="M215 1033 Q212 1060 220 1079 M360 1040 Q350 1060 362 1079 M590 1030 V1079 M905 1030 Q900 1060 912 1079" stroke="#2c6a14" stroke-width="2.4" fill="none"/></svg>
<svg width="0" height="0" style="left:0;top:0"><defs>
<linearGradient id="gBlue" x1="0" y1="0" x2="0" y2="1"><stop offset="0" stop-color="#9cc3ea"/><stop offset="1" stop-color="#4f86c6"/></linearGradient>
<linearGradient id="gFold" x1="0" y1="0" x2="0" y2="1"><stop offset="0" stop-color="#8db6e2"/><stop offset="1" stop-color="#4a7fbe"/></linearGradient>
<linearGradient id="gFlop" x1="0" y1="0" x2="0" y2="1"><stop offset="0" stop-color="#7aacf2"/><stop offset="1" stop-color="#2858d6"/></linearGradient>
<linearGradient id="gPaper" x1="0" y1="0" x2="1" y2="1"><stop offset="0" stop-color="#ffffff"/><stop offset="1" stop-color="#dcdcda"/></linearGradient>
<radialGradient id="gLens" cx=".4" cy=".35" r=".7"><stop offset="0" stop-color="#d9e8f8"/><stop offset="1" stop-color="#6f9fd8"/></radialGradient>
<radialGradient id="gLensG" cx=".4" cy=".35" r=".7"><stop offset="0" stop-color="#efefef"/><stop offset="1" stop-color="#b5b5b5"/></radialGradient>
<linearGradient id="gPen" x1="0" y1="0" x2="1" y2="1"><stop offset="0" stop-color="#f2d27a"/><stop offset="1" stop-color="#b8862c"/></linearGradient>
<linearGradient id="gOr" x1="0" y1="0" x2="1" y2="1"><stop offset="0" stop-color="#ffd27a"/><stop offset="1" stop-color="#f08a1c"/></linearGradient>
</defs></svg>
<div style="left:0px;top:0px;width:1918px;height:28px;background:linear-gradient(#f3f3f2,#e6e6e4);border-bottom:1px solid #bdbdbb"></div><div style="left:2px;top:0px;width:24px;height:27px;border:1px solid #b4b4b2;border-top-color:#9c9c9a;background:linear-gradient(#ffffff,#f3f3f2 60%,#e9e9e8)"></div><div style="left:28px;top:0px;width:24px;height:27px;border:1px solid #b4b4b2;border-top-color:#9c9c9a;background:linear-gradient(#ffffff,#f3f3f2 60%,#e9e9e8)"></div><div style="left:52px;top:0px;width:24px;height:27px;border:1px solid #b4b4b2;border-top-color:#9c9c9a;background:linear-gradient(#ffffff,#f3f3f2 60%,#e9e9e8)"></div><div style="left:80px;top:0px;width:24px;height:27px;border:1px solid #b4b4b2;border-top-color:#9c9c9a;background:linear-gradient(#ffffff,#f3f3f2 60%,#e9e9e8)"></div><div style="left:104px;top:0px;width:24px;height:27px;border:1px solid #b4b4b2;border-top-color:#9c9c9a;background:linear-gradient(#ffffff,#f3f3f2 60%,#e9e9e8)"></div><svg style="left:3.5px;top:2.5px" width="22" height="22" viewBox="0 0 24 24" ><circle cx="12" cy="12" r="11" fill="#2a4a8c"/><path d="M4 20 A11 11 0 0 1 1 12 A11 11 0 0 1 12 1 V12 H4Z" fill="#3a62b0"/><path d="M15.5 6 Q12 5.2 12 9 V15.5 Q12 19 8.5 18.5 M9 11.5 H15" stroke="#fff" stroke-width="2.2" fill="none" stroke-linecap="round"/></svg><svg style="left:31.5px;top:5.5px" width="17" height="16" viewBox="0 0 24 24" ><rect x="2" y="3" width="20" height="17" fill="#d9d9d2" stroke="#55554f" stroke-width="1"/><path d="M2 3 l4 0 l-4 4z M22 3 l-4 0 l4 4z M2 20 l4 0 l-4 -4z M22 20 l-4 0 l4 -4z" fill="#33332e"/><ellipse cx="12" cy="11.5" rx="7.5" ry="6" fill="#9a9a6c" stroke="#6a6a4a" stroke-width=".8"/></svg><svg style="left:55px;top:4px" width="19" height="19" viewBox="0 0 24 24" ><rect x="3" y="3" width="12" height="10" fill="#f4f6fa" stroke="#8fa3c0" stroke-width="1"/><rect x="3" y="3" width="12" height="2.6" fill="#5a7fb8"/><rect x="9" y="9" width="13" height="11" fill="#fbfcfe" stroke="#8fa3c0" stroke-width="1"/><rect x="9" y="9" width="13" height="2.6" fill="#5a7fb8"/></svg><svg style="left:83.5px;top:5.5px" width="17" height="17" viewBox="0 0 24 24" ><rect x="1.5" y="2.5" width="21" height="19" rx="1.5" fill="#d5d5d0" stroke="#4a4a46" stroke-width="1"/><rect x="3.5" y="4.5" width="17" height="14" fill="#20221f"/><path d="M5.5 7.5 l2.5 1.8 l-2.5 1.8 M9 12 h3" stroke="#e8e8e8" stroke-width="1" fill="none"/></svg><svg style="left:108px;top:6.5px" width="16.5" height="16.5" viewBox="0 0 24 24" ><circle cx="12" cy="12" r="10.5" fill="#e33b2e"/><path d="M12 12 L2.9 6.8 A10.5 10.5 0 0 0 7 21.2 Z" fill="#2fa84f"/><path d="M12 12 L7 21.2 A10.5 10.5 0 0 0 22.4 10.5 H12Z" fill="#f7c32e"/><path d="M12 12 L2.9 6.8 A10.5 10.5 0 0 0 2.2 8.4Z" fill="#2fa84f"/><circle cx="12" cy="12" r="4.9" fill="#fff"/><circle cx="12" cy="12" r="3.9" fill="#4a8af4"/></svg><div style="left:133px;top:0px;width:24px;height:27px;border:1px solid #b4b4b2;border-top-color:#9c9c9a;background:linear-gradient(#d6d5d3,#c9c8c6 50%,#d9d8d6);"></div><div class="t" style="left:133px;top:7px;height:18px;line-height:18px;font-size:14px;letter-spacing:-1px;width:24px;text-align:center;color:#222"><span class="L" style="font-size:15px;width:9.00px;transform:scaleX(0.7778);margin-right:-2.00px">1</span></div><div style="left:158px;top:0px;width:24px;height:27px;border:1px solid #b4b4b2;border-top-color:#9c9c9a;background:linear-gradient(#ffffff,#f3f3f2 60%,#ececeb);"></div><div class="t" style="left:158px;top:7px;height:18px;line-height:18px;font-size:14px;letter-spacing:-1px;width:24px;text-align:center;color:#222"><span class="L" style="font-size:15px;width:9.00px;transform:scaleX(0.7778);margin-right:-2.00px">2</span></div><div style="left:183px;top:0px;width:24px;height:27px;border:1px solid #b4b4b2;border-top-color:#9c9c9a;background:linear-gradient(#ffffff,#f3f3f2 60%,#ececeb);"></div><div class="t" style="left:183px;top:7px;height:18px;line-height:18px;font-size:14px;letter-spacing:-1px;width:24px;text-align:center;color:#222"><span class="L" style="font-size:15px;width:9.00px;transform:scaleX(0.7778);margin-right:-2.00px">3</span></div><div style="left:208px;top:0px;width:24px;height:27px;border:1px solid #b4b4b2;border-top-color:#9c9c9a;background:linear-gradient(#ffffff,#f3f3f2 60%,#ececeb);"></div><div class="t" style="left:208px;top:7px;height:18px;line-height:18px;font-size:14px;letter-spacing:-1px;width:24px;text-align:center;color:#222"><span class="L" style="font-size:15px;width:9.00px;transform:scaleX(0.7778);margin-right:-2.00px">4</span></div><div style="left:237px;top:0px;width:373px;height:27px;border:1px solid #b0afad;border-top-color:#9c9c9a;background:linear-gradient(#ffffff 0%,#fbfbfb 55%,#ebebea 100%)"></div><svg style="left:241px;top:7px" width="16" height="14" viewBox="0 0 24 20" ><rect x="1.5" y="5" width="19" height="13" fill="#e8e8ee" stroke="#8a8aa0" stroke-width="1"/><path d="M2 9 Q8 4 13 9 T21 8" stroke="#6a6a9a" stroke-width="1.2" fill="none"/><rect x="5" y="2" width="17" height="12" fill="none" stroke="#b0b0c0" stroke-width=".8"/></svg><div style="left:258px;top:0px;width:349px;height:27px;overflow:hidden"><div class="t" style="left:0px;top:7px;height:18px;line-height:18px;font-size:14px;letter-spacing:-1px;color:#1c1c1c"><span class="L" style="font-size:14.5px;width:374.10px;transform:scaleX(0.8046);margin-right:-73.10px">lagarto@power.interq.or.jp - Sylpheed 3.5.1</span></div></div><div style="left:612px;top:0px;width:373px;height:27px;border:1px solid #b0afad;border-top-color:#9c9c9a;background:linear-gradient(#ffffff 0%,#fbfbfb 55%,#ebebea 100%)"></div><svg style="left:614px;top:6px" width="17" height="17" viewBox="0 0 24 24" ><circle cx="12" cy="12" r="10.5" fill="#f3a21a"/><path d="M12 1.5 A10.5 10.5 0 0 1 12 22.5 A10.5 10.5 0 0 1 3 6 Q6 10 9 8 Q8 5 12 4Z" fill="#e8501a"/><circle cx="11.5" cy="12" r="5.6" fill="#3a3fa8"/><path d="M8 9 Q12 8 14 11 Q12 15 8 14Z" fill="#6a7ae0"/></svg><div style="left:633px;top:0px;width:349px;height:27px;overflow:hidden"><div class="t" style="left:0px;top:7px;height:18px;line-height:18px;font-size:14px;letter-spacing:-1px;color:#1c1c1c">【<span class="L" style="font-size:14.5px;width:52.20px;transform:scaleX(0.8046);margin-right:-10.20px">QCAD-4</span>】<span class="L" style="font-size:14.5px;width:34.80px;transform:scaleX(0.8046);margin-right:-6.80px">QCAD</span>の部品ライブラリについて。<span class="L" style="font-size:14.5px;width:26.10px;transform:scaleX(0.8046);margin-right:-5.10px"> | </span>無料<span class="L" style="font-size:14.5px;width:43.50px;transform:scaleX(0.8046);margin-right:-8.50px">CA...</span></div></div><div style="left:986px;top:0px;width:373px;height:27px;border:1px solid #9a9997;background:linear-gradient(#bfbebc 0%,#cfcecc 45%,#d9d8d6 100%);box-shadow:inset 0 1px 2px rgba(0,0,0,.25)"></div><svg style="left:989px;top:7px" width="15" height="15" viewBox="0 0 24 24" ><g transform="scale(1)"><path d="M12 1.5 L22.5 12 L12 22.5 L1.5 12Z" fill="url(#gOr)" stroke="#d6781a" stroke-width="1.4" stroke-linejoin="round"/><path d="M12 4 L20 12 L12 12 L4 12Z" fill="#fff" opacity=".35"/></g></svg><div style="left:1007px;top:0px;width:349px;height:27px;overflow:hidden"><div class="t" style="left:0px;top:7px;height:18px;line-height:18px;font-size:14px;letter-spacing:-1px;color:#1c1c1c">ライブラリブラウザ</div></div><div style="left:1360px;top:0px;width:374px;height:27px;border:1px solid #b0afad;border-top-color:#9c9c9a;background:linear-gradient(#ffffff 0%,#fbfbfb 55%,#ebebea 100%)"></div><svg style="left:1363px;top:7px" width="15" height="15" viewBox="0 0 24 24" ><g transform="scale(1)"><path d="M12 1.5 L22.5 12 L12 22.5 L1.5 12Z" fill="url(#gOr)" stroke="#d6781a" stroke-width="1.4" stroke-linejoin="round"/><path d="M12 4 L20 12 L12 12 L4 12Z" fill="#fff" opacity=".35"/></g></svg><div style="left:1381px;top:0px;width:350px;height:27px;overflow:hidden"><div class="t" style="left:0px;top:7px;height:18px;line-height:18px;font-size:14px;letter-spacing:-1px;color:#1c1c1c">無題<span class="L" style="font-size:14.5px;width:69.60px;transform:scaleX(0.8046);margin-right:-13.60px">1 - QCAD</span></div></div><div class="t" style="left:1750px;top:7px;height:18px;line-height:18px;font-size:14px;letter-spacing:-1px;color:#4a4aa8;font-weight:bold"><span class="L" style="font-size:16px;width:9.60px;transform:scaleX(0.9375);margin-right:-0.60px">A</span></div><svg style="left:1767px;top:4px" width="21" height="19" viewBox="0 0 24 22" ><rect x="2" y="5" width="19" height="14" fill="#e8e8f0" stroke="#707088" stroke-width="1.2"/><path d="M2 12 Q8 4 14 9 T22 6 M4 16 Q10 12 20 15" stroke="#5a5a9a" stroke-width="1.2" fill="none"/></svg><div style="left:1792px;top:4px;width:20px;height:20px;background:#000"></div><div style="left:1799px;top:20px;width:12px;height:3px;background:linear-gradient(90deg,#1a5a8a,#4aa0d0)"></div><svg style="left:1816px;top:7px" width="15" height="15" viewBox="0 0 24 24" ><path d="M2 9 L12 2 L22 9 V21 H2Z" fill="#b9b9b5" stroke="#7c7c78" stroke-width="1.2"/><path d="M2 21 L12 12 L22 21" fill="none" stroke="#7c7c78" stroke-width="1.2"/><ellipse cx="12" cy="11" rx="4" ry="3" fill="#8a8a86"/></svg><div class="t" style="left:1836px;top:7px;height:18px;line-height:18px;font-size:14px;letter-spacing:-1px;color:#222"><span class="L" style="font-size:14.5px;width:17.40px;transform:scaleX(0.8046);margin-right:-3.40px">13</span>時<span class="L" style="font-size:14.5px;width:17.40px;transform:scaleX(0.8046);margin-right:-3.40px">44</span>分<span class="L" style="font-size:14.5px;width:17.40px;transform:scaleX(0.8046);margin-right:-3.40px">33</span>秒</div>
<div style="left:100px;top:52px;width:1413px;height:972px;background:#efebe7;border-radius:5px 5px 0 0;border:1px solid #3a62a0;border-bottom-color:#55606c;box-shadow:0 0 0 0 #000"></div><div style="left:101px;top:53px;width:1411px;height:23px;border-radius:4px 4px 0 0;background:linear-gradient(#efeeed,#e3e2e0 45%,#d2d0ce);border-bottom:1px solid #a39f9b"></div><svg style="left:106px;top:58px" width="15" height="15" viewBox="0 0 24 24" ><g transform="scale(1)"><path d="M12 1.5 L22.5 12 L12 22.5 L1.5 12Z" fill="url(#gOr)" stroke="#d6781a" stroke-width="1.4" stroke-linejoin="round"/><path d="M12 4 L20 12 L12 12 L4 12Z" fill="#fff" opacity=".35"/></g></svg><div class="t" style="left:748px;top:58px;height:16px;line-height:16px;font-size:14px;letter-spacing:-1px;color:#5c5a58">無題<span class="L" style="font-size:14.5px;width:69.60px;transform:scaleX(0.8046);margin-right:-13.60px">1 - QCAD</span></div><div style="left:1455px;top:57px;width:15px;height:15px;border:1px solid #8c8986;border-radius:4px;background:linear-gradient(#fbfbfa,#e6e4e1)"></div><svg style="left:1455px;top:57px" width="15" height="15" viewBox="0 0 15 15" ><path d="M4 10.5 h7" stroke="#444" stroke-width="2"/></svg><div style="left:1474px;top:57px;width:15px;height:15px;border:1px solid #8c8986;border-radius:4px;background:linear-gradient(#fbfbfa,#e6e4e1)"></div><svg style="left:1474px;top:57px" width="15" height="15" viewBox="0 0 15 15" ><rect x="4.2" y="4.2" width="6.6" height="6.6" fill="none" stroke="#444" stroke-width="1.2"/><path d="M4 4.6 h7" stroke="#444" stroke-width="2"/></svg><div style="left:1493px;top:57px;width:15px;height:15px;border:1px solid #8c8986;border-radius:4px;background:linear-gradient(#fbfbfa,#e6e4e1)"></div><svg style="left:1493px;top:57px" width="15" height="15" viewBox="0 0 15 15" ><path d="M4.2 4.2 L10.8 10.8 M10.8 4.2 L4.2 10.8" stroke="#444" stroke-width="2"/></svg><div style="left:101px;top:76px;width:1411px;height:20px;background:#eeeae6;border-bottom:1px solid #d9d5d0"></div><div class="t" style="left:113px;top:80px;height:17px;line-height:17px;font-size:13px;letter-spacing:-1px"><span class="L" style="text-decoration:underline;font-size:13px;width:7.80px;transform:scaleX(0.7692);margin-right:-1.80px">F</span><span class="L" style="font-size:13px;width:7.80px;transform:scaleX(0.7692);margin-right:-1.80px"> </span>ファイル</div><div class="t" style="left:187px;top:80px;height:17px;line-height:17px;font-size:13px;letter-spacing:-1px"><span class="L" style="text-decoration:underline;font-size:13px;width:7.80px;transform:scaleX(0.7692);margin-right:-1.80px">E</span><span class="L" style="font-size:13px;width:7.80px;transform:scaleX(0.7692);margin-right:-1.80px"> </span>編集</div><div class="t" style="left:237px;top:80px;height:17px;line-height:17px;font-size:13px;letter-spacing:-1px"><span class="L" style="text-decoration:underline;font-size:13px;width:7.80px;transform:scaleX(0.7692);margin-right:-1.80px">V</span><span class="L" style="font-size:13px;width:7.80px;transform:scaleX(0.7692);margin-right:-1.80px"> </span>ビュー</div><div class="t" style="left:299px;top:80px;height:17px;line-height:17px;font-size:13px;letter-spacing:-1px"><span class="L" style="text-decoration:underline;font-size:13px;width:7.80px;transform:scaleX(0.7692);margin-right:-1.80px">S</span><span class="L" style="font-size:13px;width:7.80px;transform:scaleX(0.7692);margin-right:-1.80px"> </span>選択</div><div class="t" style="left:349px;top:80px;height:17px;line-height:17px;font-size:13px;letter-spacing:-1px"><span class="L" style="text-decoration:underline;font-size:13px;width:7.80px;transform:scaleX(0.7692);margin-right:-1.80px">D</span><span class="L" style="font-size:13px;width:7.80px;transform:scaleX(0.7692);margin-right:-1.80px"> </span>描画</div><div class="t" style="left:399px;top:80px;height:17px;line-height:17px;font-size:13px;letter-spacing:-1px"><span class="L" style="text-decoration:underline;font-size:13px;width:7.80px;transform:scaleX(0.7692);margin-right:-1.80px">i</span><span class="L" style="font-size:13px;width:7.80px;transform:scaleX(0.7692);margin-right:-1.80px"> </span>寸法</div><div class="t" style="left:449px;top:80px;height:17px;line-height:17px;font-size:13px;letter-spacing:-1px"><span class="L" style="text-decoration:underline;font-size:13px;width:7.80px;transform:scaleX(0.7692);margin-right:-1.80px">M</span><span class="L" style="font-size:13px;width:7.80px;transform:scaleX(0.7692);margin-right:-1.80px"> </span>修正</div><div class="t" style="left:499px;top:80px;height:17px;line-height:17px;font-size:13px;letter-spacing:-1px"><span class="L" style="text-decoration:underline;font-size:13px;width:7.80px;transform:scaleX(0.7692);margin-right:-1.80px">S</span><span class="L" style="font-size:13px;width:7.80px;transform:scaleX(0.7692);margin-right:-1.80px"> </span>スナップ</div><div class="t" style="left:573px;top:80px;height:17px;line-height:17px;font-size:13px;letter-spacing:-1px"><span class="L" style="text-decoration:underline;font-size:13px;width:7.80px;transform:scaleX(0.7692);margin-right:-1.80px">I</span><span class="L" style="font-size:13px;width:7.80px;transform:scaleX(0.7692);margin-right:-1.80px"> </span>情報</div><div class="t" style="left:623px;top:80px;height:17px;line-height:17px;font-size:13px;letter-spacing:-1px"><span class="L" style="text-decoration:underline;font-size:13px;width:7.80px;transform:scaleX(0.7692);margin-right:-1.80px">L</span><span class="L" style="font-size:13px;width:7.80px;transform:scaleX(0.7692);margin-right:-1.80px"> </span>画層</div><div class="t" style="left:673px;top:80px;height:17px;line-height:17px;font-size:13px;letter-spacing:-1px"><span class="L" style="text-decoration:underline;font-size:13px;width:7.80px;transform:scaleX(0.7692);margin-right:-1.80px">B</span><span class="L" style="font-size:13px;width:7.80px;transform:scaleX(0.7692);margin-right:-1.80px"> </span>ブロック</div><div class="t" style="left:747px;top:80px;height:17px;line-height:17px;font-size:13px;letter-spacing:-1px"><span class="L" style="text-decoration:underline;font-size:13px;width:7.80px;transform:scaleX(0.7692);margin-right:-1.80px">W</span><span class="L" style="font-size:13px;width:7.80px;transform:scaleX(0.7692);margin-right:-1.80px"> </span>ウィンドウ</div><div class="t" style="left:833px;top:80px;height:17px;line-height:17px;font-size:13px;letter-spacing:-1px"><span class="L" style="text-decoration:underline;font-size:13px;width:7.80px;transform:scaleX(0.7692);margin-right:-1.80px">M</span><span class="L" style="font-size:13px;width:7.80px;transform:scaleX(0.7692);margin-right:-1.80px"> </span>雑多</div><div class="t" style="left:883px;top:80px;height:17px;line-height:17px;font-size:13px;letter-spacing:-1px"><span class="L" style="text-decoration:underline;font-size:13px;width:7.80px;transform:scaleX(0.7692);margin-right:-1.80px">H</span><span class="L" style="font-size:13px;width:7.80px;transform:scaleX(0.7692);margin-right:-1.80px"> </span>ヘルプ</div><div style="left:101px;top:97px;width:1411px;height:36px;background:#f1eeea;border-bottom:1px solid #cdc9c4"></div><svg style="left:106px;top:104px" width="5" height="22"><rect x="0" y="0" width="1" height="1" fill="#b3afaa"/><rect x="0" y="3" width="1" height="1" fill="#b3afaa"/><rect x="0" y="6" width="1" height="1" fill="#b3afaa"/><rect x="0" y="9" width="1" height="1" fill="#b3afaa"/><rect x="0" y="12" width="1" height="1" fill="#b3afaa"/><rect x="0" y="15" width="1" height="1" fill="#b3afaa"/><rect x="0" y="18" width="1" height="1" fill="#b3afaa"/><rect x="0" y="21" width="1" height="1" fill="#b3afaa"/><rect x="3" y="0" width="1" height="1" fill="#b3afaa"/><rect x="3" y="3" width="1" height="1" fill="#b3afaa"/><rect x="3" y="6" width="1" height="1" fill="#b3afaa"/><rect x="3" y="9" width="1" height="1" fill="#b3afaa"/><rect x="3" y="12" width="1" height="1" fill="#b3afaa"/><rect x="3" y="15" width="1" height="1" fill="#b3afaa"/><rect x="3" y="18" width="1" height="1" fill="#b3afaa"/><rect x="3" y="21" width="1" height="1" fill="#b3afaa"/></svg><div class="pbtn" style="left:116px;top:100px;width:29px;height:29px;"></div><svg style="left:118.5px;top:102px" width="24" height="24" viewBox="0 0 24 24" ><path d="M8 4 L8 18 L11.2 15 L13.6 20.5 L15.8 19.5 L13.4 14.2 L17.8 14 Z" fill="#fff" stroke="#666" stroke-width="1.2" stroke-linejoin="round"/></svg><svg style="left:165px;top:104px" width="5" height="22"><rect x="0" y="0" width="1" height="1" fill="#b3afaa"/><rect x="0" y="3" width="1" height="1" fill="#b3afaa"/><rect x="0" y="6" width="1" height="1" fill="#b3afaa"/><rect x="0" y="9" width="1" height="1" fill="#b3afaa"/><rect x="0" y="12" width="1" height="1" fill="#b3afaa"/><rect x="0" y="15" width="1" height="1" fill="#b3afaa"/><rect x="0" y="18" width="1" height="1" fill="#b3afaa"/><rect x="0" y="21" width="1" height="1" fill="#b3afaa"/><rect x="3" y="0" width="1" height="1" fill="#b3afaa"/><rect x="3" y="3" width="1" height="1" fill="#b3afaa"/><rect x="3" y="6" width="1" height="1" fill="#b3afaa"/><rect x="3" y="9" width="1" height="1" fill="#b3afaa"/><rect x="3" y="12" width="1" height="1" fill="#b3afaa"/><rect x="3" y="15" width="1" height="1" fill="#b3afaa"/><rect x="3" y="18" width="1" height="1" fill="#b3afaa"/><rect x="3" y="21" width="1" height="1" fill="#b3afaa"/></svg><svg style="left:176px;top:102px" width="24" height="24" viewBox="0 0 24 24" ><path d="M4.5 2.5 H19.5 V21.5 H4.5Z" fill="url(#gPaper)" stroke="#b9b9b5" stroke-width="1"/><circle cx="18.5" cy="4.5" r="4.2" fill="#f7ef5a" opacity=".55"/><circle cx="18.5" cy="4.5" r="2.3" fill="#f4e92a"/></svg><svg style="left:206px;top:102px" width="24" height="24" viewBox="0 0 24 24" ><path d="M2.5 3.5 H9.5 L11 5.5 H21 V19 H2.5Z" fill="#5f83b4" stroke="#46699a" stroke-width=".7"/><path d="M4.5 6.5 H19.5 V15 H4.5Z" fill="#f2f2ef"/><path d="M5 8 H20 V16 H5Z" fill="#dcdcd8"/><path d="M.8 9.8 H23.2 L21 21.2 H3Z" fill="url(#gFold)" stroke="#3f6ea8" stroke-width=".8"/><path d="M1.8 10.8 H22.2" stroke="#b9d4f0" stroke-width=".9"/></svg><div style="left:238px;top:103px;width:1px;height:23px;background:#d0ccc7"></div><div style="left:239px;top:103px;width:1px;height:23px;background:#fbfaf9"></div><svg style="left:243px;top:102px" width="24" height="24" viewBox="0 0 24 24" ><rect x="2.2" y="2.2" width="19.6" height="19.6" rx="2.4" fill="url(#gFlop)" stroke="#2446b0" stroke-width="1"/><rect x="5.2" y="3.2" width="13.6" height="9" fill="#f6f8fc"/><rect x="6.5" y="14.8" width="11" height="7" fill="#e4eaf6"/><rect x="8" y="16.2" width="3.2" height="4.6" fill="#2a55c0"/></svg><svg style="left:273px;top:102px" width="24" height="24" viewBox="0 0 24 24" ><rect x="2.2" y="2.2" width="19.6" height="19.6" rx="2.4" fill="url(#gFlop)" stroke="#2446b0" stroke-width="1"/><rect x="5.2" y="3.2" width="13.6" height="9" fill="#f6f8fc"/><rect x="6.5" y="14.8" width="11" height="7" fill="#e4eaf6"/><rect x="8" y="16.2" width="3.2" height="4.6" fill="#2a55c0"/><g transform="translate(6,-1) scale(.75)"><g transform="scale(1)"><path d="M3 21 L5.2 15.2 L17.5 2.9 Q19 1.8 20.6 3.4 Q22.2 5 21.1 6.5 L8.8 18.8 Z" fill="#e9bd55" stroke="#b07d22" stroke-width=".9" stroke-linejoin="round"/><path d="M17.5 2.9 Q19 1.8 20.6 3.4 Q22.2 5 21.1 6.5 L19 8.6 L15.4 5 Z" fill="#e0452c"/><path d="M3 21 L4.2 17.9 L6.1 19.8 Z" fill="#5a4a2a"/></g></g></svg><div style="left:305px;top:103px;width:1px;height:23px;background:#d0ccc7"></div><div style="left:306px;top:103px;width:1px;height:23px;background:#fbfaf9"></div><svg style="left:310px;top:102px" width="24" height="24" viewBox="0 0 24 24" ><rect x="1.5" y="10.5" width="21" height="9.5" rx="2.2" fill="#c4c9cf" stroke="#8a9098" stroke-width=".8"/><rect x="5" y="3" width="14" height="8.5" fill="#f4f4f2" stroke="#a0a4a8" stroke-width=".7"/><rect x="4" y="16.5" width="16" height="5" rx="1" fill="#e2e5e8" stroke="#9aa0a6" stroke-width=".6"/><circle cx="9.5" cy="8" r="5" fill="#b4cfee" stroke="#6a8cb8" stroke-width="1.5"/><circle cx="8.3" cy="6.8" r="2" fill="#e4f0fc" opacity=".8"/><path d="M13 11.5 L19 16.5" stroke="#7c8794" stroke-width="2.6" stroke-linecap="round"/></svg><svg style="left:346px;top:104px" width="5" height="22"><rect x="0" y="0" width="1" height="1" fill="#b3afaa"/><rect x="0" y="3" width="1" height="1" fill="#b3afaa"/><rect x="0" y="6" width="1" height="1" fill="#b3afaa"/><rect x="0" y="9" width="1" height="1" fill="#b3afaa"/><rect x="0" y="12" width="1" height="1" fill="#b3afaa"/><rect x="0" y="15" width="1" height="1" fill="#b3afaa"/><rect x="0" y="18" width="1" height="1" fill="#b3afaa"/><rect x="0" y="21" width="1" height="1" fill="#b3afaa"/><rect x="3" y="0" width="1" height="1" fill="#b3afaa"/><rect x="3" y="3" width="1" height="1" fill="#b3afaa"/><rect x="3" y="6" width="1" height="1" fill="#b3afaa"/><rect x="3" y="9" width="1" height="1" fill="#b3afaa"/><rect x="3" y="12" width="1" height="1" fill="#b3afaa"/><rect x="3" y="15" width="1" height="1" fill="#b3afaa"/><rect x="3" y="18" width="1" height="1" fill="#b3afaa"/><rect x="3" y="21" width="1" height="1" fill="#b3afaa"/></svg><svg style="left:356px;top:102px" width="24" height="24" viewBox="0 0 24 24" ><path d="M6.4 11.6 A7.2 7.2 0 1 1 9.8 19.8" fill="none" stroke="#a9a9a7" stroke-width="4.2"/><path d="M.8 5.2 L2.2 15.6 L12.2 12.8 Z" fill="#a9a9a7"/></svg><svg style="left:386px;top:102px" width="24" height="24" viewBox="0 0 24 24" ><g transform="translate(24,0) scale(-1,1)"><path d="M6.4 11.6 A7.2 7.2 0 1 1 9.8 19.8" fill="none" stroke="#a9a9a7" stroke-width="4.2"/><path d="M.8 5.2 L2.2 15.6 L12.2 12.8 Z" fill="#a9a9a7"/></g></svg><div style="left:418px;top:103px;width:1px;height:23px;background:#d0ccc7"></div><div style="left:419px;top:103px;width:1px;height:23px;background:#fbfaf9"></div><svg style="left:423px;top:102px" width="24" height="24" viewBox="0 0 24 24" ><g transform="scale(1)"><path d="M3 21 L5.2 15.2 L17.5 2.9 Q19 1.8 20.6 3.4 Q22.2 5 21.1 6.5 L8.8 18.8 Z" fill="#d9d9d7" stroke="#a9a9a7" stroke-width=".9" stroke-linejoin="round"/><path d="M17.5 2.9 Q19 1.8 20.6 3.4 Q22.2 5 21.1 6.5 L19 8.6 L15.4 5 Z" fill="#c4c4c2"/><path d="M3 21 L4.2 17.9 L6.1 19.8 Z" fill="#5a4a2a"/></g></svg><div style="left:455px;top:103px;width:1px;height:23px;background:#d0ccc7"></div><div style="left:456px;top:103px;width:1px;height:23px;background:#fbfaf9"></div><svg style="left:459px;top:102px" width="24" height="24" viewBox="0 0 24 24" ><path d="M16 2.5 L9.5 15 M8.5 5 L14.5 15.5" stroke="#b4b4b2" stroke-width="2" fill="none" stroke-linecap="round"/><ellipse cx="7.5" cy="17.5" rx="2.6" ry="3.2" fill="none" stroke="#a4a4a2" stroke-width="1.5"/><ellipse cx="15.5" cy="18" rx="2.4" ry="3" fill="none" stroke="#a4a4a2" stroke-width="1.5"/><path d="M1.5 20 h4 M3.5 18 v4" stroke="#555" stroke-width="1"/></svg><svg style="left:490px;top:102px" width="24" height="24" viewBox="0 0 24 24" ><path d="M4 2.5 H15 V16 H4Z" fill="#f6f6f5" stroke="#d2d2d0" stroke-width=".9"/><path d="M8.5 7 H20 V21.5 H8.5Z" fill="#ececea" stroke="#cfcfcd" stroke-width=".9"/><path d="M10.5 10.5 h7.5 M10.5 13 h7.5 M10.5 15.5 h7.5" stroke="#dcdcda" stroke-width="1"/><path d="M2 20 h4 M4 18 v4" stroke="#666" stroke-width="1"/></svg><svg style="left:520px;top:102px" width="24" height="24" viewBox="0 0 24 24" ><rect x="3.5" y="4" width="17" height="18" rx="1.5" fill="#c79a5a" stroke="#a87a3a" stroke-width="1"/><rect x="6" y="6.5" width="12" height="13" fill="#e8e8e6" stroke="#c2c2c0" stroke-width=".6"/><rect x="8.5" y="1.8" width="7" height="4.5" rx="1" fill="#9a9a98" stroke="#777" stroke-width=".7"/><path d="M14 19.5 L18 15.5 V19.5Z" fill="#9a9a98"/></svg><svg style="left:557px;top:104px" width="5" height="22"><rect x="0" y="0" width="1" height="1" fill="#b3afaa"/><rect x="0" y="3" width="1" height="1" fill="#b3afaa"/><rect x="0" y="6" width="1" height="1" fill="#b3afaa"/><rect x="0" y="9" width="1" height="1" fill="#b3afaa"/><rect x="0" y="12" width="1" height="1" fill="#b3afaa"/><rect x="0" y="15" width="1" height="1" fill="#b3afaa"/><rect x="0" y="18" width="1" height="1" fill="#b3afaa"/><rect x="0" y="21" width="1" height="1" fill="#b3afaa"/><rect x="3" y="0" width="1" height="1" fill="#b3afaa"/><rect x="3" y="3" width="1" height="1" fill="#b3afaa"/><rect x="3" y="6" width="1" height="1" fill="#b3afaa"/><rect x="3" y="9" width="1" height="1" fill="#b3afaa"/><rect x="3" y="12" width="1" height="1" fill="#b3afaa"/><rect x="3" y="15" width="1" height="1" fill="#b3afaa"/><rect x="3" y="18" width="1" height="1" fill="#b3afaa"/><rect x="3" y="21" width="1" height="1" fill="#b3afaa"/></svg><svg style="left:566px;top:102px" width="24" height="24" viewBox="0 0 24 24" ><path d="M5 21 H19" stroke="#e0302a" stroke-width="1.4"/><path d="M5 18.5 L7 13.5 L15.5 3.2 Q17.5 2 19 3.8 Q20.2 5.6 18.8 7 L10 17 Z" fill="#e23a30" stroke="#a8201a" stroke-width=".8"/><path d="M5 18.5 L5.9 16.2 L7.4 17.7Z" fill="#5a1a16"/><path d="M14.5 4.4 l3.4 3.4" stroke="#f4a09a" stroke-width="1"/></svg><svg style="left:596px;top:102px" width="24" height="24" viewBox="0 0 24 24" ><rect x="1" y="4.5" width="22" height="16" fill="#0a0a96" stroke="#2a2ab6" stroke-width=".8"/><path d="M4 17.5 H19.5 V8 Z" fill="none" stroke="#c9c9ff" stroke-width="1.2" stroke-dasharray="2.4 1.8"/></svg><svg style="left:626px;top:102px" width="24" height="24" viewBox="0 0 24 24" ><circle cx="12" cy="12.5" r="9" fill="none" stroke="#111" stroke-width="1.8"/><path d="M2 22.5 L22 2" stroke="#4a4ae0" stroke-width="1.1"/></svg><div style="left:658px;top:103px;width:1px;height:23px;background:#d0ccc7"></div><div style="left:659px;top:103px;width:1px;height:23px;background:#fbfaf9"></div><div class="pbtn" style="left:662px;top:100px;width:29px;height:29px;"></div><svg style="left:664.5px;top:102px" width="24" height="24" viewBox="0 0 24 24" ><rect x="3" y="3" width="1.6" height="1.6" fill="#3a3a3a"/><rect x="3" y="8.4" width="1.6" height="1.6" fill="#3a3a3a"/><rect x="3" y="13.8" width="1.6" height="1.6" fill="#3a3a3a"/><rect x="3" y="19.2" width="1.6" height="1.6" fill="#3a3a3a"/><rect x="8.4" y="3" width="1.6" height="1.6" fill="#3a3a3a"/><rect x="8.4" y="8.4" width="1.6" height="1.6" fill="#3a3a3a"/><rect x="8.4" y="13.8" width="1.6" height="1.6" fill="#3a3a3a"/><rect x="8.4" y="19.2" width="1.6" height="1.6" fill="#3a3a3a"/><rect x="13.8" y="3" width="1.6" height="1.6" fill="#3a3a3a"/><rect x="13.8" y="8.4" width="1.6" height="1.6" fill="#3a3a3a"/><rect x="13.8" y="13.8" width="1.6" height="1.6" fill="#3a3a3a"/><rect x="13.8" y="19.2" width="1.6" height="1.6" fill="#3a3a3a"/><rect x="19.2" y="3" width="1.6" height="1.6" fill="#3a3a3a"/><rect x="19.2" y="8.4" width="1.6" height="1.6" fill="#3a3a3a"/><rect x="19.2" y="13.8" width="1.6" height="1.6" fill="#3a3a3a"/><rect x="19.2" y="19.2" width="1.6" height="1.6" fill="#3a3a3a"/></svg><div style="left:696px;top:103px;width:1px;height:23px;background:#d0ccc7"></div><div style="left:697px;top:103px;width:1px;height:23px;background:#fbfaf9"></div><svg style="left:700px;top:102px" width="24" height="24" viewBox="0 0 24 24" ><path d="M14.5 15.5 L21 22" stroke="#6a6a68" stroke-width="3" stroke-linecap="round"/><path d="M14.5 15.5 L20.5 21.5" stroke="#9a9a98" stroke-width="1" stroke-linecap="round"/><circle cx="9.5" cy="9.5" r="7.6" fill="url(#gLens)" stroke="#8fb4e4" stroke-width="1.6"/><path d="M5.5 9.5 h8 M9.5 5.5 v8" stroke="#fff" stroke-width="2.4"/></svg><svg style="left:730px;top:102px" width="24" height="24" viewBox="0 0 24 24" ><path d="M14.5 15.5 L21 22" stroke="#6a6a68" stroke-width="3" stroke-linecap="round"/><path d="M14.5 15.5 L20.5 21.5" stroke="#9a9a98" stroke-width="1" stroke-linecap="round"/><circle cx="9.5" cy="9.5" r="7.6" fill="url(#gLens)" stroke="#8fb4e4" stroke-width="1.6"/><path d="M5.5 9.5 h8" stroke="#fff" stroke-width="2.4"/></svg><svg style="left:760px;top:102px" width="24" height="24" viewBox="0 0 24 24" ><path d="M14.5 15.5 L21 22" stroke="#6a6a68" stroke-width="3" stroke-linecap="round"/><path d="M14.5 15.5 L20.5 21.5" stroke="#9a9a98" stroke-width="1" stroke-linecap="round"/><circle cx="9.5" cy="9.5" r="7.6" fill="url(#gLens)" stroke="#8fb4e4" stroke-width="1.6"/><path d="M5.2 7.6 V5.2 H7.6 M11.4 5.2 H13.8 V7.6 M13.8 11.4 V13.8 H11.4 M7.6 13.8 H5.2 V11.4" stroke="#fff" stroke-width="1.5" fill="none"/></svg><svg style="left:790px;top:102px" width="24" height="24" viewBox="0 0 24 24" ><path d="M14.5 15.5 L21 22" stroke="#6a6a68" stroke-width="3" stroke-linecap="round"/><path d="M14.5 15.5 L20.5 21.5" stroke="#9a9a98" stroke-width="1" stroke-linecap="round"/><circle cx="9.5" cy="9.5" r="7.6" fill="url(#gLensG)" stroke="#bdbdbd" stroke-width="1.6"/><rect x="5.8" y="5.8" width="7.4" height="7.4" fill="none" stroke="#9a9a98" stroke-width="2"/></svg><svg style="left:820px;top:102px" width="24" height="24" viewBox="0 0 24 24" ><path d="M14.5 15.5 L21 22" stroke="#6a6a68" stroke-width="3" stroke-linecap="round"/><path d="M14.5 15.5 L20.5 21.5" stroke="#9a9a98" stroke-width="1" stroke-linecap="round"/><circle cx="9.5" cy="9.5" r="7.6" fill="url(#gLens)" stroke="#8fb4e4" stroke-width="1.6"/><path d="M4.6 9.5 L9.4 5.4 V8 H14.2 V11 H9.4 V13.6 Z" fill="#fff"/></svg><svg style="left:850px;top:102px" width="24" height="24" viewBox="0 0 24 24" ><rect x="2" y="1.5" width="19" height="12.5" fill="#fff" stroke="#7fa6dc" stroke-width="1"/><path d="M15.5 17 L21 22.5" stroke="#6a6a68" stroke-width="3" stroke-linecap="round"/><circle cx="11" cy="12" r="6.3" fill="url(#gLens)" stroke="#8fb4e4" stroke-width="1.4"/><path d="M7.5 12.5 h7" stroke="#fff" stroke-width="2"/></svg><svg style="left:880px;top:102px" width="24" height="24" viewBox="0 0 24 24" ><path d="M15 16 L21.5 22.5" stroke="#6a6a68" stroke-width="3" stroke-linecap="round"/><path d="M10 .8 L19.2 10 L10 19.2 L.8 10 Z" fill="url(#gLens)" stroke="#8fb4e4" stroke-width="1.2"/><path d="M10 2.8 V17.2 M2.8 10 H17.2" stroke="#fff" stroke-width="1.6"/><path d="M10 1.6 l-2.6 3 h5.2z M10 18.4 l-2.6 -3 h5.2z M1.6 10 l3 -2.6 v5.2z M18.4 10 l-3 -2.6 v5.2z" fill="#fff"/></svg><svg style="left:918px;top:104px" width="5" height="22"><rect x="0" y="0" width="1" height="1" fill="#b3afaa"/><rect x="0" y="3" width="1" height="1" fill="#b3afaa"/><rect x="0" y="6" width="1" height="1" fill="#b3afaa"/><rect x="0" y="9" width="1" height="1" fill="#b3afaa"/><rect x="0" y="12" width="1" height="1" fill="#b3afaa"/><rect x="0" y="15" width="1" height="1" fill="#b3afaa"/><rect x="0" y="18" width="1" height="1" fill="#b3afaa"/><rect x="0" y="21" width="1" height="1" fill="#b3afaa"/><rect x="3" y="0" width="1" height="1" fill="#b3afaa"/><rect x="3" y="3" width="1" height="1" fill="#b3afaa"/><rect x="3" y="6" width="1" height="1" fill="#b3afaa"/><rect x="3" y="9" width="1" height="1" fill="#b3afaa"/><rect x="3" y="12" width="1" height="1" fill="#b3afaa"/><rect x="3" y="15" width="1" height="1" fill="#b3afaa"/><rect x="3" y="18" width="1" height="1" fill="#b3afaa"/><rect x="3" y="21" width="1" height="1" fill="#b3afaa"/></svg><svg style="left:926px;top:102px" width="24" height="24" viewBox="0 0 24 24" ><g transform="scale(1)"><path d="M.8 12.6 Q3 7.5 8 5.6 Q13 3.8 18 6 Q21.5 7.8 23.3 11.6 Q22 15.6 18.6 17.8 L17.8 19.6 L16.2 18.6 L14.6 20 L13 18.8 L11 20 L9.6 18.6 L7.6 19.2 L7 17.4 Q3 16 .8 12.6 Z" fill="#a6a6a4"/><path d="M5.6 11.5 Q8.8 8.6 12.5 8.6 Q16.2 8.6 18.8 11.2 Q16.4 14.8 12.2 14.8 Q8.4 14.8 5.6 11.5 Z" fill="#fff"/><circle cx="12.3" cy="11.4" r="3.5" fill="#a6a6a4"/><circle cx="11.2" cy="10.2" r="1" fill="#fff" opacity=".55"/></g><path d="M9 14 L19 5" stroke="#8a8a88" stroke-width="2.4" stroke-linecap="round"/></svg><svg style="left:956px;top:102px" width="24" height="24" viewBox="0 0 24 24" ><g transform="scale(1)"><path d="M.8 12.6 Q3 7.5 8 5.6 Q13 3.8 18 6 Q21.5 7.8 23.3 11.6 Q22 15.6 18.6 17.8 L17.8 19.6 L16.2 18.6 L14.6 20 L13 18.8 L11 20 L9.6 18.6 L7.6 19.2 L7 17.4 Q3 16 .8 12.6 Z" fill="#000"/><path d="M5.6 11.5 Q8.8 8.6 12.5 8.6 Q16.2 8.6 18.8 11.2 Q16.4 14.8 12.2 14.8 Q8.4 14.8 5.6 11.5 Z" fill="#fff"/><circle cx="12.3" cy="11.4" r="3.5" fill="#000"/><circle cx="11.2" cy="10.2" r="1" fill="#fff" opacity=".55"/></g></svg><svg style="left:986px;top:102px" width="24" height="24" viewBox="0 0 24 24" ><g transform="scale(1)"><path d="M.8 12.6 Q3 7.5 8 5.6 Q13 3.8 18 6 Q21.5 7.8 23.3 11.6 Q22 15.6 18.6 17.8 L17.8 19.6 L16.2 18.6 L14.6 20 L13 18.8 L11 20 L9.6 18.6 L7.6 19.2 L7 17.4 Q3 16 .8 12.6 Z" fill="#a6a6a4"/><path d="M5.6 11.5 Q8.8 8.6 12.5 8.6 Q16.2 8.6 18.8 11.2 Q16.4 14.8 12.2 14.8 Q8.4 14.8 5.6 11.5 Z" fill="#fff"/><circle cx="12.3" cy="11.4" r="3.5" fill="#a6a6a4"/><circle cx="11.2" cy="10.2" r="1" fill="#fff" opacity=".55"/></g></svg><div style="left:1018px;top:103px;width:1px;height:23px;background:#d0ccc7"></div><div style="left:1019px;top:103px;width:1px;height:23px;background:#fbfaf9"></div><svg style="left:1023px;top:102px" width="24" height="24" viewBox="0 0 24 24" ><path d="M9.5 2.5 h5 v7 h7 v5 h-7 v7 h-5 v-7 h-7 v-5 h7z" fill="#e01010" stroke="#a00808" stroke-width=".6"/></svg><svg style="left:1054px;top:102px" width="24" height="24" viewBox="0 0 24 24" ><rect x="3" y="3.5" width="13" height="11" fill="none" stroke="#8c8c8a" stroke-width="1.2"/><circle cx="14.5" cy="14.5" r="6" fill="none" stroke="#8c8c8a" stroke-width="1.2"/><path d="M1.5 14.5 H16" stroke="#8c8c8a" stroke-width="1"/></svg><div style="left:1085px;top:103px;width:1px;height:23px;background:#d0ccc7"></div><div style="left:1086px;top:103px;width:1px;height:23px;background:#fbfaf9"></div><svg style="left:1090px;top:102px" width="24" height="24" viewBox="0 0 24 24" ><rect x="3" y="10" width="18" height="4.2" rx="1" fill="#a2a2a0"/></svg><div style="left:1122px;top:103px;width:1px;height:23px;background:#d0ccc7"></div><div style="left:1123px;top:103px;width:1px;height:23px;background:#fbfaf9"></div><svg style="left:1127px;top:102px" width="24" height="24" viewBox="0 0 24 24" ><text x="1.5" y="18" font-family="Liberation Sans,sans-serif" font-size="15" fill="#7a7a78">a</text><path d="M11.3 3 V21" stroke="#7a7a78" stroke-width="1"/><text x="13.2" y="18" font-family="Liberation Sans,sans-serif" font-size="15" fill="#7a7a78">b</text></svg><svg style="left:1157px;top:102px" width="24" height="24" viewBox="0 0 24 24" ><g transform="scale(1)"><path d="M3 21 L5.2 15.2 L17.5 2.9 Q19 1.8 20.6 3.4 Q22.2 5 21.1 6.5 L8.8 18.8 Z" fill="#e9bd55" stroke="#b07d22" stroke-width=".9" stroke-linejoin="round"/><path d="M17.5 2.9 Q19 1.8 20.6 3.4 Q22.2 5 21.1 6.5 L19 8.6 L15.4 5 Z" fill="#e0452c"/><path d="M3 21 L4.2 17.9 L6.1 19.8 Z" fill="#5a4a2a"/></g></svg><svg style="left:1187px;top:102px" width="24" height="24" viewBox="0 0 24 24" ><g transform="translate(-1,-2) scale(.85)"><g transform="scale(1)"><path d="M3 21 L5.2 15.2 L17.5 2.9 Q19 1.8 20.6 3.4 Q22.2 5 21.1 6.5 L8.8 18.8 Z" fill="#e9bd55" stroke="#b07d22" stroke-width=".9" stroke-linejoin="round"/><path d="M17.5 2.9 Q19 1.8 20.6 3.4 Q22.2 5 21.1 6.5 L19 8.6 L15.4 5 Z" fill="#e0452c"/><path d="M3 21 L4.2 17.9 L6.1 19.8 Z" fill="#5a4a2a"/></g></g><rect x="9" y="12" width="9" height="7" fill="#eee" stroke="#666" stroke-width="1"/><circle cx="17" cy="17.5" r="4.6" fill="#f4f0d8" stroke="#666" stroke-width="1"/></svg><svg style="left:1217px;top:102px" width="24" height="24" viewBox="0 0 24 24" ><rect x="4" y="4.5" width="16" height="15.5" rx="2" fill="#e8694a" stroke="#d8502f" stroke-width="1"/><path d="M8.5 8.8 L15.5 15.8 M15.5 8.8 L8.5 15.8" stroke="#fff" stroke-width="2.4"/></svg><div style="left:1249px;top:103px;width:1px;height:23px;background:#d0ccc7"></div><div style="left:1250px;top:103px;width:1px;height:23px;background:#fbfaf9"></div><svg style="left:1254px;top:102px" width="24" height="24" viewBox="0 0 24 24" ><rect x="2" y="1.5" width="6.5" height="5" fill="none" stroke="#f07a70" stroke-width="1.1"/><circle cx="7.5" cy="6" r="2.4" fill="none" stroke="#f07a70" stroke-width="1"/><rect x="13" y="7" width="6.5" height="5" fill="none" stroke="#f07a70" stroke-width="1.1"/><circle cx="18.5" cy="11.5" r="2.4" fill="none" stroke="#f07a70" stroke-width="1"/><rect x="4" y="14.5" width="6.5" height="5" fill="none" stroke="#f07a70" stroke-width="1.1"/><circle cx="9.5" cy="19" r="2.4" fill="none" stroke="#f07a70" stroke-width="1"/><path d="M6 7 L8 14 M12.5 10 L10.5 15" stroke="#f07a70" stroke-width=".7"/></svg><svg style="left:1284px;top:102px" width="24" height="24" viewBox="0 0 24 24" ><rect x="2" y="1.5" width="6.5" height="5" fill="none" stroke="#8a8a6a" stroke-width="1.1"/><circle cx="7.5" cy="6" r="2.4" fill="none" stroke="#8a8a6a" stroke-width="1"/><rect x="13" y="7" width="6.5" height="5" fill="none" stroke="#8a8a6a" stroke-width="1.1"/><circle cx="18.5" cy="11.5" r="2.4" fill="none" stroke="#8a8a6a" stroke-width="1"/><rect x="4" y="14.5" width="6.5" height="5" fill="none" stroke="#8a8a6a" stroke-width="1.1"/><circle cx="9.5" cy="19" r="2.4" fill="none" stroke="#8a8a6a" stroke-width="1"/><path d="M6 7 L8 14 M12.5 10 L10.5 15" stroke="#8a8a6a" stroke-width=".7"/></svg><div style="left:1316px;top:103px;width:1px;height:23px;background:#d0ccc7"></div><div style="left:1317px;top:103px;width:1px;height:23px;background:#fbfaf9"></div><svg style="left:1321px;top:102px" width="24" height="24" viewBox="0 0 24 24" ><rect x="5" y="1.5" width="14" height="21" fill="#e9e9e7" stroke="#cfcfcd"/><path d="M8 5 H12.5 Q15 5 15 8 V14 H18 L13.5 20 L9 14 H12 V9 Q12 8 11 8 H8Z" fill="#a4a4a2" stroke="#8e8e8c" stroke-width=".7"/></svg><div style="left:1353px;top:103px;width:1px;height:23px;background:#d0ccc7"></div><div style="left:1354px;top:103px;width:1px;height:23px;background:#fbfaf9"></div><svg style="left:1359px;top:102px" width="24" height="24" viewBox="0 0 24 24" ><path d="M17 19.5 H12.5 Q9.5 19.5 9.5 16.5 V9 H6 L11 2.5 L16 9 H12.6 V15.5 Q12.6 16.6 13.8 16.6 H17Z" fill="#a8a8a6" stroke="#8a8a88" stroke-width=".7"/></svg><div style="left:1391px;top:103px;width:1px;height:23px;background:#d0ccc7"></div><div style="left:1392px;top:103px;width:1px;height:23px;background:#fbfaf9"></div><svg style="left:1397px;top:102px" width="24" height="24" viewBox="0 0 24 24" ><path d="M12 7 L17 4.5 L21 19 L16.5 20.5Z" fill="#8a8a88" stroke="#6a6a68" stroke-width=".8"/><path d="M14 6 Q11 3 7 6" stroke="#9a9a98" stroke-width="1.2" fill="none"/><path d="M6 6 l-3 -2 M6 6 l-3 1.5 M6 6 l-.5 -3.5 M6 6 l1.5 -3 M6 6 l-1.5 3" stroke="#aaa" stroke-width="1"/></svg><div style="left:101px;top:134px;width:1411px;height:43px;background:#f3f0ec;border-bottom:1px solid #cdc9c4"></div><svg style="left:106px;top:142px" width="5" height="28"><rect x="0" y="0" width="1" height="1" fill="#b3afaa"/><rect x="0" y="3" width="1" height="1" fill="#b3afaa"/><rect x="0" y="6" width="1" height="1" fill="#b3afaa"/><rect x="0" y="9" width="1" height="1" fill="#b3afaa"/><rect x="0" y="12" width="1" height="1" fill="#b3afaa"/><rect x="0" y="15" width="1" height="1" fill="#b3afaa"/><rect x="0" y="18" width="1" height="1" fill="#b3afaa"/><rect x="0" y="21" width="1" height="1" fill="#b3afaa"/><rect x="0" y="24" width="1" height="1" fill="#b3afaa"/><rect x="0" y="27" width="1" height="1" fill="#b3afaa"/><rect x="3" y="0" width="1" height="1" fill="#b3afaa"/><rect x="3" y="3" width="1" height="1" fill="#b3afaa"/><rect x="3" y="6" width="1" height="1" fill="#b3afaa"/><rect x="3" y="9" width="1" height="1" fill="#b3afaa"/><rect x="3" y="12" width="1" height="1" fill="#b3afaa"/><rect x="3" y="15" width="1" height="1" fill="#b3afaa"/><rect x="3" y="18" width="1" height="1" fill="#b3afaa"/><rect x="3" y="21" width="1" height="1" fill="#b3afaa"/><rect x="3" y="24" width="1" height="1" fill="#b3afaa"/><rect x="3" y="27" width="1" height="1" fill="#b3afaa"/></svg><div style="left:118px;top:139px;width:44px;height:32px;border:2px solid #8f8c88;border-radius:6px;background:linear-gradient(#ffffff,#f1efec)"></div><svg style="left:130px;top:145px" width="20" height="20" viewBox="0 0 24 24" ><path d="M8 4 L8 18 L11.2 15 L13.6 20.5 L15.8 19.5 L13.4 14.2 L17.8 14 Z" fill="#f4f4f4" stroke="#8a8a88" stroke-width="1.2" stroke-linejoin="round"/></svg><div style="left:167px;top:141px;width:1px;height:29px;background:#d0ccc7"></div><svg style="left:140px;top:181px" width="16" height="5"><rect x="0" y="0" width="1" height="1" fill="#b3afaa"/><rect x="3" y="0" width="1" height="1" fill="#b3afaa"/><rect x="6" y="0" width="1" height="1" fill="#b3afaa"/><rect x="9" y="0" width="1" height="1" fill="#b3afaa"/><rect x="12" y="0" width="1" height="1" fill="#b3afaa"/><rect x="15" y="0" width="1" height="1" fill="#b3afaa"/><rect x="0" y="3" width="1" height="1" fill="#b3afaa"/><rect x="3" y="3" width="1" height="1" fill="#b3afaa"/><rect x="6" y="3" width="1" height="1" fill="#b3afaa"/><rect x="9" y="3" width="1" height="1" fill="#b3afaa"/><rect x="12" y="3" width="1" height="1" fill="#b3afaa"/><rect x="15" y="3" width="1" height="1" fill="#b3afaa"/></svg><div style="left:190px;top:178px;width:1px;height:798px;background:#d5d1cc"></div><div class="tb" style="left:107px;top:192px;width:40px;height:40px;"></div><svg style="left:107px;top:192px" width="40" height="40" viewBox="0 0 40 40" ><path d="M9 11.5 h7 M12.5 8 v7 M25 21.5 h7 M28.5 18 v7 M10 28.5 h7 M13.5 25 v7" stroke="#222" stroke-width="1.15" fill="none" stroke-width="1.3"/></svg><svg style="left:137px;top:222px" width="6" height="6" viewBox="0 0 6 6" ><path d="M6 0 V6 H0Z" fill="#111"/></svg><div class="tb" style="left:147px;top:192px;width:40px;height:40px;"></div><svg style="left:147px;top:192px" width="40" height="40" viewBox="0 0 40 40" ><path d="M7 26.8 L34 14.2" stroke="#222" stroke-width="1.15" fill="none"/></svg><svg style="left:177px;top:222px" width="6" height="6" viewBox="0 0 6 6" ><path d="M6 0 V6 H0Z" fill="#111"/></svg><div class="tb" style="left:107px;top:232px;width:40px;height:40px;"></div><svg style="left:107px;top:232px" width="40" height="40" viewBox="0 0 40 40" ><path d="M8 30.8 Q9.5 10.5 31 8.4" stroke="#222" stroke-width="1.15" fill="none"/></svg><svg style="left:137px;top:262px" width="6" height="6" viewBox="0 0 6 6" ><path d="M6 0 V6 H0Z" fill="#111"/></svg><div class="tb" style="left:147px;top:232px;width:40px;height:40px;"></div><svg style="left:147px;top:232px" width="40" height="40" viewBox="0 0 40 40" ><circle cx="19.3" cy="19.3" r="11.3" stroke="#222" stroke-width="1.15" fill="none"/></svg><svg style="left:177px;top:262px" width="6" height="6" viewBox="0 0 6 6" ><path d="M6 0 V6 H0Z" fill="#111"/></svg><div class="tb" style="left:107px;top:272px;width:40px;height:40px;"></div><svg style="left:107px;top:272px" width="40" height="40" viewBox="0 0 40 40" ><ellipse cx="20" cy="20.3" rx="17.3" ry="6.8" transform="rotate(-46 20 20.3)" stroke="#222" stroke-width="1.15" fill="none"/></svg><svg style="left:137px;top:302px" width="6" height="6" viewBox="0 0 6 6" ><path d="M6 0 V6 H0Z" fill="#111"/></svg><div class="tb" style="left:147px;top:272px;width:40px;height:40px;"></div><svg style="left:147px;top:272px" width="40" height="40" viewBox="0 0 40 40" ><path d="M7.5 11 C14 4 20 20 27 26 S35 18 31 11 S19 16 16 28 S4 20 7.5 11Z" stroke="#222" stroke-width="1.15" fill="none"/></svg><svg style="left:177px;top:302px" width="6" height="6" viewBox="0 0 6 6" ><path d="M6 0 V6 H0Z" fill="#111"/></svg><div class="tb" style="left:107px;top:312px;width:40px;height:40px;"></div><svg style="left:107px;top:312px" width="40" height="40" viewBox="0 0 40 40" ><path d="M17 13.8 Q9 13.8 9.3 19.5 Q9.8 25 16 25 H31" stroke="#222" stroke-width="1.15" fill="none"/></svg><svg style="left:137px;top:342px" width="6" height="6" viewBox="0 0 6 6" ><path d="M6 0 V6 H0Z" fill="#111"/></svg><div class="tb" style="left:147px;top:312px;width:40px;height:40px;"></div><svg style="left:147px;top:312px" width="40" height="40" viewBox="0 0 40 40" ><path d="M9.2 6 h8.4 l4.2 7.3 l-4.2 7.3 h-8.4 l-4.2 -7.3z M28.6 12 l6.2 9.2 h-12.4z M6.3 25.6 h16.2 v8 h-16.2z" stroke="#222" stroke-width="1.15" fill="none"/></svg><svg style="left:177px;top:342px" width="6" height="6" viewBox="0 0 6 6" ><path d="M6 0 V6 H0Z" fill="#111"/></svg><div class="tb" style="left:107px;top:352px;width:40px;height:40px;"></div><svg style="left:107px;top:352px" width="40" height="40" viewBox="0 0 40 40" ><clipPath id="hc"><path d="M8.5 19 L15.5 12 H31.8 V28.7 H8.5Z"/></clipPath><g clip-path="url(#hc)"><path d="M-12 30 L8 10" stroke="#444" stroke-width=".7"/><path d="M-9 30 L11 10" stroke="#444" stroke-width=".7"/><path d="M-6 30 L14 10" stroke="#444" stroke-width=".7"/><path d="M-3 30 L17 10" stroke="#444" stroke-width=".7"/><path d="M0 30 L20 10" stroke="#444" stroke-width=".7"/><path d="M3 30 L23 10" stroke="#444" stroke-width=".7"/><path d="M6 30 L26 10" stroke="#444" stroke-width=".7"/><path d="M9 30 L29 10" stroke="#444" stroke-width=".7"/><path d="M12 30 L32 10" stroke="#444" stroke-width=".7"/><path d="M15 30 L35 10" stroke="#444" stroke-width=".7"/><path d="M18 30 L38 10" stroke="#444" stroke-width=".7"/><path d="M21 30 L41 10" stroke="#444" stroke-width=".7"/><path d="M24 30 L44 10" stroke="#444" stroke-width=".7"/><path d="M27 30 L47 10" stroke="#444" stroke-width=".7"/><path d="M30 30 L50 10" stroke="#444" stroke-width=".7"/><path d="M33 30 L53 10" stroke="#444" stroke-width=".7"/></g><path d="M8.5 19 L15.5 12 H31.8 V28.7 H8.5Z" stroke="#222" stroke-width="1.15" fill="none"/><circle cx="23" cy="20.7" r="3.6" fill="#eee" stroke="#222" stroke-width="1"/></svg><svg style="left:137px;top:382px" width="6" height="6" viewBox="0 0 6 6" ><path d="M6 0 V6 H0Z" fill="#111"/></svg><div class="tb" style="left:107px;top:400px;width:40px;height:40px;"></div><svg style="left:107px;top:400px" width="40" height="40" viewBox="0 0 40 40" ><text x="20.5" y="31.3" text-anchor="middle" font-family="Liberation Serif,serif" font-size="32" fill="#111">A</text></svg><div class="tb" style="left:147px;top:400px;width:40px;height:40px;"></div><svg style="left:147px;top:400px" width="40" height="40" viewBox="0 0 40 40" ><path d="M9 11 V30 M29.5 11 V30 M9 14.5 H29.5" stroke="#222" stroke-width="1.15" fill="none" stroke-width="1.3"/><path d="M9 14.5 l5.5 -2.6 v5.2z M29.5 14.5 l-5.5 -2.6 v5.2z" fill="#111"/></svg><svg style="left:177px;top:430px" width="6" height="6" viewBox="0 0 6 6" ><path d="M6 0 V6 H0Z" fill="#111"/></svg><div class="tb" style="left:107px;top:440px;width:40px;height:40px;"></div><svg style="left:107px;top:440px" width="40" height="40" viewBox="0 0 40 40" ><rect x="7" y="10" width="26" height="20" fill="#5f7a96"/><path d="M7 10 H33 V16 Q22 14 7 18Z" fill="#6f9fd8"/><path d="M7 30 L7 19 Q16 18 24 22 L33 30Z" fill="#5a5a52"/><path d="M26 12 L33 11 V28 L28 26Z" fill="#8a9aa8"/><path d="M7 26 Q18 22 28 30 H7Z" fill="#3a3a36"/></svg><div class="tb" style="left:107px;top:488px;width:40px;height:40px;"></div><svg style="left:107px;top:488px" width="40" height="40" viewBox="0 0 40 40" ><path d="M5 33 V12 L27 33Z" fill="#dcdcda" stroke="#8a8a88" stroke-width=".8"/><path d="M8 30 A10 10 0 0 1 19 30" fill="none" stroke="#aaa" stroke-width=".8"/><path d="M10.5 6.5 L14.5 5 L22 16 L20.5 19 L17.5 18.5Z" fill="#d62a20"/><path d="M20.5 19 l1.6 -.8 l.6 2.6z" fill="#333"/><path d="M29.5 6 L27.5 28 M29.5 6 L32.5 28 M29.5 6 v-1.5" stroke="#666" stroke-width="1.3" fill="none"/></svg><svg style="left:137px;top:518px" width="6" height="6" viewBox="0 0 6 6" ><path d="M6 0 V6 H0Z" fill="#111"/></svg><div class="tb" style="left:147px;top:488px;width:40px;height:40px;"></div><svg style="left:147px;top:488px" width="40" height="40" viewBox="0 0 40 40" ><rect x="6" y="15" width="28.3" height="10" rx="1" fill="#e9a860" stroke="#c8843a" stroke-width=".8"/><path d="M9 15 v3.5 M12 15 v2 M15 15 v3.5 M18 15 v2 M21 15 v3.5 M24 15 v2 M27 15 v3.5 M30 15 v2" stroke="#8a5a28" stroke-width=".7"/></svg><svg style="left:177px;top:518px" width="6" height="6" viewBox="0 0 6 6" ><path d="M6 0 V6 H0Z" fill="#111"/></svg><div class="tb" style="left:107px;top:528px;width:40px;height:40px;"></div><svg style="left:107px;top:528px" width="40" height="40" viewBox="0 0 40 40" ><rect x="8.5" y="9.6" width="19" height="13.8" fill="none" stroke="#444" stroke-width="1.1"/><circle cx="24.8" cy="22.2" r="8.1" fill="none" stroke="#444" stroke-width="1.1"/><path d="M6.5 23.4 H16.7" stroke="#444" stroke-width="1"/></svg><div class="tb" style="left:147px;top:528px;width:40px;height:40px;"></div><svg style="left:147px;top:528px" width="40" height="40" viewBox="0 0 40 40" ><path d="M6.8 19 L26.8 7" stroke="#e02020" stroke-width="1.2"/><path d="M18.5 13 V27.5 L22 24.5 L24.5 30 L27 29 L24.5 23.7 L29 23.4Z" fill="#fff" stroke="#666" stroke-width="1"/></svg><svg style="left:177px;top:558px" width="6" height="6" viewBox="0 0 6 6" ><path d="M6 0 V6 H0Z" fill="#111"/></svg><div class="tb" style="left:107px;top:576px;width:40px;height:40px;"></div><svg style="left:107px;top:576px" width="40" height="40" viewBox="0 0 40 40" ><path d="M8.5 14 L22 7 L32.3 12.5 L32.3 24.5 L19 32 L8.5 26Z M8.5 14 L19 19.5 L32.3 12.5 M19 19.5 V32" stroke="#222" stroke-width="1.15" fill="none" stroke-width="1.2" stroke-linejoin="round"/></svg><svg style="left:137px;top:606px" width="6" height="6" viewBox="0 0 6 6" ><path d="M6 0 V6 H0Z" fill="#111"/></svg>
<div style="left:191px;top:178px;width:1021px;height:726px;border:1px solid #cfcbc6;border-bottom:none;border-radius:4px 4px 0 0;background:#f4f1ed"></div><svg style="left:203px;top:184px" width="16" height="16" viewBox="0 0 16 16" ><circle cx="7.5" cy="7.5" r="5.6" fill="#f4f6fb" stroke="#2c3a8c" stroke-width="2"/><path d="M10.5 11 L14 14.5" stroke="#e8a030" stroke-width="2.6" stroke-linecap="round"/><path d="M6 5 L10 9.5" stroke="#e8a030" stroke-width="1.4"/></svg><div class="t" style="left:641px;top:188px;height:16px;line-height:16px;font-size:13px;letter-spacing:-1px;width:120px;text-align:center;color:#222">無題<span class="L" style="font-size:13px;width:7.80px;transform:scaleX(0.7692);margin-right:-1.80px">1</span></div><svg style="left:1182px;top:186px" width="14" height="14" viewBox="0 0 14 14" ><path d="M2.5 2.5 Q7 6 11.5 12 M11.5 2 Q7 6 2 12" stroke="#111" stroke-width="2.6" fill="none" stroke-linecap="round"/></svg><div style="left:191px;top:209px;width:23px;height:23px;background:#f1eeea;border:1px solid #b9b5b0;border-right:none;border-bottom:none"></div><div style="left:1198px;top:209px;width:14px;height:23px;background:#f1eeea;border:1px solid #b9b5b0;border-bottom:none"></div><svg style="left:191px;top:208px" width="1021" height="682" viewBox="191 208 1021 682"><rect x="214" y="208" width="984" height="24" fill="#f1eeea"/><rect x="191" y="232" width="23" height="658" fill="#f1eeea"/><path d="M214.5 225 V232 M224.5 229 V232 M234.5 229 V232 M244.5 229 V232 M254.5 229 V232 M264.5 225 V232 M274.5 229 V232 M284.5 229 V232 M294.5 229 V232 M304.5 229 V232 M314.5 225 V232 M324.5 229 V232 M334.5 229 V232 M344.5 229 V232 M354.5 229 V232 M364.5 225 V232 M374.5 229 V232 M384.5 229 V232 M394.5 229 V232 M404.5 229 V232 M414.5 225 V232 M424.5 229 V232 M434.5 229 V232 M444.5 229 V232 M454.5 229 V232 M464.5 225 V232 M474.5 229 V232 M484.5 229 V232 M494.5 229 V232 M504.5 229 V232 M514.5 225 V232 M524.5 229 V232 M534.5 229 V232 M544.5 229 V232 M554.5 229 V232 M564.5 225 V232 M574.5 229 V232 M584.5 229 V232 M594.5 229 V232 M604.5 229 V232 M614.5 225 V232 M624.5 229 V232 M634.5 229 V232 M644.5 229 V232 M654.5 229 V232 M664.5 225 V232 M674.5 229 V232 M684.5 229 V232 M694.5 229 V232 M704.5 229 V232 M714.5 225 V232 M724.5 229 V232 M734.5 229 V232 M744.5 229 V232 M754.5 229 V232 M764.5 225 V232 M774.5 229 V232 M784.5 229 V232 M794.5 229 V232 M804.5 229 V232 M814.5 225 V232 M824.5 229 V232 M834.5 229 V232 M844.5 229 V232 M854.5 229 V232 M864.5 225 V232 M874.5 229 V232 M884.5 229 V232 M894.5 229 V232 M904.5 229 V232 M914.5 225 V232 M924.5 229 V232 M934.5 229 V232 M944.5 229 V232 M954.5 229 V232 M964.5 225 V232 M974.5 229 V232 M984.5 229 V232 M994.5 229 V232 M1004.5 229 V232 M1014.5 225 V232 M1024.5 229 V232 M1034.5 229 V232 M1044.5 229 V232 M1054.5 229 V232 M1064.5 225 V232 M1074.5 229 V232 M1084.5 229 V232 M1094.5 229 V232 M1104.5 229 V232 M1114.5 225 V232 M1124.5 229 V232 M1134.5 229 V232 M1144.5 229 V232 M1154.5 229 V232 M1164.5 225 V232 M1174.5 229 V232 M1184.5 229 V232 M1194.5 229 V232 M207 240.5 H214 M211 250.5 H214 M211 260.5 H214 M211 270.5 H214 M211 280.5 H214 M207 290.5 H214 M211 300.5 H214 M211 310.5 H214 M211 320.5 H214 M211 330.5 H214 M207 340.5 H214 M211 350.5 H214 M211 360.5 H214 M211 370.5 H214 M211 380.5 H214 M207 390.5 H214 M211 400.5 H214 M211 410.5 H214 M211 420.5 H214 M211 430.5 H214 M207 440.5 H214 M211 450.5 H214 M211 460.5 H214 M211 470.5 H214 M211 480.5 H214 M207 490.5 H214 M211 500.5 H214 M211 510.5 H214 M211 520.5 H214 M211 530.5 H214 M207 540.5 H214 M211 550.5 H214 M211 560.5 H214 M211 570.5 H214 M211 580.5 H214 M207 590.5 H214 M211 600.5 H214 M211 610.5 H214 M211 620.5 H214 M211 630.5 H214 M207 640.5 H214 M211 650.5 H214 M211 660.5 H214 M211 670.5 H214 M211 680.5 H214 M207 690.5 H214 M211 700.5 H214 M211 710.5 H214 M211 720.5 H214 M211 730.5 H214 M207 740.5 H214 M211 750.5 H214 M211 760.5 H214 M211 770.5 H214 M211 780.5 H214 M207 790.5 H214 M211 800.5 H214 M211 810.5 H214 M211 820.5 H214 M211 830.5 H214 M207 840.5 H214 M211 850.5 H214 M211 860.5 H214 M211 870.5 H214 M211 880.5 H214" stroke="#000" stroke-width="1" fill="none"/><path d="M281 226 h6.5 l-3.25 4z" fill="#000"/><path d="M207 547 v6.5 l4 -3.25z" fill="#000"/><clipPath id="rc"><rect x="214" y="208" width="984" height="24"/></clipPath><clipPath id="rc2"><rect x="191" y="232" width="23" height="658"/></clipPath><g clip-path="url(#rc)" font-family="Liberation Mono,monospace" font-size="10.5" fill="#111" style="letter-spacing:-.3px"><text x="214" y="220.8" text-anchor="middle">-5</text><text x="264" y="220.8" text-anchor="middle">0</text><text x="314" y="220.8" text-anchor="middle">5</text><text x="364" y="220.8" text-anchor="middle">10</text><text x="414" y="220.8" text-anchor="middle">15</text><text x="464" y="220.8" text-anchor="middle">20</text><text x="514" y="220.8" text-anchor="middle">25</text><text x="564" y="220.8" text-anchor="middle">30</text><text x="614" y="220.8" text-anchor="middle">35</text><text x="664" y="220.8" text-anchor="middle">40</text><text x="714" y="220.8" text-anchor="middle">45</text><text x="764" y="220.8" text-anchor="middle">50</text><text x="814" y="220.8" text-anchor="middle">55</text><text x="864" y="220.8" text-anchor="middle">60</text><text x="914" y="220.8" text-anchor="middle">65</text><text x="964" y="220.8" text-anchor="middle">70</text><text x="1014" y="220.8" text-anchor="middle">75</text><text x="1064" y="220.8" text-anchor="middle">80</text><text x="1114" y="220.8" text-anchor="middle">85</text><text x="1164" y="220.8" text-anchor="middle">90</text></g><g clip-path="url(#rc2)" font-family="Liberation Mono,monospace" font-size="11.5" fill="#111" style="letter-spacing:-1.4px"><text transform="translate(203 890) rotate(-90)" text-anchor="middle">-5</text><text transform="translate(203 840) rotate(-90)" text-anchor="middle">0</text><text transform="translate(203 790) rotate(-90)" text-anchor="middle">5</text><text transform="translate(203 740) rotate(-90)" text-anchor="middle">10</text><text transform="translate(203 690) rotate(-90)" text-anchor="middle">15</text><text transform="translate(203 640) rotate(-90)" text-anchor="middle">20</text><text transform="translate(203 590) rotate(-90)" text-anchor="middle">25</text><text transform="translate(203 540) rotate(-90)" text-anchor="middle">30</text><text transform="translate(203 490) rotate(-90)" text-anchor="middle">35</text><text transform="translate(203 440) rotate(-90)" text-anchor="middle">40</text><text transform="translate(203 390) rotate(-90)" text-anchor="middle">45</text><text transform="translate(203 340) rotate(-90)" text-anchor="middle">50</text><text transform="translate(203 290) rotate(-90)" text-anchor="middle">55</text><text transform="translate(203 240) rotate(-90)" text-anchor="middle">60</text></g></svg><svg style="left:214px;top:232px" width="984" height="658" viewBox="214 232 984 658"><defs><pattern id="dots" x="214" y="240" width="10" height="10" patternUnits="userSpaceOnUse"><rect x="0" y="0" width="1" height="1" fill="#a6a6a6"/></pattern></defs><rect x="214" y="232" width="984" height="658" fill="#000"/><path d="M264.5 232 V890 M364.5 232 V890 M464.5 232 V890 M564.5 232 V890 M664.5 232 V890 M764.5 232 V890 M864.5 232 V890 M964.5 232 V890 M1064.5 232 V890 M1164.5 232 V890 M214 240.5 H1198 M214 340.5 H1198 M214 440.5 H1198 M214 540.5 H1198 M214 640.5 H1198 M214 740.5 H1198 M214 840.5 H1198" stroke="#3d3d3d" stroke-width="1" fill="none"/><rect x="214" y="232" width="984" height="658" fill="url(#dots)"/><path d="M244 840.5 H285 M264.5 820 V861" stroke="#c81818" stroke-width="1" fill="none"/><circle cx="264.5" cy="840.5" r="5" fill="none" stroke="#c81818" stroke-width="1"/></svg><div style="left:1198px;top:232px;width:14px;height:658px;background:#e3e1de;border-left:1px solid #d2cec9"></div><div style="left:1199px;top:232px;width:13px;height:13px;background:linear-gradient(90deg,#f6f5f3,#eceae7)"></div><svg style="left:1199px;top:232px" width="13" height="13" viewBox="0 0 13 13" ><path d="M6.5 4 l-4 4.5 h8z" fill="#555"/></svg><div style="left:1199px;top:245px;width:13px;height:336px;background:linear-gradient(90deg,#ffffff,#f1efec);border-bottom:1px solid #b9b5b0"></div><div style="left:1199px;top:581px;width:13px;height:296px;background:#e4e2df"></div><svg style="left:1214px;top:569px" width="2" height="18"><rect x="0" y="0" width="1" height="1" fill="#b3afaa"/><rect x="0" y="3" width="1" height="1" fill="#b3afaa"/><rect x="0" y="6" width="1" height="1" fill="#b3afaa"/><rect x="0" y="9" width="1" height="1" fill="#b3afaa"/><rect x="0" y="12" width="1" height="1" fill="#b3afaa"/><rect x="0" y="15" width="1" height="1" fill="#b3afaa"/></svg><div style="left:1199px;top:877px;width:13px;height:13px;background:linear-gradient(90deg,#f6f5f3,#eceae7)"></div><svg style="left:1199px;top:877px" width="13" height="13" viewBox="0 0 13 13" ><path d="M6.5 9 l-4 -4.5 h8z" fill="#555"/></svg><div style="left:191px;top:890px;width:23px;height:14px;background:#f1eeea;border:1px solid #b9b5b0;border-right:none;border-top:none"></div><div style="left:214px;top:890px;width:984px;height:14px;background:#e3e1de"></div><div style="left:214px;top:890px;width:13px;height:14px;background:linear-gradient(#f6f5f3,#eceae7)"></div><svg style="left:214px;top:890px" width="13" height="14" viewBox="0 0 13 14" ><path d="M4 7 l4.5 -4 v8z" fill="#555"/></svg><div style="left:227px;top:890px;width:352px;height:14px;background:#e4e2df;border-left:1px solid #cfcbc6;border-right:1px solid #a9a5a0"></div><div style="left:579px;top:890px;width:563px;height:14px;background:linear-gradient(#ffffff,#f2f0ed)"></div><div style="left:1142px;top:890px;width:1px;height:14px;background:#b9b5b0"></div><div style="left:1143px;top:890px;width:13px;height:14px;background:linear-gradient(#f6f5f3,#eceae7)"></div><svg style="left:1143px;top:890px" width="13" height="14" viewBox="0 0 13 14" ><path d="M9 7 l-4.5 -4 v8z" fill="#555"/></svg><div style="left:1156px;top:890px;width:56px;height:14px;background:#efebe7"></div><div class="t" style="left:1176px;top:892px;height:16px;line-height:16px;font-size:13px;letter-spacing:-1px;color:#111"><span class="L" style="font-size:13px;width:46.80px;transform:scaleX(0.7692);margin-right:-10.80px">1 &lt; 10</span></div><svg style="left:694px;top:906px" width="16" height="5"><rect x="0" y="0" width="1" height="1" fill="#b3afaa"/><rect x="3" y="0" width="1" height="1" fill="#b3afaa"/><rect x="6" y="0" width="1" height="1" fill="#b3afaa"/><rect x="9" y="0" width="1" height="1" fill="#b3afaa"/><rect x="12" y="0" width="1" height="1" fill="#b3afaa"/><rect x="15" y="0" width="1" height="1" fill="#b3afaa"/><rect x="0" y="3" width="1" height="1" fill="#b3afaa"/><rect x="3" y="3" width="1" height="1" fill="#b3afaa"/><rect x="6" y="3" width="1" height="1" fill="#b3afaa"/><rect x="9" y="3" width="1" height="1" fill="#b3afaa"/><rect x="12" y="3" width="1" height="1" fill="#b3afaa"/><rect x="15" y="3" width="1" height="1" fill="#b3afaa"/></svg><div style="left:191px;top:910px;width:1021px;height:40px;background:#fff;border-left:1px solid #a9a5a0;border-bottom:1px solid #a9a5a0;overflow:hidden"><div class="t" style="left:5px;top:-8px;height:14px;line-height:14px;font-size:13px;letter-spacing:-1px;color:#c83030">一部のプラグインはバージョン<span class="L" style="font-size:13px;width:39.00px;transform:scaleX(0.7692);margin-right:-9.00px"> 3.x </span>の削除を<span class="L" style="font-size:13px;width:187.20px;transform:scaleX(0.7692);margin-right:-43.20px"> Ver3.17 /usr/lib64/qcad</span></div><div class="t" style="left:5px;top:8px;height:14px;line-height:14px;font-size:13px;letter-spacing:-1px;color:#c83030">データベースのアップデートを強制する</div><div class="t" style="left:5px;top:22px;height:14px;line-height:14px;font-size:13px;letter-spacing:-1px;color:#2020c0;font-style:italic">コマンド<span class="L" style="font-size:13px;width:39.00px;transform:scaleX(0.7692);margin-right:-9.00px">: new</span></div></div><div style="left:1197px;top:911px;width:14px;height:38px;background:#eceae7;border-left:1px solid #d2cec9"></div><div style="left:1198px;top:911px;width:13px;height:13px;background:linear-gradient(90deg,#f6f5f3,#eceae7)"></div><svg style="left:1198px;top:911px" width="13" height="13" viewBox="0 0 13 13" ><path d="M6.5 4 l-4 4.5 h8z" fill="#555"/></svg><div style="left:1198px;top:924px;width:13px;height:12px;background:linear-gradient(90deg,#fdfdfc,#efedea);border-top:1px solid #cfcbc6;border-bottom:1px solid #cfcbc6"></div><div style="left:1198px;top:936px;width:13px;height:13px;background:linear-gradient(90deg,#f6f5f3,#eceae7)"></div><svg style="left:1198px;top:936px" width="13" height="13" viewBox="0 0 13 13" ><path d="M6.5 9 l-4 -4.5 h8z" fill="#555"/></svg><div style="left:191px;top:950px;width:1021px;height:26px;background:#fff;border-left:1px solid #a9a5a0;border-bottom:1px solid #a9a5a0"></div><div class="t" style="left:193px;top:958px;height:16px;line-height:16px;font-size:13px;letter-spacing:-1px;color:#111">コマンド<span class="L" style="font-size:13px;width:7.80px;transform:scaleX(0.7692);margin-right:-1.80px">:</span></div><div class="btn" style="left:1188px;top:952px;width:23px;height:23px;"></div><svg style="left:1192px;top:958px" width="15" height="11" viewBox="0 0 15 11" ><rect x=".5" y=".5" width="14" height="10" fill="#fff" stroke="#555" stroke-width="1"/><rect x="0" y="0" width="15" height="3" fill="#111"/></svg><div class="t" style="left:1222px;top:182px;height:16px;line-height:16px;font-size:13px;letter-spacing:-1px;color:#222">ブロックリスト</div><div style="left:1447px;top:181px;width:11px;height:11px;border:1px solid #8a8784;border-radius:2.5px;background:linear-gradient(#fafaf9,#e4e1de)"></div><svg style="left:1449px;top:183px" width="7" height="7" viewBox="0 0 7 7" ><rect x="2.5" y=".5" width="4" height="4" fill="#fff" stroke="#555" stroke-width="1"/><rect x=".5" y="2.5" width="4" height="4" fill="#fff" stroke="#555" stroke-width="1"/></svg><div style="left:1461px;top:181px;width:11px;height:11px;border:1px solid #8a8784;border-radius:2.5px;background:linear-gradient(#fafaf9,#e4e1de)"></div><svg style="left:1463px;top:183px" width="7" height="7" viewBox="0 0 7 7" ><path d="M.8 .8 L6.2 6.2 M6.2 .8 L.8 6.2" stroke="#444" stroke-width="1.8"/></svg><div class="btn" style="left:1218.5px;top:196px;width:30.5px;height:22px;"></div><svg style="left:1225.7px;top:199px" width="16" height="16" viewBox="0 0 24 24" ><g transform="scale(1)"><path d="M.8 12.6 Q3 7.5 8 5.6 Q13 3.8 18 6 Q21.5 7.8 23.3 11.6 Q22 15.6 18.6 17.8 L17.8 19.6 L16.2 18.6 L14.6 20 L13 18.8 L11 20 L9.6 18.6 L7.6 19.2 L7 17.4 Q3 16 .8 12.6 Z" fill="#000"/><path d="M5.6 11.5 Q8.8 8.6 12.5 8.6 Q16.2 8.6 18.8 11.2 Q16.4 14.8 12.2 14.8 Q8.4 14.8 5.6 11.5 Z" fill="#fff"/><circle cx="12.3" cy="11.4" r="3.5" fill="#000"/><circle cx="11.2" cy="10.2" r="1" fill="#fff" opacity=".55"/></g></svg><div class="btn" style="left:1250.5px;top:196px;width:30.5px;height:22px;"></div><svg style="left:1257.7px;top:199px" width="16" height="16" viewBox="0 0 24 24" ><g transform="scale(1)"><path d="M.8 12.6 Q3 7.5 8 5.6 Q13 3.8 18 6 Q21.5 7.8 23.3 11.6 Q22 15.6 18.6 17.8 L17.8 19.6 L16.2 18.6 L14.6 20 L13 18.8 L11 20 L9.6 18.6 L7.6 19.2 L7 17.4 Q3 16 .8 12.6 Z" fill="#a6a6a4"/><path d="M5.6 11.5 Q8.8 8.6 12.5 8.6 Q16.2 8.6 18.8 11.2 Q16.4 14.8 12.2 14.8 Q8.4 14.8 5.6 11.5 Z" fill="#fff"/><circle cx="12.3" cy="11.4" r="3.5" fill="#a6a6a4"/><circle cx="11.2" cy="10.2" r="1" fill="#fff" opacity=".55"/></g></svg><div class="btn" style="left:1282.5px;top:196px;width:30.5px;height:22px;"></div><svg style="left:1289.7px;top:199px" width="16" height="16" viewBox="0 0 24 24" ><path d="M9.5 2.5 h5 v7 h7 v5 h-7 v7 h-5 v-7 h-7 v-5 h7z" fill="#e01010" stroke="#a00808" stroke-width=".6"/></svg><div class="btn" style="left:1314.5px;top:196px;width:30.5px;height:22px;"></div><svg style="left:1321.7px;top:199px" width="16" height="16" viewBox="0 0 24 24" ><rect x="3" y="10" width="18" height="4.2" rx="1" fill="#a2a2a0"/></svg><div class="btn" style="left:1346.5px;top:196px;width:30.5px;height:22px;"></div><svg style="left:1353.7px;top:199px" width="16" height="16" viewBox="0 0 24 24" ><text x="1.5" y="18" font-family="Liberation Sans,sans-serif" font-size="15" fill="#7a7a78">a</text><path d="M11.3 3 V21" stroke="#7a7a78" stroke-width="1"/><text x="13.2" y="18" font-family="Liberation Sans,sans-serif" font-size="15" fill="#7a7a78">b</text></svg><div class="btn" style="left:1378.5px;top:196px;width:30.5px;height:22px;"></div><svg style="left:1385.7px;top:199px" width="16" height="16" viewBox="0 0 24 24" ><g transform="scale(1)"><path d="M3 21 L5.2 15.2 L17.5 2.9 Q19 1.8 20.6 3.4 Q22.2 5 21.1 6.5 L8.8 18.8 Z" fill="#e9bd55" stroke="#b07d22" stroke-width=".9" stroke-linejoin="round"/><path d="M17.5 2.9 Q19 1.8 20.6 3.4 Q22.2 5 21.1 6.5 L19 8.6 L15.4 5 Z" fill="#e0452c"/><path d="M3 21 L4.2 17.9 L6.1 19.8 Z" fill="#5a4a2a"/></g></svg><div class="btn" style="left:1410.5px;top:196px;width:30.5px;height:22px;"></div><svg style="left:1417.7px;top:199px" width="16" height="16" viewBox="0 0 24 24" ><rect x="5" y="1.5" width="14" height="21" fill="#e9e9e7" stroke="#cfcfcd"/><path d="M8 5 H12.5 Q15 5 15 8 V14 H18 L13.5 20 L9 14 H12 V9 Q12 8 11 8 H8Z" fill="#a4a4a2" stroke="#8e8e8c" stroke-width=".7"/></svg><div class="btn" style="left:1442.5px;top:196px;width:30.5px;height:22px;"></div><svg style="left:1449.7px;top:199px" width="16" height="16" viewBox="0 0 24 24" ><rect x="4" y="4.5" width="16" height="15.5" rx="2" fill="#e8694a" stroke="#d8502f" stroke-width="1"/><path d="M8.5 8.8 L15.5 15.8 M15.5 8.8 L8.5 15.8" stroke="#fff" stroke-width="2.4"/></svg><div style="left:1218px;top:219px;width:256px;height:137px;background:#fff;border:1px solid #a9a5a0"></div><svg style="left:1223px;top:222px" width="16" height="16" viewBox="0 0 24 24" ><g transform="scale(1)"><path d="M.8 12.6 Q3 7.5 8 5.6 Q13 3.8 18 6 Q21.5 7.8 23.3 11.6 Q22 15.6 18.6 17.8 L17.8 19.6 L16.2 18.6 L14.6 20 L13 18.8 L11 20 L9.6 18.6 L7.6 19.2 L7 17.4 Q3 16 .8 12.6 Z" fill="#000"/><path d="M5.6 11.5 Q8.8 8.6 12.5 8.6 Q16.2 8.6 18.8 11.2 Q16.4 14.8 12.2 14.8 Q8.4 14.8 5.6 11.5 Z" fill="#fff"/><circle cx="12.3" cy="11.4" r="3.5" fill="#000"/><circle cx="11.2" cy="10.2" r="1" fill="#fff" opacity=".55"/></g></svg><svg style="left:1245px;top:221px" width="15" height="15" viewBox="0 0 24 24" ><g transform="scale(1)"><path d="M3 21 L5.2 15.2 L17.5 2.9 Q19 1.8 20.6 3.4 Q22.2 5 21.1 6.5 L8.8 18.8 Z" fill="#e9bd55" stroke="#b07d22" stroke-width=".9" stroke-linejoin="round"/><path d="M17.5 2.9 Q19 1.8 20.6 3.4 Q22.2 5 21.1 6.5 L19 8.6 L15.4 5 Z" fill="#e0452c"/><path d="M3 21 L4.2 17.9 L6.1 19.8 Z" fill="#5a4a2a"/></g></svg><div class="t" style="left:1266px;top:225px;height:16px;line-height:16px;font-size:13px;letter-spacing:-1px;color:#111"><span class="L" style="font-size:13px;width:156.00px;transform:scaleX(0.7692);margin-right:-36.00px">Model (*Model_Space)</span></div><svg style="left:1223px;top:240px" width="16" height="16" viewBox="0 0 24 24" ><g transform="scale(1)"><path d="M.8 12.6 Q3 7.5 8 5.6 Q13 3.8 18 6 Q21.5 7.8 23.3 11.6 Q22 15.6 18.6 17.8 L17.8 19.6 L16.2 18.6 L14.6 20 L13 18.8 L11 20 L9.6 18.6 L7.6 19.2 L7 17.4 Q3 16 .8 12.6 Z" fill="#000"/><path d="M5.6 11.5 Q8.8 8.6 12.5 8.6 Q16.2 8.6 18.8 11.2 Q16.4 14.8 12.2 14.8 Q8.4 14.8 5.6 11.5 Z" fill="#fff"/><circle cx="12.3" cy="11.4" r="3.5" fill="#000"/><circle cx="11.2" cy="10.2" r="1" fill="#fff" opacity=".55"/></g></svg><div class="t" style="left:1266px;top:243px;height:16px;line-height:16px;font-size:13px;letter-spacing:-1px;color:#111"><span class="L" style="font-size:13px;width:171.60px;transform:scaleX(0.7692);margin-right:-39.60px">Layout1 (*Paper_Space)</span></div><svg style="left:1338px;top:357px" width="16" height="5"><rect x="0" y="0" width="1" height="1" fill="#b3afaa"/><rect x="3" y="0" width="1" height="1" fill="#b3afaa"/><rect x="6" y="0" width="1" height="1" fill="#b3afaa"/><rect x="9" y="0" width="1" height="1" fill="#b3afaa"/><rect x="12" y="0" width="1" height="1" fill="#b3afaa"/><rect x="15" y="0" width="1" height="1" fill="#b3afaa"/><rect x="0" y="3" width="1" height="1" fill="#b3afaa"/><rect x="3" y="3" width="1" height="1" fill="#b3afaa"/><rect x="6" y="3" width="1" height="1" fill="#b3afaa"/><rect x="9" y="3" width="1" height="1" fill="#b3afaa"/><rect x="12" y="3" width="1" height="1" fill="#b3afaa"/><rect x="15" y="3" width="1" height="1" fill="#b3afaa"/></svg><div class="t" style="left:1222px;top:368px;height:16px;line-height:16px;font-size:13px;letter-spacing:-1px;color:#222">画層リスト</div><div style="left:1447px;top:367px;width:11px;height:11px;border:1px solid #8a8784;border-radius:2.5px;background:linear-gradient(#fafaf9,#e4e1de)"></div><svg style="left:1449px;top:369px" width="7" height="7" viewBox="0 0 7 7" ><rect x="2.5" y=".5" width="4" height="4" fill="#fff" stroke="#555" stroke-width="1"/><rect x=".5" y="2.5" width="4" height="4" fill="#fff" stroke="#555" stroke-width="1"/></svg><div style="left:1461px;top:367px;width:11px;height:11px;border:1px solid #8a8784;border-radius:2.5px;background:linear-gradient(#fafaf9,#e4e1de)"></div><svg style="left:1463px;top:369px" width="7" height="7" viewBox="0 0 7 7" ><path d="M.8 .8 L6.2 6.2 M6.2 .8 L.8 6.2" stroke="#444" stroke-width="1.8"/></svg><div class="btn" style="left:1218.5px;top:382px;width:49.7px;height:22px;"></div><svg style="left:1235.5px;top:385px" width="16" height="16" viewBox="0 0 24 24" ><g transform="scale(1)"><path d="M.8 12.6 Q3 7.5 8 5.6 Q13 3.8 18 6 Q21.5 7.8 23.3 11.6 Q22 15.6 18.6 17.8 L17.8 19.6 L16.2 18.6 L14.6 20 L13 18.8 L11 20 L9.6 18.6 L7.6 19.2 L7 17.4 Q3 16 .8 12.6 Z" fill="#000"/><path d="M5.6 11.5 Q8.8 8.6 12.5 8.6 Q16.2 8.6 18.8 11.2 Q16.4 14.8 12.2 14.8 Q8.4 14.8 5.6 11.5 Z" fill="#fff"/><circle cx="12.3" cy="11.4" r="3.5" fill="#000"/><circle cx="11.2" cy="10.2" r="1" fill="#fff" opacity=".55"/></g></svg><div class="btn" style="left:1269.8px;top:382px;width:49.7px;height:22px;"></div><svg style="left:1286.8px;top:385px" width="16" height="16" viewBox="0 0 24 24" ><g transform="scale(1)"><path d="M.8 12.6 Q3 7.5 8 5.6 Q13 3.8 18 6 Q21.5 7.8 23.3 11.6 Q22 15.6 18.6 17.8 L17.8 19.6 L16.2 18.6 L14.6 20 L13 18.8 L11 20 L9.6 18.6 L7.6 19.2 L7 17.4 Q3 16 .8 12.6 Z" fill="#a6a6a4"/><path d="M5.6 11.5 Q8.8 8.6 12.5 8.6 Q16.2 8.6 18.8 11.2 Q16.4 14.8 12.2 14.8 Q8.4 14.8 5.6 11.5 Z" fill="#fff"/><circle cx="12.3" cy="11.4" r="3.5" fill="#a6a6a4"/><circle cx="11.2" cy="10.2" r="1" fill="#fff" opacity=".55"/></g></svg><div class="btn" style="left:1321.1px;top:382px;width:49.7px;height:22px;"></div><svg style="left:1338.1px;top:385px" width="16" height="16" viewBox="0 0 24 24" ><path d="M9.5 2.5 h5 v7 h7 v5 h-7 v7 h-5 v-7 h-7 v-5 h7z" fill="#e01010" stroke="#a00808" stroke-width=".6"/></svg><div class="btn" style="left:1372.4px;top:382px;width:49.7px;height:22px;"></div><svg style="left:1389.4px;top:385px" width="16" height="16" viewBox="0 0 24 24" ><rect x="3" y="10" width="18" height="4.2" rx="1" fill="#d01818"/></svg><div class="btn" style="left:1423.7px;top:382px;width:49.7px;height:22px;"></div><svg style="left:1440.7px;top:385px" width="16" height="16" viewBox="0 0 24 24" ><g transform="scale(1)"><path d="M3 21 L5.2 15.2 L17.5 2.9 Q19 1.8 20.6 3.4 Q22.2 5 21.1 6.5 L8.8 18.8 Z" fill="#e9bd55" stroke="#b07d22" stroke-width=".9" stroke-linejoin="round"/><path d="M17.5 2.9 Q19 1.8 20.6 3.4 Q22.2 5 21.1 6.5 L19 8.6 L15.4 5 Z" fill="#e0452c"/><path d="M3 21 L4.2 17.9 L6.1 19.8 Z" fill="#5a4a2a"/></g></svg><div style="left:1218px;top:404px;width:256px;height:572px;background:#fff;border:1px solid #a9a5a0"></div><div style="left:1219px;top:406px;width:254px;height:18px;background:#308cc6"></div><svg style="left:1222px;top:407px" width="16" height="16" viewBox="0 0 24 24" ><g transform="scale(1)"><path d="M.8 12.6 Q3 7.5 8 5.6 Q13 3.8 18 6 Q21.5 7.8 23.3 11.6 Q22 15.6 18.6 17.8 L17.8 19.6 L16.2 18.6 L14.6 20 L13 18.8 L11 20 L9.6 18.6 L7.6 19.2 L7 17.4 Q3 16 .8 12.6 Z" fill="#0d3a5c"/><path d="M5.6 11.5 Q8.8 8.6 12.5 8.6 Q16.2 8.6 18.8 11.2 Q16.4 14.8 12.2 14.8 Q8.4 14.8 5.6 11.5 Z" fill="#fff"/><circle cx="12.3" cy="11.4" r="3.5" fill="#0d3a5c"/><circle cx="11.2" cy="10.2" r="1" fill="#fff" opacity=".55"/></g></svg><svg style="left:1242px;top:408px" width="11" height="14" viewBox="0 0 11 14" ><path d="M2.5 6 V4.5 Q2.5 1 5.5 1 Q8.5 1 8.5 4.5 V6" fill="none" stroke="#8ea4b4" stroke-width="1.4"/><rect x="1" y="6" width="9" height="7.5" fill="#8ea4b4"/></svg><div class="t" style="left:1260px;top:410px;height:16px;line-height:16px;font-size:13px;letter-spacing:-1px;color:#fff"><span class="L" style="font-size:13px;width:7.80px;transform:scaleX(0.7692);margin-right:-1.80px">0</span></div><svg style="left:1484px;top:181px" width="16" height="5"><rect x="0" y="0" width="1" height="1" fill="#b3afaa"/><rect x="3" y="0" width="1" height="1" fill="#b3afaa"/><rect x="6" y="0" width="1" height="1" fill="#b3afaa"/><rect x="9" y="0" width="1" height="1" fill="#b3afaa"/><rect x="12" y="0" width="1" height="1" fill="#b3afaa"/><rect x="15" y="0" width="1" height="1" fill="#b3afaa"/><rect x="0" y="3" width="1" height="1" fill="#b3afaa"/><rect x="3" y="3" width="1" height="1" fill="#b3afaa"/><rect x="6" y="3" width="1" height="1" fill="#b3afaa"/><rect x="9" y="3" width="1" height="1" fill="#b3afaa"/><rect x="12" y="3" width="1" height="1" fill="#b3afaa"/><rect x="15" y="3" width="1" height="1" fill="#b3afaa"/></svg><div style="left:1478px;top:190px;width:29px;height:29px;border:1px solid #8b8885;background:linear-gradient(135deg,#a9a7a4,#d9d7d4 60%,#c4c2bf)"></div><svg style="left:1481px;top:193.5px" width="23" height="21" viewBox="0 0 24 22" ><rect x="1.5" y="1.5" width="21" height="19" fill="#fff" stroke="#b5b5b5" stroke-width="1"/><rect x="1.5" y="1.5" width="21" height="3.4" fill="#111"/><rect x="2.5" y="2.3" width="1.6" height="1.6" fill="#fff"/><path d="M8 9 l4 -2 v8 l-4 2z" fill="#9a9ab0" stroke="#777" stroke-width=".6"/><path d="M12 7.5 l5 -1.5 v8 l-5 1.5z" fill="#f0a0a0" stroke="#c06060" stroke-width=".6"/></svg><div style="left:1478px;top:220px;width:29px;height:29px;border:1px solid #8b8885;background:linear-gradient(135deg,#a9a7a4,#d9d7d4 60%,#c4c2bf)"></div><svg style="left:1481px;top:223.5px" width="23" height="21" viewBox="0 0 24 22" ><rect x="1.5" y="1.5" width="21" height="19" fill="#fff" stroke="#b5b5b5" stroke-width="1"/><rect x="1.5" y="1.5" width="21" height="3.4" fill="#111"/><rect x="2.5" y="2.3" width="1.6" height="1.6" fill="#fff"/><rect x="7" y="8" width="8" height="6" fill="#f6f0c8" stroke="#a09050" stroke-width=".8"/><circle cx="14" cy="14" r="3.6" fill="#f6f0c8" stroke="#a09050" stroke-width=".8"/></svg><div style="left:1484px;top:253px;width:17px;height:1px;background:#d0ccc7"></div><svg style="left:1481px;top:259.5px" width="23" height="21" viewBox="0 0 24 22" ><rect x="1.5" y="1.5" width="21" height="19" fill="#fff" stroke="#b5b5b5" stroke-width="1"/><rect x="1.5" y="1.5" width="21" height="3.4" fill="#111"/><rect x="2.5" y="2.3" width="1.6" height="1.6" fill="#fff"/><rect x="4" y="7.5" width="3" height="2.4" fill="#111"/><rect x="4" y="11.5" width="3" height="2.4" fill="#111"/><rect x="4" y="15.5" width="3" height="2.4" fill="#111"/><rect x="8.5" y="7.5" width="11" height="2.4" fill="#ddd" stroke="#aaa" stroke-width=".4"/><rect x="8.5" y="11.5" width="11" height="2.4" fill="#ddd" stroke="#aaa" stroke-width=".4"/><rect x="8.5" y="15.5" width="11" height="2.4" fill="#ddd" stroke="#aaa" stroke-width=".4"/></svg><div style="left:1478px;top:287px;width:29px;height:29px;border:1px solid #8b8885;background:linear-gradient(135deg,#a9a7a4,#d9d7d4 60%,#c4c2bf)"></div><svg style="left:1481px;top:290.5px" width="23" height="21" viewBox="0 0 24 22" ><rect x="1.5" y="1.5" width="21" height="19" fill="#fff" stroke="#b5b5b5" stroke-width="1"/><rect x="1.5" y="1.5" width="21" height="3.4" fill="#111"/><rect x="2.5" y="2.3" width="1.6" height="1.6" fill="#fff"/><rect x="9" y="9.5" width="9" height="5.5" fill="#666"/><path d="M4 12.3 h5 M6.5 8 v9" stroke="#d06060" stroke-width=".8"/></svg><div style="left:1484px;top:320px;width:17px;height:1px;background:#d0ccc7"></div><div style="left:1478px;top:324px;width:29px;height:29px;border:1px solid #8b8885;background:linear-gradient(135deg,#a9a7a4,#d9d7d4 60%,#c4c2bf)"></div><svg style="left:1481px;top:327.5px" width="23" height="21" viewBox="0 0 24 22" ><rect x="1.5" y="1.5" width="21" height="19" fill="#fff" stroke="#b5b5b5" stroke-width="1"/><rect x="1.5" y="1.5" width="21" height="3.4" fill="#111"/><rect x="2.5" y="2.3" width="1.6" height="1.6" fill="#fff"/><path d="M4 8.5 h9 M4 10.5 h7 M4 12.5 h10 M4 14.5 h8" stroke="#99a" stroke-width=".8"/><rect x="3" y="16.8" width="18" height="2.6" fill="#ddd" stroke="#999" stroke-width=".5"/></svg><div class="t" style="left:109px;top:993px;height:16px;line-height:16px;font-size:13px;letter-spacing:-1px;color:#111">投影ツールを表示</div><svg style="left:1497px;top:1008px" width="13" height="13" viewBox="0 0 13 13" ><rect x="0" y="12" width="1" height="1" fill="#b3afaa"/><rect x="3" y="9" width="1" height="1" fill="#b3afaa"/><rect x="3" y="12" width="1" height="1" fill="#b3afaa"/><rect x="6" y="6" width="1" height="1" fill="#b3afaa"/><rect x="6" y="9" width="1" height="1" fill="#b3afaa"/><rect x="6" y="12" width="1" height="1" fill="#b3afaa"/><rect x="9" y="3" width="1" height="1" fill="#b3afaa"/><rect x="9" y="6" width="1" height="1" fill="#b3afaa"/><rect x="9" y="9" width="1" height="1" fill="#b3afaa"/><rect x="9" y="12" width="1" height="1" fill="#b3afaa"/><rect x="12" y="0" width="1" height="1" fill="#b3afaa"/><rect x="12" y="3" width="1" height="1" fill="#b3afaa"/><rect x="12" y="6" width="1" height="1" fill="#b3afaa"/><rect x="12" y="9" width="1" height="1" fill="#b3afaa"/><rect x="12" y="12" width="1" height="1" fill="#b3afaa"/></svg>
<div style="left:1523px;top:52px;width:300px;height:944px;background:#efebe7;border:1px solid #b5b1ac;border-top-color:#d5d9e0;border-radius:2px 2px 0 0"></div><div class="t" style="left:1528px;top:58px;height:16px;line-height:16px;font-size:13px;letter-spacing:-1px;color:#222">ライブラリブラウザ</div><div style="left:1795px;top:57px;width:11px;height:11px;border:1px solid #8a8784;border-radius:2.5px;background:linear-gradient(#fafaf9,#e4e1de)"></div><svg style="left:1797px;top:59px" width="7" height="7" viewBox="0 0 7 7" ><rect x="2.5" y=".5" width="4" height="4" fill="#fff" stroke="#555" stroke-width="1"/><rect x=".5" y="2.5" width="4" height="4" fill="#fff" stroke="#555" stroke-width="1"/></svg><div style="left:1809px;top:57px;width:11px;height:11px;border:1px solid #8a8784;border-radius:2.5px;background:linear-gradient(#fafaf9,#e4e1de)"></div><svg style="left:1811px;top:59px" width="7" height="7" viewBox="0 0 7 7" ><path d="M.8 .8 L6.2 6.2 M6.2 .8 L.8 6.2" stroke="#444" stroke-width="1.8"/></svg><div style="left:1741px;top:84px;width:45px;height:24px;border:1px solid #c2beb9;border-bottom:none;border-radius:3px 3px 0 0;background:linear-gradient(#edebe8,#e2dfdb)"></div><div style="left:1673px;top:84px;width:69px;height:24px;border:1px solid #c2beb9;border-bottom:none;border-radius:3px 3px 0 0;background:linear-gradient(#edebe8,#e2dfdb)"></div><div style="left:1534px;top:108px;width:278px;height:851px;border:1px solid #c2beb9;background:#f6f3ef"></div><div style="left:1534px;top:82px;width:140px;height:27px;border:1px solid #c2beb9;border-bottom:none;border-radius:4px 4px 0 0;background:linear-gradient(#fdfcfb,#f6f3ef)"></div><svg style="left:1544px;top:84px" width="19" height="19" viewBox="0 0 24 24" ><path d="M2.5 3.5 H9.5 L11 5.5 H21 V19 H2.5Z" fill="#5f83b4" stroke="#46699a" stroke-width=".7"/><path d="M4.5 6.5 H19.5 V15 H4.5Z" fill="#f2f2ef"/><path d="M5 8 H20 V16 H5Z" fill="#dcdcd8"/><path d="M.8 9.8 H23.2 L21 21.2 H3Z" fill="url(#gFold)" stroke="#3f6ea8" stroke-width=".8"/><path d="M1.8 10.8 H22.2" stroke="#b9d4f0" stroke-width=".9"/></svg><div class="t" style="left:1566px;top:90px;height:16px;line-height:16px;font-size:13px;letter-spacing:-1px;color:#222">ファイルシステム</div><svg style="left:1685px;top:90px" width="15" height="10" viewBox="0 0 15 10" ><path d="M1 7 Q1 3 4 2.5 Q6 2 7.5 4 Q9 2 11 2.5 Q14 3 14 7 Q14 9 12 9 Q10.5 9 10 7.5 Q9.5 6 7.5 6 Q5.5 6 5 7.5 Q4.5 9 3 9 Q1 9 1 7Z" fill="#555"/><circle cx="3.2" cy="6.8" r="1.3" fill="#999"/><circle cx="11.8" cy="6.8" r="1.3" fill="#999"/></svg><div class="t" style="left:1704px;top:91px;height:16px;line-height:16px;font-size:13px;letter-spacing:-1px;color:#222">検索</div><svg style="left:1753px;top:88px" width="15" height="15" viewBox="0 0 15 15" ><path d="M7.5 .8 L9.6 5.4 L14.4 5.9 L10.8 9.2 L11.9 14 L7.5 11.5 L3.1 14 L4.2 9.2 L.6 5.9 L5.4 5.4Z" fill="#f8d838" stroke="#c89a10" stroke-width=".9" stroke-linejoin="round"/></svg><div style="left:1772px;top:86px;width:11px;height:20px;overflow:hidden"><div class="t" style="left:0px;top:5px;height:16px;line-height:16px;font-size:13px;letter-spacing:-1px;color:#222">お</div></div><div style="left:1783px;top:82px;width:15px;height:27px;border:1px solid #c9c5c0;border-radius:3px;background:linear-gradient(#fbfaf9,#ebe8e5)"></div><svg style="left:1786px;top:90px" width="8" height="10" viewBox="0 0 8 10" ><path d="M7 1 V9 L1.5 5Z" fill="#c9c6c2"/></svg><div style="left:1797px;top:82px;width:15px;height:27px;border:1px solid #b5b1ac;border-radius:3px;background:linear-gradient(#fdfdfc,#ebe8e5)"></div><svg style="left:1801px;top:90px" width="8" height="10" viewBox="0 0 8 10" ><path d="M1 1 V9 L6.5 5Z" fill="#222"/></svg><div style="left:1535px;top:110px;width:276px;height:22px;border:1px solid #a9a5a0;border-radius:3px;background:linear-gradient(#fdfdfc,#f0eeeb 60%,#e9e6e3)"></div><svg style="left:1540px;top:111px" width="18" height="18" viewBox="0 0 24 24" ><path d="M2.5 3.5 H9.5 L11 5.5 H21 V19 H2.5Z" fill="#5f83b4" stroke="#46699a" stroke-width=".7"/><path d="M4.5 6.5 H19.5 V15 H4.5Z" fill="#f2f2ef"/><path d="M5 8 H20 V16 H5Z" fill="#dcdcd8"/><path d="M.8 9.8 H23.2 L21 21.2 H3Z" fill="url(#gFold)" stroke="#3f6ea8" stroke-width=".8"/><path d="M1.8 10.8 H22.2" stroke="#b9d4f0" stroke-width=".9"/></svg><div class="t" style="left:1560px;top:116px;height:16px;line-height:16px;font-size:13px;letter-spacing:-1px;color:#111"><span class="L" style="font-size:13px;width:54.60px;transform:scaleX(0.7692);margin-right:-12.60px">electro</span></div><svg style="left:1795px;top:118px" width="10" height="6" viewBox="0 0 10 6" ><path d="M1 .5 H9 L5 5.5Z" fill="#444"/></svg><div style="left:1535px;top:138px;width:276px;height:112px;background:#fff;border:1px solid #b5b1ac"></div><div style="left:1536px;top:139px;width:274px;height:20px;background:linear-gradient(#fbfaf9,#ebe8e5);border-bottom:1px solid #bdb9b4"></div><div class="t" style="left:1556px;top:143px;height:16px;line-height:16px;font-size:13px;letter-spacing:-1px;color:#111"><span class="L" style="font-size:13px;width:31.20px;transform:scaleX(0.7692);margin-right:-7.20px">Name</span></div><div style="left:1536px;top:177px;width:274px;height:18px;background:#308cc6"></div><svg style="left:1541px;top:164px" width="10" height="8" viewBox="0 0 10 8" ><path d="M1 1 H9 L5 6.5Z" fill="#333"/></svg><svg style="left:1560px;top:160px" width="16" height="15" viewBox="0 0 16 15" ><rect x="1" y="1.5" width="6" height="3" fill="#6f9bd0"/><rect x="1" y="3" width="14" height="11" fill="url(#gFold)" /></svg><div class="t" style="left:1581px;top:163px;height:16px;line-height:16px;font-size:13px;letter-spacing:-1px;color:#111"><span class="L" style="font-size:13px;width:54.60px;transform:scaleX(0.7692);margin-right:-12.60px">electro</span></div><svg style="left:1580px;top:178px" width="16" height="15" viewBox="0 0 16 15" ><rect x="1" y="1.5" width="6" height="3" fill="#6f9bd0"/><rect x="1" y="3" width="14" height="11" fill="url(#gFold)"  opacity=".8"/></svg><div class="t" style="left:1601px;top:181px;height:16px;line-height:16px;font-size:13px;letter-spacing:-1px;color:#fff"><span class="L" style="font-size:13px;width:109.20px;transform:scaleX(0.7692);margin-right:-25.20px">electro-vacuum</span></div><svg style="left:1562px;top:199px" width="8" height="10" viewBox="0 0 8 10" ><path d="M1.5 1 V9 L6.5 5Z" fill="#333"/></svg><svg style="left:1580px;top:196px" width="16" height="15" viewBox="0 0 16 15" ><rect x="1" y="1.5" width="6" height="3" fill="#6f9bd0"/><rect x="1" y="3" width="14" height="11" fill="url(#gFold)" /></svg><div class="t" style="left:1601px;top:199px;height:16px;line-height:16px;font-size:13px;letter-spacing:-1px;color:#111"><span class="L" style="font-size:13px;width:140.40px;transform:scaleX(0.7692);margin-right:-32.40px">electro-vacuum-iso</span></div><svg style="left:1562px;top:217px" width="8" height="10" viewBox="0 0 8 10" ><path d="M1.5 1 V9 L6.5 5Z" fill="#333"/></svg><svg style="left:1580px;top:214px" width="16" height="15" viewBox="0 0 16 15" ><rect x="1" y="1.5" width="6" height="3" fill="#6f9bd0"/><rect x="1" y="3" width="14" height="11" fill="url(#gFold)" /></svg><div class="t" style="left:1601px;top:217px;height:16px;line-height:16px;font-size:13px;letter-spacing:-1px;color:#111"><span class="L" style="font-size:13px;width:85.80px;transform:scaleX(0.7692);margin-right:-19.80px">electronics</span></div><svg style="left:1562px;top:235px" width="8" height="10" viewBox="0 0 8 10" ><path d="M1.5 1 V9 L6.5 5Z" fill="#333"/></svg><svg style="left:1580px;top:232px" width="16" height="15" viewBox="0 0 16 15" ><rect x="1" y="1.5" width="6" height="3" fill="#6f9bd0"/><rect x="1" y="3" width="14" height="11" fill="url(#gFold)" /></svg><div class="t" style="left:1601px;top:235px;height:16px;line-height:16px;font-size:13px;letter-spacing:-1px;color:#111"><span class="L" style="font-size:13px;width:117.00px;transform:scaleX(0.7692);margin-right:-27.00px">electronics-iso</span></div><svg style="left:1665px;top:251px" width="16" height="5"><rect x="0" y="0" width="1" height="1" fill="#b3afaa"/><rect x="3" y="0" width="1" height="1" fill="#b3afaa"/><rect x="6" y="0" width="1" height="1" fill="#b3afaa"/><rect x="9" y="0" width="1" height="1" fill="#b3afaa"/><rect x="12" y="0" width="1" height="1" fill="#b3afaa"/><rect x="15" y="0" width="1" height="1" fill="#b3afaa"/><rect x="0" y="3" width="1" height="1" fill="#b3afaa"/><rect x="3" y="3" width="1" height="1" fill="#b3afaa"/><rect x="6" y="3" width="1" height="1" fill="#b3afaa"/><rect x="9" y="3" width="1" height="1" fill="#b3afaa"/><rect x="12" y="3" width="1" height="1" fill="#b3afaa"/><rect x="15" y="3" width="1" height="1" fill="#b3afaa"/></svg><div style="left:1535px;top:255px;width:276px;height:703px;background:#fff;border:1px solid #b5b1ac"></div><svg style="left:1548px;top:257px" width="48" height="48" viewBox="0 0 48 48" ><circle cx="24" cy="23.7" r="14.3" fill="none" stroke="#111" stroke-width="1.25"/><path d="M24 1.9 V15.9 M19.8 15.9 h8.4" fill="none" stroke="#5e5e5e" stroke-width="1.2" /><path d="M19.9 38 Q19.9 33.4 24 33.4 Q28.1 33.4 28.1 38" fill="none" stroke="#111" stroke-width="1.8" /><path d="M19.9 38 V45.7" fill="none" stroke="#5e5e5e" stroke-width="1.2" /><path d="M28.1 38 V45.7" fill="none" stroke="#5e5e5e" stroke-width="1.2" /></svg><div class="t" style="left:1542px;top:309px;height:16px;line-height:16px;font-size:13px;letter-spacing:-1px;width:60px;text-align:center;color:#111"><span class="L" style="font-size:13px;width:31.20px;transform:scaleX(0.7692);margin-right:-7.20px">evd1</span></div><svg style="left:1620px;top:257px" width="48" height="48" viewBox="0 0 48 48" ><circle cx="24" cy="23.7" r="14.3" fill="none" stroke="#111" stroke-width="1.25"/><path d="M19 1.9 V15.9 M15.8 15.9 h6.4" fill="none" stroke="#5e5e5e" stroke-width="1.2" /><path d="M29 1.9 V15.9 M25.8 15.9 h6.4" fill="none" stroke="#5e5e5e" stroke-width="1.2" /><path d="M11 23.7 H37" fill="none" stroke="#5e5e5e" stroke-width="1.6" stroke-dasharray="3.6 2"/><path d="M1.5 23.7 H9.7" fill="none" stroke="#5e5e5e" stroke-width="1.6" /><path d="M38.3 23.7 H46.2" fill="none" stroke="#5e5e5e" stroke-width="1.6" /><path d="M14.8 35.8 Q14.8 31.2 19.4 31.2 Q24 31.2 24 35.8" fill="none" stroke="#111" stroke-width="2.6" /><path d="M13.9 35.8 V45.7" fill="none" stroke="#777" stroke-width="1" /><path d="M15.7 35.8 V45.7" fill="none" stroke="#777" stroke-width="1" /><path d="M23.1 35.8 V45.7" fill="none" stroke="#777" stroke-width="1" /><path d="M24.9 35.8 V45.7" fill="none" stroke="#777" stroke-width="1" /><path d="M25 35.8 Q25 31.2 29.6 31.2 Q34.2 31.2 34.2 35.8" fill="none" stroke="#111" stroke-width="2.6" /><path d="M24.1 35.8 V45.7" fill="none" stroke="#777" stroke-width="1" /><path d="M25.9 35.8 V45.7" fill="none" stroke="#777" stroke-width="1" /><path d="M33.3 35.8 V45.7" fill="none" stroke="#777" stroke-width="1" /><path d="M35.1 35.8 V45.7" fill="none" stroke="#777" stroke-width="1" /></svg><div class="t" style="left:1614px;top:309px;height:16px;line-height:16px;font-size:13px;letter-spacing:-1px;width:60px;text-align:center;color:#111"><span class="L" style="font-size:13px;width:39.00px;transform:scaleX(0.7692);margin-right:-9.00px">evd10</span></div><svg style="left:1692px;top:257px" width="48" height="48" viewBox="0 0 48 48" ><circle cx="24" cy="23.7" r="14.3" fill="none" stroke="#111" stroke-width="1.25"/><path d="M19.3 1.9 V15.9 M16.7 15.9 h5.2" fill="none" stroke="#5e5e5e" stroke-width="1.2" /><path d="M24 1.9 V15.9 M21.8 15.9 h4.4" fill="none" stroke="#5e5e5e" stroke-width="1.2" /><path d="M28.9 1.9 V15.9 M26.3 15.9 h5.2" fill="none" stroke="#5e5e5e" stroke-width="1.2" /><path d="M11 23.7 H37" fill="none" stroke="#5e5e5e" stroke-width="1.6" stroke-dasharray="3.6 2"/><path d="M1.7 23.7 H9.7" fill="none" stroke="#5e5e5e" stroke-width="1.6" /><path d="M38.3 23.7 H46" fill="none" stroke="#5e5e5e" stroke-width="1.6" /><path d="M24 15.9 V32" fill="none" stroke="#5e5e5e" stroke-width="1.5" stroke-dasharray="3 1.5"/><path d="M19.1 36.6 Q19.1 32 24 32 Q28.9 32 28.9 36.6" fill="none" stroke="#111" stroke-width="2.8" /><path d="M18.2 36.6 V45.7" fill="none" stroke="#777" stroke-width="1" /><path d="M20 36.6 V45.7" fill="none" stroke="#777" stroke-width="1" /><path d="M28 36.6 V45.7" fill="none" stroke="#777" stroke-width="1" /><path d="M29.8 36.6 V45.7" fill="none" stroke="#777" stroke-width="1" /></svg><div class="t" style="left:1686px;top:309px;height:16px;line-height:16px;font-size:13px;letter-spacing:-1px;width:60px;text-align:center;color:#111"><span class="L" style="font-size:13px;width:39.00px;transform:scaleX(0.7692);margin-right:-9.00px">evd11</span></div><svg style="left:1548px;top:329px" width="48" height="48" viewBox="0 0 48 48" ><rect x="11.8" y="8.2" width="24.4" height="31" rx="12.2" fill="none" stroke="#111" stroke-width="1.7"/><path d="M24 1.6 V13.3 M20.8 13.3 h6.4" fill="none" stroke="#5e5e5e" stroke-width="1.2" /><path d="M16 20.2 H32" fill="none" stroke="#5e5e5e" stroke-width="1.2" stroke-dasharray="3.6 2"/><path d="M36 20.2 H42.9" fill="none" stroke="#5e5e5e" stroke-width="1.2" /><path d="M16 27.3 H32" fill="none" stroke="#5e5e5e" stroke-width="1.2" stroke-dasharray="3.6 2"/><path d="M5 27.3 H12" fill="none" stroke="#5e5e5e" stroke-width="1.2" /><path d="M20.6 40.2 Q20.6 35.6 24 35.6 Q27.4 35.6 27.4 40.2" fill="none" stroke="#111" stroke-width="2" /><path d="M20.6 40.2 V46.1" fill="none" stroke="#5e5e5e" stroke-width="1.2" /><path d="M27.4 40.2 V46.1" fill="none" stroke="#5e5e5e" stroke-width="1.2" /></svg><div class="t" style="left:1542px;top:381px;height:16px;line-height:16px;font-size:13px;letter-spacing:-1px;width:60px;text-align:center;color:#111"><span class="L" style="font-size:13px;width:39.00px;transform:scaleX(0.7692);margin-right:-9.00px">evd12</span></div><svg style="left:1620px;top:329px" width="48" height="48" viewBox="0 0 48 48" ><rect x="11.8" y="8.2" width="24.4" height="31" rx="12.2" fill="none" stroke="#111" stroke-width="1.7"/><path d="M24 1.6 V13.3 M20.8 13.3 h6.4" fill="none" stroke="#5e5e5e" stroke-width="1.2" /><path d="M15.5 18.9 H32.5" fill="none" stroke="#5e5e5e" stroke-width="1.5" stroke-dasharray="3.6 2"/><path d="M15.5 23.9 H32.5" fill="none" stroke="#5e5e5e" stroke-width="1.5" stroke-dasharray="3.6 2"/><path d="M15.5 28.9 H32.5" fill="none" stroke="#5e5e5e" stroke-width="1.5" stroke-dasharray="3.6 2"/><path d="M5 18.9 H12" fill="none" stroke="#5e5e5e" stroke-width="1.5" /><path d="M36 23.9 H42.9" fill="none" stroke="#5e5e5e" stroke-width="1.5" /><path d="M5 28.9 H12" fill="none" stroke="#5e5e5e" stroke-width="1.5" /><path d="M20.4 39.2 Q20.4 34.6 24 34.6 Q27.6 34.6 27.6 39.2" fill="none" stroke="#111" stroke-width="1.6" /><path d="M19.5 39.2 V46.1" fill="none" stroke="#777" stroke-width="1" /><path d="M21.3 39.2 V46.1" fill="none" stroke="#777" stroke-width="1" /><path d="M27.6 39.2 V46.1" fill="none" stroke="#5e5e5e" stroke-width="1.2" /><path d="M18.6 38 Q18.6 32.6 24 32.6 Q29.4 32.6 29.4 38" fill="none" stroke="#111" stroke-width="1" /></svg><div class="t" style="left:1614px;top:381px;height:16px;line-height:16px;font-size:13px;letter-spacing:-1px;width:60px;text-align:center;color:#111"><span class="L" style="font-size:13px;width:39.00px;transform:scaleX(0.7692);margin-right:-9.00px">evd13</span></div><div style="left:1692px;top:329px;width:48px;height:48px;background:#b9d7ec"></div><div style="left:1698px;top:379px;width:36px;height:15px;background:#308cc6"></div><svg style="left:1692px;top:329px" width="48" height="48" viewBox="0 0 48 48" ><rect x="11.8" y="8.2" width="24.4" height="31" rx="12.2" fill="none" stroke="#0c3552" stroke-width="1.7"/><path d="M24 1.6 V13.3 M20.8 13.3 h6.4" fill="none" stroke="#4a6a86" stroke-width="1.2" /><path d="M15.5 18.9 H32.5" fill="none" stroke="#4a6a86" stroke-width="1.5" stroke-dasharray="3.6 2"/><path d="M15.5 23.9 H32.5" fill="none" stroke="#4a6a86" stroke-width="1.5" stroke-dasharray="3.6 2"/><path d="M15.5 28.9 H32.5" fill="none" stroke="#4a6a86" stroke-width="1.5" stroke-dasharray="3.6 2"/><path d="M36 23.9 H42.9" fill="none" stroke="#4a6a86" stroke-width="1.5" /><path d="M5 28.9 H12" fill="none" stroke="#4a6a86" stroke-width="1.5" /><path d="M34.6 18 Q35.5 30 29.6 37" fill="none" stroke="#0c3552" stroke-width="0.9" /><path d="M20.4 39.2 Q20.4 34.6 24 34.6 Q27.6 34.6 27.6 39.2" fill="none" stroke="#0c3552" stroke-width="1.6" /><path d="M19.5 39.2 V46.1" fill="none" stroke="#5a7a96" stroke-width="1" /><path d="M21.3 39.2 V46.1" fill="none" stroke="#5a7a96" stroke-width="1" /><path d="M27.6 39.2 V46.1" fill="none" stroke="#4a6a86" stroke-width="1.2" /><path d="M18.6 38 Q18.6 32.6 24 32.6 Q29.4 32.6 29.4 38" fill="none" stroke="#0c3552" stroke-width="1" /></svg><div class="t" style="left:1686px;top:381px;height:16px;line-height:16px;font-size:13px;letter-spacing:-1px;width:60px;text-align:center;color:#fff"><span class="L" style="font-size:13px;width:39.00px;transform:scaleX(0.7692);margin-right:-9.00px">evd14</span></div><svg style="left:1548px;top:401px" width="48" height="48" viewBox="0 0 48 48" ><circle cx="24" cy="23.7" r="14.3" fill="none" stroke="#111" stroke-width="1.25"/><path d="M24 1.9 V15.9 M19.8 15.9 h8.4" fill="none" stroke="#5e5e5e" stroke-width="1.2" /><circle cx="30.9" cy="27.8" r="2.5" fill="#111"/><path d="M12.6 31.4 H34.4" fill="none" stroke="#5e5e5e" stroke-width="1.2" /><path d="M24 33.4 V45.7" fill="none" stroke="#5e5e5e" stroke-width="1.2" /></svg><div class="t" style="left:1542px;top:453px;height:16px;line-height:16px;font-size:13px;letter-spacing:-1px;width:60px;text-align:center;color:#111"><span class="L" style="font-size:13px;width:39.00px;transform:scaleX(0.7692);margin-right:-9.00px">evd15</span></div><svg style="left:1620px;top:401px" width="48" height="48" viewBox="0 0 48 48" ><circle cx="24" cy="23.7" r="14.3" fill="none" stroke="#111" stroke-width="1.25"/><path d="M24 1.9 V15.9 M19.8 15.9 h8.4" fill="none" stroke="#5e5e5e" stroke-width="1.2" /><path d="M14.7 29.3 Q23.8 38.5 32.9 29.3" fill="none" stroke="#111" stroke-width="1.1" /><path d="M24 34 V45.7" fill="none" stroke="#5e5e5e" stroke-width="1.2" /></svg><div class="t" style="left:1614px;top:453px;height:16px;line-height:16px;font-size:13px;letter-spacing:-1px;width:60px;text-align:center;color:#111"><span class="L" style="font-size:13px;width:39.00px;transform:scaleX(0.7692);margin-right:-9.00px">evd16</span></div><svg style="left:1692px;top:401px" width="48" height="48" viewBox="0 0 48 48" ><circle cx="24" cy="23.7" r="14.3" fill="none" stroke="#111" stroke-width="1.25"/><path d="M24 1.9 V16" fill="none" stroke="#5e5e5e" stroke-width="1.2" /><path d="M20 18.5 L27.8 14.6" fill="none" stroke="#111" stroke-width="1" /><circle cx="31" cy="20" r="2.5" fill="#111"/><circle cx="23.9" cy="31.4" r="2.1" fill="#fff" stroke="#111" stroke-width="1.1"/><path d="M24 33.6 V45.7" fill="none" stroke="#5e5e5e" stroke-width="1.2" /></svg><div class="t" style="left:1686px;top:453px;height:16px;line-height:16px;font-size:13px;letter-spacing:-1px;width:60px;text-align:center;color:#111"><span class="L" style="font-size:13px;width:39.00px;transform:scaleX(0.7692);margin-right:-9.00px">evd17</span></div><svg style="left:1548px;top:473px" width="48" height="48" viewBox="0 0 48 48" ><rect x="11.8" y="8.2" width="24.4" height="31" rx="12.2" fill="none" stroke="#111" stroke-width="1.7"/><path d="M24 1.6 V13.3 M20.8 13.3 h6.4" fill="none" stroke="#5e5e5e" stroke-width="1.2" /><path d="M16 17.2 H32" fill="none" stroke="#5e5e5e" stroke-width="1.4" stroke-dasharray="3.6 2"/><path d="M16 20.4 H32" fill="none" stroke="#5e5e5e" stroke-width="1.4" stroke-dasharray="3.6 2"/><path d="M16 24.1 H32" fill="none" stroke="#5e5e5e" stroke-width="1.4" stroke-dasharray="3.6 2"/><path d="M16 27.6 H32" fill="none" stroke="#5e5e5e" stroke-width="1.4" stroke-dasharray="3.6 2"/><path d="M16 30.8 H32" fill="none" stroke="#5e5e5e" stroke-width="1.4" stroke-dasharray="3.6 2"/><path d="M36 17.2 H42.9" fill="none" stroke="#5e5e5e" stroke-width="1.2" /><path d="M5 20.4 H12" fill="none" stroke="#111" stroke-width="1.1" /><path d="M5 27.6 H12" fill="none" stroke="#111" stroke-width="1.1" /><path d="M5 30.8 H12" fill="none" stroke="#111" stroke-width="1.1" /><path d="M34 17.8 V24.3" fill="none" stroke="#5e5e5e" stroke-width="2" /><path d="M20.6 40.4 Q20.6 35.8 24 35.8 Q27.4 35.8 27.4 40.4" fill="none" stroke="#111" stroke-width="2" /><path d="M20.6 40.4 V46.1" fill="none" stroke="#5e5e5e" stroke-width="1.2" /><path d="M27.4 40.4 V46.1" fill="none" stroke="#5e5e5e" stroke-width="1.2" /></svg><div class="t" style="left:1542px;top:525px;height:16px;line-height:16px;font-size:13px;letter-spacing:-1px;width:60px;text-align:center;color:#111"><span class="L" style="font-size:13px;width:39.00px;transform:scaleX(0.7692);margin-right:-9.00px">evd18</span></div><svg style="left:1620px;top:473px" width="48" height="48" viewBox="0 0 48 48" ><rect x="11.8" y="8.2" width="24.4" height="31" rx="12.2" fill="none" stroke="#111" stroke-width="1.7"/><path d="M20.6 1.6 V18.5" fill="none" stroke="#111" stroke-width="1.1" /><path d="M27 1.6 V13.3 M24.4 13.3 h5.2" fill="none" stroke="#5e5e5e" stroke-width="1.2" /><path d="M17.3 18.9 H33.6" fill="none" stroke="#5e5e5e" stroke-width="1.6" stroke-dasharray="3.6 2"/><path d="M24 22.4 H34" fill="none" stroke="#5e5e5e" stroke-width="1.4" stroke-dasharray="3.6 2"/><path d="M36 22.4 H42.6" fill="none" stroke="#111" stroke-width="1.1" /><path d="M5 25.6 H13" fill="none" stroke="#111" stroke-width="1.1" /><path d="M13 25.6 H24" fill="none" stroke="#111" stroke-width="1.1" stroke-dasharray="3.6 2"/><path d="M24 28.9 H34" fill="none" stroke="#5e5e5e" stroke-width="1.6" stroke-dasharray="3.6 2"/><path d="M36 28.9 H42.6" fill="none" stroke="#5e5e5e" stroke-width="1.6" /><path d="M33.6 18.5 Q35 30 30 36" fill="none" stroke="#111" stroke-width="0.9" /><path d="M20.4 39.2 Q20.4 34.6 24 34.6 Q27.6 34.6 27.6 39.2" fill="none" stroke="#111" stroke-width="1.6" /><path d="M19.5 39.2 V46.1" fill="none" stroke="#777" stroke-width="1" /><path d="M21.3 39.2 V46.1" fill="none" stroke="#777" stroke-width="1" /><path d="M27.6 39.2 V46.1" fill="none" stroke="#5e5e5e" stroke-width="1.2" /><path d="M18.6 38 Q18.6 32.6 24 32.6 Q29.4 32.6 29.4 38" fill="none" stroke="#111" stroke-width="1" /></svg><div class="t" style="left:1614px;top:525px;height:16px;line-height:16px;font-size:13px;letter-spacing:-1px;width:60px;text-align:center;color:#111"><span class="L" style="font-size:13px;width:39.00px;transform:scaleX(0.7692);margin-right:-9.00px">evd19</span></div><svg style="left:1692px;top:473px" width="48" height="48" viewBox="0 0 48 48" ><circle cx="24" cy="23.7" r="14.3" fill="none" stroke="#111" stroke-width="1.25"/><path d="M24 1.6 V15.9 M19.6 15.9 h8.8" fill="none" stroke="#5e5e5e" stroke-width="1.2" /><path d="M19.6 37 Q19.6 32.4 24 32.4 Q28.4 32.4 28.4 37" fill="none" stroke="#111" stroke-width="2" /><path d="M18.7 37 V46.1" fill="none" stroke="#777" stroke-width="1" /><path d="M20.5 37 V46.1" fill="none" stroke="#777" stroke-width="1" /><path d="M28.4 37 V46.1" fill="none" stroke="#5e5e5e" stroke-width="1.2" /><path d="M18.2 37 Q18.2 30.6 24 30.6 Q29.8 30.6 29.8 37" fill="none" stroke="#111" stroke-width="1" /><path d="M17 37 V46.1" fill="none" stroke="#777" stroke-width="1" /></svg><div class="t" style="left:1686px;top:525px;height:16px;line-height:16px;font-size:13px;letter-spacing:-1px;width:60px;text-align:center;color:#111"><span class="L" style="font-size:13px;width:31.20px;transform:scaleX(0.7692);margin-right:-7.20px">evd2</span></div><svg style="left:1548px;top:545px" width="48" height="48" viewBox="0 0 48 48" ><circle cx="24" cy="23.7" r="14.3" fill="none" stroke="#111" stroke-width="1.25"/><path d="M24 1.9 V15.9 M19.8 15.9 h8.4" fill="none" stroke="#5e5e5e" stroke-width="1.2" /><circle cx="30.9" cy="30.1" r="2.5" fill="#111"/><path d="M19.9 38 Q19.9 33.4 24 33.4 Q28.1 33.4 28.1 38" fill="none" stroke="#111" stroke-width="1.8" /><path d="M19.9 38 V45.7" fill="none" stroke="#5e5e5e" stroke-width="1.2" /><path d="M28.1 38 V45.7" fill="none" stroke="#5e5e5e" stroke-width="1.2" /></svg><div class="t" style="left:1542px;top:597px;height:16px;line-height:16px;font-size:13px;letter-spacing:-1px;width:60px;text-align:center;color:#111"><span class="L" style="font-size:13px;width:39.00px;transform:scaleX(0.7692);margin-right:-9.00px">evd20</span></div><svg style="left:1620px;top:545px" width="48" height="48" viewBox="0 0 48 48" ><circle cx="24" cy="23.7" r="14.3" fill="none" stroke="#111" stroke-width="1.25"/><path d="M19 1.9 V15.9 M15.8 15.9 h6.4" fill="none" stroke="#5e5e5e" stroke-width="1.2" /><path d="M29 1.9 V15.9 M25.8 15.9 h6.4" fill="none" stroke="#5e5e5e" stroke-width="1.2" /><circle cx="31.9" cy="30.1" r="2.5" fill="#111"/><path d="M19.9 38 Q19.9 33.4 24 33.4 Q28.1 33.4 28.1 38" fill="none" stroke="#111" stroke-width="1.8" /><path d="M19.9 38 V45.7" fill="none" stroke="#5e5e5e" stroke-width="1.2" /><path d="M28.1 38 V45.7" fill="none" stroke="#5e5e5e" stroke-width="1.2" /></svg><div class="t" style="left:1614px;top:597px;height:16px;line-height:16px;font-size:13px;letter-spacing:-1px;width:60px;text-align:center;color:#111"><span class="L" style="font-size:13px;width:39.00px;transform:scaleX(0.7692);margin-right:-9.00px">evd21</span></div><svg style="left:1692px;top:545px" width="48" height="48" viewBox="0 0 48 48" ><rect x="8.65" y="8.75" width="23.9" height="29.3" rx="11.95" fill="none" stroke="#111" stroke-width="1.7"/><path d="M20.6 1.9 V13.9 M17.4 13.9 h6.4" fill="none" stroke="#5e5e5e" stroke-width="1.2" /><path d="M13 23.7 H32" fill="none" stroke="#5e5e5e" stroke-width="1.2" stroke-dasharray="3.6 2"/><path d="M32.6 23.7 H39.4" fill="none" stroke="#5e5e5e" stroke-width="1.2" /><circle cx="27.5" cy="30.5" r="2.2" fill="#111"/><path d="M17.2 39 Q17.2 34.4 20.6 34.4 Q24 34.4 24 39" fill="none" stroke="#111" stroke-width="1.5" /><path d="M16.3 39 V45.7" fill="none" stroke="#777" stroke-width="1" /><path d="M18.1 39 V45.7" fill="none" stroke="#777" stroke-width="1" /><path d="M24 39 V45.7" fill="none" stroke="#5e5e5e" stroke-width="1.2" /><path d="M15.6 37.6 Q15.6 32.6 20.6 32.6 Q25.6 32.6 25.6 37.6" fill="none" stroke="#111" stroke-width="1" /></svg><div class="t" style="left:1686px;top:597px;height:16px;line-height:16px;font-size:13px;letter-spacing:-1px;width:60px;text-align:center;color:#111"><span class="L" style="font-size:13px;width:39.00px;transform:scaleX(0.7692);margin-right:-9.00px">evd22</span></div><svg style="left:1548px;top:617px" width="48" height="48" viewBox="0 0 48 48" ><rect x="8.25" y="8.5" width="24.3" height="30.4" rx="12.15" fill="none" stroke="#111" stroke-width="1.7"/><path d="M20.6 1.6 V13.7 M17.4 13.7 h6.4" fill="none" stroke="#5e5e5e" stroke-width="1.2" /><path d="M12.5 24 H32" fill="none" stroke="#5e5e5e" stroke-width="1.2" stroke-dasharray="3.6 2"/><path d="M32.5 24 H39.8" fill="none" stroke="#5e5e5e" stroke-width="1.2" /><circle cx="27.3" cy="30.4" r="2.2" fill="#111"/><circle cx="20.6" cy="34.1" r="1.9" fill="#fff" stroke="#111" stroke-width="1.1"/><path d="M20.6 36 V46.1" fill="none" stroke="#5e5e5e" stroke-width="1.2" /></svg><div class="t" style="left:1542px;top:669px;height:16px;line-height:16px;font-size:13px;letter-spacing:-1px;width:60px;text-align:center;color:#111"><span class="L" style="font-size:13px;width:39.00px;transform:scaleX(0.7692);margin-right:-9.00px">evd23</span></div><svg style="left:1620px;top:617px" width="48" height="48" viewBox="0 0 48 48" ><circle cx="19.9" cy="23.7" r="14" fill="none" stroke="#111" stroke-width="1.25"/><path d="M19.9 1.6 V15.9 M15.7 15.9 h8.4" fill="none" stroke="#5e5e5e" stroke-width="1.2" /><path d="M10.5 24 H33.5" fill="none" stroke="#5e5e5e" stroke-width="1.2" stroke-dasharray="3.6 2"/><path d="M33.9 24 H42" fill="none" stroke="#5e5e5e" stroke-width="1.2" /><circle cx="27.1" cy="28" r="2.5" fill="#111"/><path d="M8.2 31.2 H31.6" fill="none" stroke="#5e5e5e" stroke-width="1.2" /><path d="M19.9 31.2 V46.1" fill="none" stroke="#5e5e5e" stroke-width="1.2" /></svg><div class="t" style="left:1614px;top:669px;height:16px;line-height:16px;font-size:13px;letter-spacing:-1px;width:60px;text-align:center;color:#111"><span class="L" style="font-size:13px;width:39.00px;transform:scaleX(0.7692);margin-right:-9.00px">evd24</span></div><svg style="left:1692px;top:617px" width="48" height="48" viewBox="0 0 48 48" ><circle cx="24" cy="23.7" r="14.3" fill="none" stroke="#111" stroke-width="1.25"/><path d="M24 1.6 V15.9 M19.8 15.9 h8.4" fill="none" stroke="#5e5e5e" stroke-width="1.2" /><circle cx="31.6" cy="20.1" r="2.5" fill="#111"/><path d="M14.8 29.8 Q23.9 38.6 33 29.5" fill="none" stroke="#111" stroke-width="1.1" /><path d="M24 34.1 V46.1" fill="none" stroke="#5e5e5e" stroke-width="1.2" /></svg><div class="t" style="left:1686px;top:669px;height:16px;line-height:16px;font-size:13px;letter-spacing:-1px;width:60px;text-align:center;color:#111"><span class="L" style="font-size:13px;width:39.00px;transform:scaleX(0.7692);margin-right:-9.00px">evd25</span></div><svg style="left:1548px;top:689px" width="48" height="48" viewBox="0 0 48 48" ><circle cx="20.2" cy="23.7" r="14.2" fill="none" stroke="#111" stroke-width="1.25"/><path d="M20.2 1.9 V15" fill="none" stroke="#5e5e5e" stroke-width="1.2" /><path d="M16.3 18.5 L23.8 14.8" fill="none" stroke="#111" stroke-width="1" /><circle cx="20.2" cy="31.8" r="2.1" fill="#fff" stroke="#111" stroke-width="1.1"/><path d="M22.1 29.5 L25.5 23.7 H42" fill="none" stroke="#5e5e5e" stroke-width="1.2" /><path d="M20.2 34 V45.7" fill="none" stroke="#5e5e5e" stroke-width="1.2" /></svg><div class="t" style="left:1542px;top:741px;height:16px;line-height:16px;font-size:13px;letter-spacing:-1px;width:60px;text-align:center;color:#111"><span class="L" style="font-size:13px;width:39.00px;transform:scaleX(0.7692);margin-right:-9.00px">evd26</span></div><svg style="left:1620px;top:689px" width="48" height="48" viewBox="0 0 48 48" ><circle cx="28" cy="23.7" r="14.2" fill="none" stroke="#111" stroke-width="1.25"/><path d="M28 1.9 V15.9 M23.8 15.9 h8.4" fill="none" stroke="#5e5e5e" stroke-width="1.2" /><path d="M5.7 23.7 H23.2 L27.1 30.1" fill="none" stroke="#5e5e5e" stroke-width="1.2" /><circle cx="28" cy="31.4" r="2.1" fill="#fff" stroke="#111" stroke-width="1.1"/><circle cx="35.8" cy="27.8" r="2.5" fill="#111"/><path d="M23.9 38 Q23.9 33.4 28 33.4 Q32.1 33.4 32.1 38" fill="none" stroke="#111" stroke-width="1.8" /><path d="M23.9 38 V45.7" fill="none" stroke="#5e5e5e" stroke-width="1.2" /><path d="M32.1 38 V45.7" fill="none" stroke="#5e5e5e" stroke-width="1.2" /></svg><div class="t" style="left:1614px;top:741px;height:16px;line-height:16px;font-size:13px;letter-spacing:-1px;width:60px;text-align:center;color:#111"><span class="L" style="font-size:13px;width:39.00px;transform:scaleX(0.7692);margin-right:-9.00px">evd27</span></div><svg style="left:1692px;top:689px" width="48" height="48" viewBox="0 0 48 48" ><circle cx="24" cy="23.7" r="14.3" fill="none" stroke="#111" stroke-width="1.25"/><path d="M24 1.9 V13.8" fill="none" stroke="#5e5e5e" stroke-width="1.2" /><circle cx="23.9" cy="15.9" r="2.1" fill="#fff" stroke="#111" stroke-width="1.1"/><circle cx="31.4" cy="27.8" r="2.5" fill="#111"/><circle cx="23.9" cy="31.8" r="2.1" fill="#fff" stroke="#111" stroke-width="1.1"/><path d="M24 34 V45.7" fill="none" stroke="#5e5e5e" stroke-width="1.2" /></svg><div class="t" style="left:1686px;top:741px;height:16px;line-height:16px;font-size:13px;letter-spacing:-1px;width:60px;text-align:center;color:#111"><span class="L" style="font-size:13px;width:39.00px;transform:scaleX(0.7692);margin-right:-9.00px">evd28</span></div><svg style="left:1548px;top:761px" width="48" height="48" viewBox="0 0 48 48" ><circle cx="28.1" cy="23.7" r="14.2" fill="none" stroke="#111" stroke-width="1.25"/><path d="M28.1 1.6 V15.9 M23.9 15.9 h8.4" fill="none" stroke="#5e5e5e" stroke-width="1.2" /><path d="M5.6 24 H22.9 L26.8 30.2" fill="none" stroke="#5e5e5e" stroke-width="1.2" /><circle cx="28.1" cy="31.5" r="2.1" fill="#fff" stroke="#111" stroke-width="1.1"/><circle cx="35.9" cy="27.6" r="2.5" fill="#111"/><path d="M28.1 33.6 V46.1" fill="none" stroke="#5e5e5e" stroke-width="1.2" /></svg><div class="t" style="left:1542px;top:813px;height:16px;line-height:16px;font-size:13px;letter-spacing:-1px;width:60px;text-align:center;color:#111"><span class="L" style="font-size:13px;width:39.00px;transform:scaleX(0.7692);margin-right:-9.00px">evd29</span></div><svg style="left:1620px;top:761px" width="48" height="48" viewBox="0 0 48 48" ><circle cx="24" cy="23.7" r="14.3" fill="none" stroke="#111" stroke-width="1.25"/><path d="M19 1.6 V15.9 M15.8 15.9 h6.4" fill="none" stroke="#5e5e5e" stroke-width="1.2" /><path d="M29 1.6 V15.9 M25.8 15.9 h6.4" fill="none" stroke="#5e5e5e" stroke-width="1.2" /><path d="M18.8 36.2 Q18.8 31.6 24 31.6 Q29.2 31.6 29.2 36.2" fill="none" stroke="#111" stroke-width="3.2" /><path d="M17.9 36.2 V46.1" fill="none" stroke="#777" stroke-width="1" /><path d="M19.7 36.2 V46.1" fill="none" stroke="#777" stroke-width="1" /><path d="M28.3 36.2 V46.1" fill="none" stroke="#777" stroke-width="1" /><path d="M30.1 36.2 V46.1" fill="none" stroke="#777" stroke-width="1" /></svg><div class="t" style="left:1614px;top:813px;height:16px;line-height:16px;font-size:13px;letter-spacing:-1px;width:60px;text-align:center;color:#111"><span class="L" style="font-size:13px;width:31.20px;transform:scaleX(0.7692);margin-right:-7.20px">evd3</span></div><svg style="left:1692px;top:761px" width="48" height="48" viewBox="0 0 48 48" ><circle cx="24" cy="23.7" r="14.3" fill="none" stroke="#111" stroke-width="1.25"/><path d="M24 1.6 V15.9 M19.8 15.9 h8.4" fill="none" stroke="#5e5e5e" stroke-width="1.2" /><circle cx="32" cy="27.6" r="2.5" fill="#111"/><circle cx="23.9" cy="31.5" r="2.1" fill="#fff" stroke="#111" stroke-width="1.1"/><path d="M24 33.6 V46.1" fill="none" stroke="#5e5e5e" stroke-width="1.2" /></svg><div class="t" style="left:1686px;top:813px;height:16px;line-height:16px;font-size:13px;letter-spacing:-1px;width:60px;text-align:center;color:#111"><span class="L" style="font-size:13px;width:39.00px;transform:scaleX(0.7692);margin-right:-9.00px">evd30</span></div><svg style="left:1548px;top:833px" width="48" height="48" viewBox="0 0 48 48" ><circle cx="27.4" cy="23.7" r="14.2" fill="none" stroke="#111" stroke-width="1.25"/><path d="M27.4 1.9 V15.9 M23.2 15.9 h8.4" fill="none" stroke="#5e5e5e" stroke-width="1.2" /><path d="M6.3 26 H22.5 L26.4 31.4 H38" fill="none" stroke="#5e5e5e" stroke-width="1.2" /><path d="M14 30.8 H38" fill="none" stroke="#5e5e5e" stroke-width="1" /><circle cx="34.6" cy="27.8" r="2.5" fill="#111"/><path d="M27.4 33.4 V45.7" fill="none" stroke="#5e5e5e" stroke-width="1.2" /></svg><div class="t" style="left:1542px;top:885px;height:16px;line-height:16px;font-size:13px;letter-spacing:-1px;width:60px;text-align:center;color:#111"><span class="L" style="font-size:13px;width:39.00px;transform:scaleX(0.7692);margin-right:-9.00px">evd31</span></div><svg style="left:1620px;top:833px" width="48" height="48" viewBox="0 0 48 48" ><circle cx="23.8" cy="19.8" r="14.2" fill="none" stroke="#111" stroke-width="1.25"/><path d="M18 10.8 A10.6 10.6 0 1 0 29.5 28.7" fill="none" stroke="#111" stroke-width="1.1" /><path d="M1.8 19.8 H9.6" fill="none" stroke="#5e5e5e" stroke-width="1.2" /><path d="M46 19.8 H31.9 M31.9 15.9 V23.7" fill="none" stroke="#5e5e5e" stroke-width="1.2" /><path d="M20 27.6 H27.8 M23.8 27.6 V41.8" fill="none" stroke="#5e5e5e" stroke-width="1.2" /></svg><div class="t" style="left:1614px;top:885px;height:16px;line-height:16px;font-size:13px;letter-spacing:-1px;width:60px;text-align:center;color:#111"><span class="L" style="font-size:13px;width:39.00px;transform:scaleX(0.7692);margin-right:-9.00px">evd32</span></div><svg style="left:1692px;top:833px" width="48" height="48" viewBox="0 0 48 48" ><circle cx="24" cy="23.7" r="14.3" fill="none" stroke="#111" stroke-width="1.25"/><path d="M24 1.9 V16" fill="none" stroke="#5e5e5e" stroke-width="1.2" /><path d="M20 18.5 L27.8 14.6" fill="none" stroke="#111" stroke-width="1" /><circle cx="23.9" cy="31.4" r="2.1" fill="#fff" stroke="#111" stroke-width="1.1"/><path d="M24 33.6 V45.7" fill="none" stroke="#5e5e5e" stroke-width="1.2" /></svg><div class="t" style="left:1686px;top:885px;height:16px;line-height:16px;font-size:13px;letter-spacing:-1px;width:60px;text-align:center;color:#111"><span class="L" style="font-size:13px;width:39.00px;transform:scaleX(0.7692);margin-right:-9.00px">evd33</span></div><svg style="left:1548px;top:905px" width="48" height="48" viewBox="0 0 48 48" ><circle cx="23.8" cy="23.7" r="14.2" fill="none" stroke="#111" stroke-width="1.25"/><path d="M23.8 1.6 V15.9 M19.6 15.9 h8.4" fill="none" stroke="#5e5e5e" stroke-width="1.2" /><circle cx="30.7" cy="19.8" r="2.5" fill="#111"/><path d="M2.6 25.9 H18.6 L21.6 30.8" fill="none" stroke="#5e5e5e" stroke-width="1.2" /><path d="M45.2 25.9 H29 V29.5" fill="none" stroke="#5e5e5e" stroke-width="1.2" /><path d="M25.7 29.5 H32.2" fill="none" stroke="#5e5e5e" stroke-width="1.6" /><path d="M11.6 31.5 H36" fill="none" stroke="#5e5e5e" stroke-width="1" /><path d="M23.8 31.5 V46.1" fill="none" stroke="#5e5e5e" stroke-width="1.2" /></svg><svg style="left:1620px;top:905px" width="48" height="48" viewBox="0 0 48 48" ><rect x="6.7" y="12.9" width="35.7" height="17.3" rx="8.6" fill="none" stroke="#111" stroke-width="1.9"/><path d="M1.8 21.5 H6.7" fill="none" stroke="#5e5e5e" stroke-width="1.2" /><path d="M46 21.5 H37.5 M37.5 18.5 V24.3" fill="none" stroke="#5e5e5e" stroke-width="1.2" /><path d="M13.5 14 Q6.5 21.5 13.5 29.4" fill="none" stroke="#111" stroke-width="1" /><circle cx="14.7" cy="27.6" r="1.5" fill="#fff" stroke="#111" stroke-width="1.1"/><path d="M14.7 29.2 V34.7" fill="none" stroke="#5e5e5e" stroke-width="1.2" /><circle cx="19.7" cy="27.6" r="1.5" fill="#fff" stroke="#111" stroke-width="1.1"/><path d="M19.7 29.2 V34.7" fill="none" stroke="#5e5e5e" stroke-width="1.2" /><circle cx="24.5" cy="27.6" r="1.5" fill="#fff" stroke="#111" stroke-width="1.1"/><path d="M24.5 29.2 V34.7" fill="none" stroke="#5e5e5e" stroke-width="1.2" /><circle cx="29.7" cy="27.6" r="1.5" fill="#fff" stroke="#111" stroke-width="1.1"/><path d="M29.7 29.2 V34.7" fill="none" stroke="#5e5e5e" stroke-width="1.2" /><circle cx="34.2" cy="27.6" r="1.5" fill="#fff" stroke="#111" stroke-width="1.1"/><path d="M34.2 29.2 V34.7" fill="none" stroke="#5e5e5e" stroke-width="1.2" /></svg><svg style="left:1692px;top:905px" width="48" height="48" viewBox="0 0 48 48" ><rect x="6.1" y="15.9" width="35.5" height="16.5" rx="8.2" fill="none" stroke="#111" stroke-width="1.9"/><path d="M12.6 11.1 V17.9" fill="none" stroke="#111" stroke-width="1.1" /><path d="M17.4 11.1 V17.9" fill="none" stroke="#111" stroke-width="1.1" /><path d="M21.9 11.1 V17.9" fill="none" stroke="#111" stroke-width="1.1" /><path d="M26.8 11.1 V17.9" fill="none" stroke="#111" stroke-width="1.1" /><path d="M31.3 11.1 V17.9" fill="none" stroke="#111" stroke-width="1.1" /><path d="M35.8 11.1 V17.9" fill="none" stroke="#111" stroke-width="1.1" /><path d="M11.5 17.9 H36.2" fill="none" stroke="#111" stroke-width="1" /><path d="M1.8 23.7 H6.1 M9.6 23.7 H14.8 L16.7 27" fill="none" stroke="#5e5e5e" stroke-width="1.2" /><path d="M46 23.7 H33.6 V26.3" fill="none" stroke="#5e5e5e" stroke-width="1.2" /><circle cx="38.1" cy="20.7" r="1.5" fill="#111"/><path d="M11.5 30.8 H36.2" fill="none" stroke="#111" stroke-width="1" /><path d="M23.9 28.9 V36.7" fill="none" stroke="#5e5e5e" stroke-width="1.2" /></svg><div style="left:1796px;top:256px;width:14px;height:701px;background:#e3e1de;border-left:1px solid #cfcbc6"></div><div style="left:1797px;top:256px;width:13px;height:13px;background:linear-gradient(90deg,#f6f5f3,#eceae7)"></div><svg style="left:1797px;top:256px" width="13" height="13" viewBox="0 0 13 13" ><path d="M6.5 4 l-4 4.5 h8z" fill="#555"/></svg><div style="left:1797px;top:269px;width:13px;height:505px;background:linear-gradient(90deg,#fdfdfc,#f1efec);border-top:1px solid #cfcbc6;border-bottom:1px solid #b5b1ac"></div><div style="left:1797px;top:944px;width:13px;height:13px;background:linear-gradient(90deg,#f6f5f3,#eceae7)"></div><svg style="left:1797px;top:944px" width="13" height="13" viewBox="0 0 13 13" ><path d="M6.5 9 l-4 -4.5 h8z" fill="#555"/></svg><div class="btn" style="left:1534px;top:965px;width:123px;height:22px;"></div><svg style="left:1586px;top:967px" width="18" height="18" viewBox="0 0 24 24" ><g transform="translate(24,24) rotate(180)"><path d="M17 19.5 H12.5 Q9.5 19.5 9.5 16.5 V9 H6 L11 2.5 L16 9 H12.6 V15.5 Q12.6 16.6 13.8 16.6 H17Z" fill="#2d55e8" stroke="#1a3ab8" stroke-width=".7"/></g></svg><div class="btn" style="left:1662px;top:965px;width:123px;height:22px;"></div><svg style="left:1714px;top:967px" width="18" height="18" viewBox="0 0 24 24" ><path d="M17 19.5 H12.5 Q9.5 19.5 9.5 16.5 V9 H6 L11 2.5 L16 9 H12.6 V15.5 Q12.6 16.6 13.8 16.6 H17Z" fill="#a8a8a6" stroke="#8a8a88" stroke-width=".7"/></svg><div class="btn" style="left:1790px;top:965px;width:23px;height:22px;"></div><svg style="left:1794px;top:968px" width="16" height="16" viewBox="0 0 16 16" ><ellipse cx="6" cy="10" rx="4" ry="1.6" fill="#9a9a98"/><rect x="2" y="10" width="8" height="4.5" fill="#8a8a88"/><ellipse cx="6" cy="14.5" rx="4" ry="1.6" fill="#7a7a78"/><path d="M9 3 A4 4 0 1 1 9 9.5" fill="none" stroke="#5a7ae0" stroke-width="1.6"/><path d="M6.5 3 L10 .8 V5.4Z" fill="#5a7ae0"/></svg>
</body></html>
